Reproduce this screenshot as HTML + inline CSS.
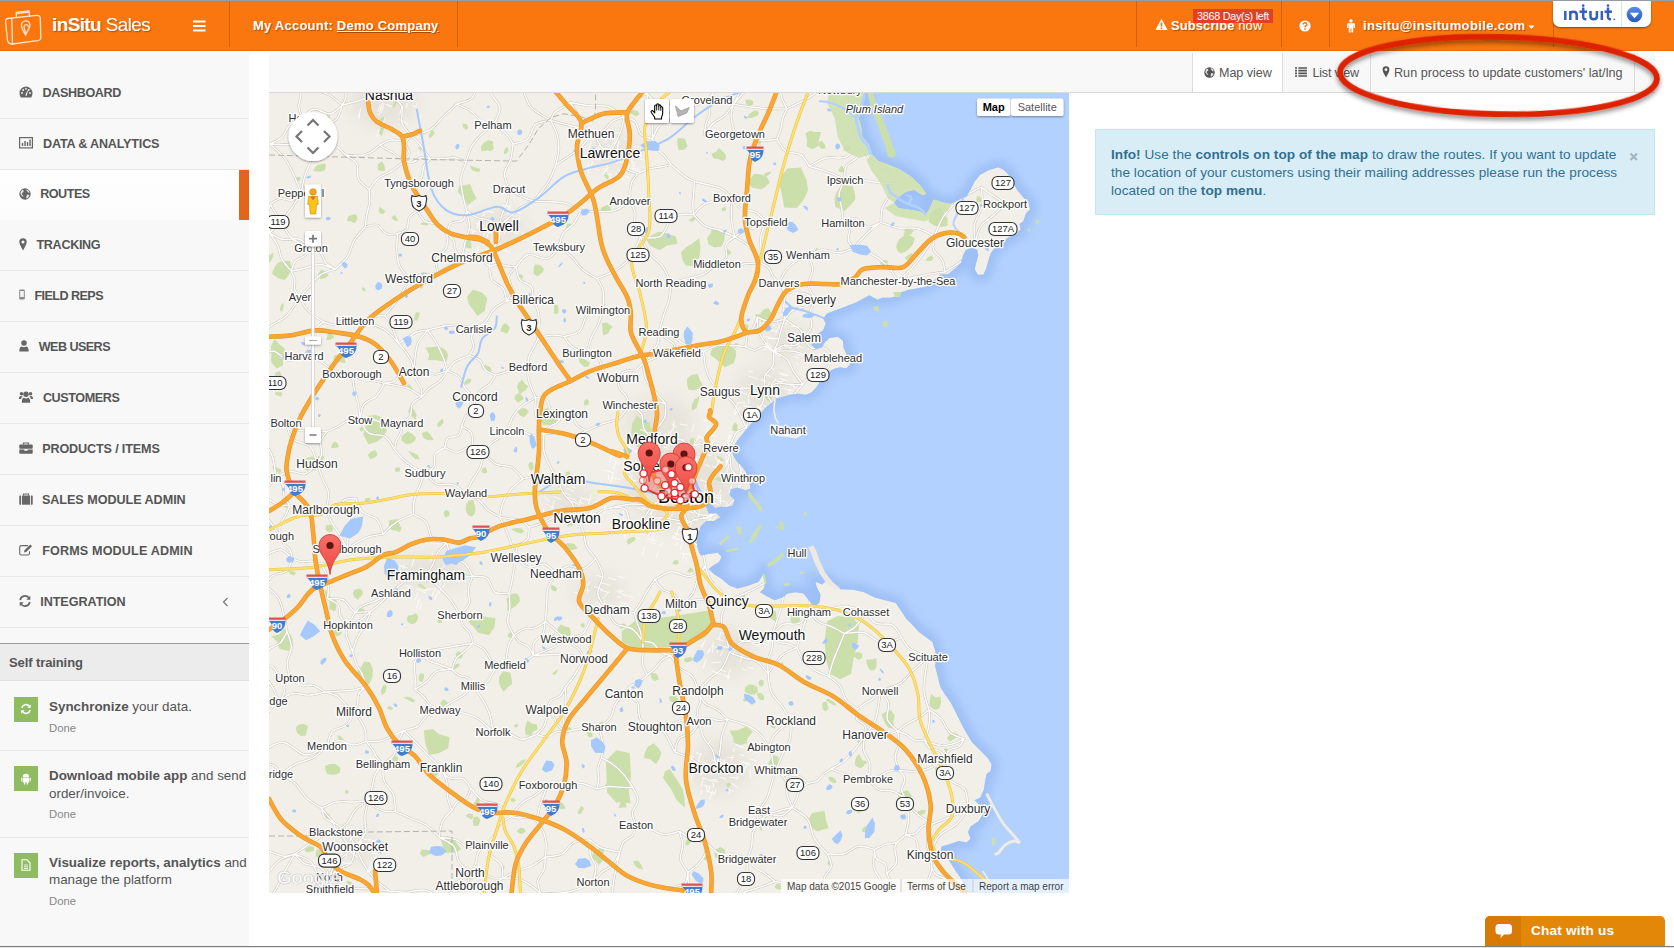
<!DOCTYPE html>
<html><head><meta charset="utf-8"><title>inSitu Sales</title>
<style>
*{box-sizing:border-box}
html,body{margin:0;padding:0}
body{width:1674px;height:948px;overflow:hidden;background:#fff;font-family:"Liberation Sans",sans-serif;color:#555;position:relative;font-size:13px}
.abs{position:absolute}
#topline{left:0;top:0;width:1674px;height:1px;background:#9a9da1}
#hdr{left:0;top:1px;width:1674px;height:50px;background:#f9770e;border-bottom:1px solid #f56a05}
#hdr .dv{position:absolute;top:0;width:1px;height:46px;background:#d4600a}
#hdr .t{position:absolute;color:#fff;font-weight:bold;font-size:13px;white-space:nowrap;text-shadow:1px 1px 1px rgba(0,0,0,.35)}
#side{left:0;top:53px;width:249px;height:893px;background:#f8f8f8}
.mi{position:absolute;left:0;width:249px;height:51px;border-bottom:1px solid #e7e7e7}
.mi span{position:absolute;top:17px;font-weight:bold;font-size:13.2px;color:#555;white-space:nowrap;letter-spacing:-.15px}
.mi svg{position:absolute}
.mi.act{background:linear-gradient(#fff,#fbfbfb);border-bottom-color:#fbfbfb}
.mi.act:after{content:"";position:absolute;right:0;top:0;width:10px;height:50px;background:#e5641c}
#st{left:0;top:643px;width:249px;height:38px;background:#ececec;border-top:1px solid #9b9b9b;border-bottom:1px solid #e0e0e0}
#st span{position:absolute;left:9px;top:11px;font-weight:bold;font-size:13px;color:#555;letter-spacing:-.1px}
.tr{position:absolute;left:0;width:249px;border-bottom:1px solid #e7e7e7}
.tr .ic{position:absolute;left:14px;width:24px;height:25px;background:#8fbc61}
.tr .tx{position:absolute;left:49px;font-size:13.4px;line-height:18px;color:#555;white-space:nowrap}
.tr .dn{position:absolute;left:49px;font-size:11.3px;color:#888}
#tb{left:269px;top:53px;width:1386px;height:40px;background:#f8f8f8;border-bottom:1px solid #d9d9d9;z-index:2}
#tb .b{position:absolute;top:0;height:39px;border-left:1px solid #dcdcdc;font-size:13px;color:#555;white-space:nowrap}
#tb .b span{position:absolute;top:12.6px}
#alert{left:1095px;top:129px;width:560px;height:86px;background:#d9edf7;border:1px solid #bce8f1;color:#31708f;font-size:13.6px;letter-spacing:.045px;line-height:18px}
#alert div{position:absolute;left:15px;top:16px;white-space:nowrap}
#chat{left:1485px;top:916px;width:180px;height:30px;background:#e38709;border-radius:5px 5px 0 0;overflow:hidden}
#chat i{position:absolute;left:0;top:0;width:36px;height:30px;background:#d87a06}
#chat span{position:absolute;left:46px;top:7px;color:#fff;font-weight:bold;font-size:13.6px;white-space:nowrap;letter-spacing:.2px}
#botline{left:0;top:946px;width:1674px;height:1px;background:#7d7d7d}
#botline2{left:0;top:947px;width:1674px;height:1px;background:#e8e8e8}
#intuit{left:1553px;top:1px;width:98px;height:26px;background:#fff;border-radius:0 0 7px 7px;box-shadow:0 1px 2px rgba(0,0,0,.45)}
#mapwrap{left:269px;top:92px;width:800px;height:801px;overflow:hidden}
#map text{font-family:"Liberation Sans",sans-serif}
</style></head><body>
<div id="topline" class="abs"></div>
<div id="hdr" class="abs">
<svg class="abs" style="left:3px;top:7px" width="42" height="38" viewBox="0 0 42 38"><g fill="none" stroke="#fde3cf" stroke-width="1.3" stroke-linejoin="round" stroke-linecap="round">
<path d="M4.500 10.500 L33.500 7.300 Q37 7 37.300 10.500 L37.800 29 Q37.900 32.200 34.700 32.700 L9.500 36 Q5.500 36.300 4.500 32.500 L2.600 14.500 Q2.300 11 4.500 10.500Z"/>
<path d="M8.800 10 L9.500 36"/><path d="M13.500 9.300 L13.200 4.300 L26 2.800 L26.500 8"/><path d="M13.500 5.500 L26.200 4.200"/>
<path d="M22.500 27 C20 22 18.200 20 18.400 17.300 A4.300 4.300 0 0 1 27 17 C27 20 24.500 22.500 22.500 27Z"/><path d="M22.700 27 C22 22 21 20.500 21 18.500 A2.200 2.200 0 0 1 25.300 18.300"/></g></svg>
<div class="t" style="left:52px;top:13px;font-size:19px;letter-spacing:-.62px;text-shadow:1px 1px 1px rgba(120,50,0,.55)">inSitu <span style="font-weight:normal">Sales</span></div>
<svg class="abs" style="left:193px;top:19px" width="13" height="12"><path d="M0 1.500h12.500M0 6h12.500M0 10.500h12.500" stroke="#fff" stroke-width="2.100"/></svg>
<div class="dv" style="left:229px"></div>
<div class="dv" style="left:457px"></div>
<div class="dv" style="left:1136px"></div>
<div class="dv" style="left:1281px"></div>
<div class="dv" style="left:1329px"></div>
<div class="dv" style="left:1553px"></div>
<div class="t" style="left:253px;top:16.5px;letter-spacing:0.225px">My Account: <span style="text-decoration:underline">Demo Company</span></div>
<svg class="abs" style="left:1155px;top:17px" width="13" height="13" viewBox="0 0 13 13"><path d="M6.500 .8 L12.600 12 H.4Z" fill="#fff"/><path d="M6.500 4.500v4M6.500 9.600v1.400" stroke="#f9770e" stroke-width="1.700"/></svg>
<div class="t" style="left:1171px;top:16.5px;letter-spacing:0.079px">Subscribe<span style="font-weight:normal"> now</span></div>
<div class="abs" style="left:1193px;top:8px;width:80px;height:14px;background:#e23c28;opacity:.96"></div>
<div class="abs" style="left:1197px;top:8.5px;font-size:10.8px;color:#fff;white-space:nowrap;letter-spacing:-0.264px">3868 Day(s) left</div>
<svg class="abs" style="left:1299px;top:19px" width="12" height="12" viewBox="0 0 12 12"><circle cx="6" cy="6" r="5.600" fill="#fff"/><path d="M4.200 4.600 Q4.200 2.800 6 2.800 Q7.800 2.800 7.800 4.400 Q7.800 5.500 6.600 6 Q6 6.300 6 7.200" fill="none" stroke="#f9770e" stroke-width="1.500"/><rect x="5.200" y="8.200" width="1.600" height="1.500" fill="#f9770e"/></svg>
<svg class="abs" style="left:1346px;top:18px" width="10" height="14" viewBox="0 0 10 14"><circle cx="5" cy="2" r="1.700" fill="#fff"/><path d="M2 4.300h6q1 0 1 1v3.700h-1.400v-2.800h-.4v7.300h-1.700v-4h-1v4h-1.700v-7.300h-.4v2.800h-1.400v-3.700q0-1 1-1z" fill="#fff"/></svg>
<div class="t" style="left:1363px;top:16.5px;letter-spacing:0.359px">insitu@insitumobile.com</div>
<svg class="abs" style="left:1528px;top:24px" width="8" height="5"><path d="M.5 .5h6l-3 3.500z" fill="#fff"/></svg>
</div>
<div id="side" class="abs">
<div class="mi" style="top:15.0px;height:51.0px"><svg class="abs" style="left:19px;top:18px" width="14" height="12" viewBox="0 0 14 12"><path d="M7 .5 A6.500 6.500 0 0 1 13.500 7 Q13.500 9.500 12.300 11.500 H1.700 Q.5 9.500 .5 7 A6.500 6.500 0 0 1 7 .5Z" fill="#666"/><g fill="#f8f8f8"><circle cx="3" cy="7" r=".9"/><circle cx="4.200" cy="4" r=".9"/><circle cx="7" cy="2.800" r=".9"/><circle cx="9.800" cy="4" r=".9"/><circle cx="11" cy="7" r=".9"/><path d="M6.300 9.500 L8.300 4.500 L8.900 4.800 L7.800 9.800Z"/></g></svg><span style="left:42.5px;top:17.9px;font-size:12.6px;letter-spacing:-0.373px">DASHBOARD</span></div>
<div class="mi" style="top:66.0px;height:51.0px"><svg class="abs" style="left:19px;top:18px" width="14" height="12" viewBox="0 0 14 12"><rect x=".6" y=".6" width="12.800" height="10.300" fill="none" stroke="#666" stroke-width="1.200"/><path d="M3.500 9v-3M6 9v-5M8.500 9v-4M11 9v-6.500" stroke="#666" stroke-width="1.400"/></svg><span style="left:43.0px;top:17.9px;font-size:12.6px;letter-spacing:-0.179px">DATA &amp; ANALYTICS</span></div>
<div class="mi act" style="top:117.0px;height:50.0px"><svg class="abs" style="left:19px;top:18px" width="12" height="12" viewBox="0 0 12 12"><circle cx="6" cy="6" r="5.700" fill="#666"/><path d="M3.500 1.500 Q5.500 2.500 4.500 4 Q2.500 4.500 3 6.500 Q4.500 7 4.500 9 Q3 8.500 1.500 6 Q1 3.500 3.500 1.500Z M7.500 1.200 Q10 2 10.800 4.500 Q9 5 8.500 3.500 Q7 3 7.500 1.200Z M8 6.500 Q10 6.500 10.500 7.500 Q9.500 10 7.500 10.500 Q7 8.500 8 6.500Z" fill="#f8f8f8" opacity=".85"/></svg><span style="left:40.2px;top:17.4px;font-size:12.6px;letter-spacing:-0.481px">ROUTES</span></div>
<div class="mi" style="top:167.0px;height:51.0px"><svg class="abs" style="left:19px;top:18px" width="8" height="13" viewBox="0 0 8 13"><path d="M4 .3 A3.700 3.700 0 0 1 7.700 4 Q7.700 6 4 12.500 Q.3 6 .3 4 A3.700 3.700 0 0 1 4 .3Z" fill="#666"/><circle cx="4" cy="4" r="1.500" fill="#f8f8f8"/></svg><span style="left:36.5px;top:17.9px;font-size:12.6px;letter-spacing:-0.334px">TRACKING</span></div>
<div class="mi" style="top:218.0px;height:51.0px"><svg class="abs" style="left:19px;top:18px" width="6" height="11" viewBox="0 0 6 11"><rect x=".2" y=".5" width="5.600" height="10" rx="1.200" fill="#8a8a8a"/><rect x="1.200" y="2" width="3.600" height="6" fill="#f4f4f4"/></svg><span style="left:34.4px;top:17.9px;font-size:12.6px;letter-spacing:-0.559px">FIELD REPS</span></div>
<div class="mi" style="top:269.0px;height:51.0px"><svg class="abs" style="left:19px;top:18px" width="10" height="12" viewBox="0 0 10 12"><circle cx="5" cy="3" r="2.800" fill="#666"/><path d="M.3 11.500 Q.3 6.500 3 6.500 Q5 8 7 6.500 Q9.700 6.500 9.700 11.500Z" fill="#666"/></svg><span style="left:38.8px;top:17.9px;font-size:12.6px;letter-spacing:-0.565px">WEB USERS</span></div>
<div class="mi" style="top:320.0px;height:51.0px"><svg class="abs" style="left:19px;top:18px" width="14" height="12" viewBox="0 0 14 12"><circle cx="7" cy="3.300" r="2.700" fill="#666"/><path d="M2.800 11.700 Q2.800 6.800 5 6.800 Q7 8 9 6.800 Q11.200 6.800 11.200 11.700Z" fill="#666"/><circle cx="2.500" cy="2.800" r="1.800" fill="#666"/><circle cx="11.500" cy="2.800" r="1.800" fill="#666"/><path d="M0 8 Q0 5 1.800 5 Q3 5.500 3.800 5.300 Q2.200 6.500 2.200 8Z M14 8 Q14 5 12.200 5 Q11 5.500 10.200 5.300 Q11.800 6.500 11.800 8Z" fill="#666"/></svg><span style="left:42.9px;top:17.9px;font-size:12.6px;letter-spacing:-0.406px">CUSTOMERS</span></div>
<div class="mi" style="top:371.0px;height:51.0px"><svg class="abs" style="left:19px;top:18px" width="14" height="12" viewBox="0 0 14 12"><path d="M4.500 2.500v-1.500h5v1.500" fill="none" stroke="#666" stroke-width="1.200"/><rect x=".3" y="2.500" width="13.400" height="4.300" rx=".8" fill="#666"/><path d="M.3 7.600h5v1.200h3.400v-1.200h5v3.300q0 .8-.8.800h-11.800q-.8 0-.8-.8z" fill="#666"/></svg><span style="left:42.2px;top:17.9px;font-size:12.6px;letter-spacing:-0.135px">PRODUCTS / ITEMS</span></div>
<div class="mi" style="top:422.0px;height:51.0px"><svg class="abs" style="left:19px;top:18px" width="14" height="12" viewBox="0 0 14 12"><path d="M4.500 2.500v-1.500h5v1.500" fill="none" stroke="#666" stroke-width="1.200"/><rect x="3" y="2.500" width="8" height="9.200" fill="#666"/><path d="M.3 3.300q0-.8.8-.8h1v9.200h-1q-.8 0-.8-.8z M13.700 3.300q0-.8-.8-.8h-1v9.200h1q.8 0 .8-.8z" fill="#666"/></svg><span style="left:41.9px;top:17.9px;font-size:12.6px;letter-spacing:-0.032px">SALES MODULE ADMIN</span></div>
<div class="mi" style="top:473.0px;height:51.0px"><svg class="abs" style="left:19px;top:18px" width="14" height="12" viewBox="0 0 14 12"><path d="M9 1.600h-6.500q-1.800 0-1.800 1.800v5.800q0 1.800 1.800 1.800h6.200q1.800 0 1.800-1.800v-2" fill="none" stroke="#666" stroke-width="1.100"/><path d="M5 8.500 L5.500 6.300 L11.300 .5 L13 2.200 L7.200 8Z" fill="#666"/></svg><span style="left:42.2px;top:17.9px;font-size:12.6px;letter-spacing:0.147px">FORMS MODULE ADMIN</span></div>
<div class="mi" style="top:524.0px;height:51.0px"><svg class="abs" style="left:19px;top:18px" width="12" height="12" viewBox="0 0 12 12"><path d="M1.200 5 A4.900 4.900 0 0 1 9.800 2.800 M10.800 7 A4.900 4.900 0 0 1 2.200 9.200" fill="none" stroke="#666" stroke-width="1.700"/><path d="M11.300 .8v4h-4z M.7 11.200v-4h4z" fill="#666"/></svg><span style="left:40.2px;top:17.9px;font-size:12.6px;letter-spacing:-0.039px">INTEGRATION</span></div>
<svg class="abs" style="left:222px;top:544px" width="7" height="10"><path d="M5.500 1 L1.500 5 L5.500 9" fill="none" stroke="#777" stroke-width="1.200"/></svg>
<div id="st" class="abs" style="top:590px"><span>Self training</span></div>
<div class="tr" style="top:628px;height:70px"><div class="ic" style="top:16px"><svg class="abs" style="left:6px;top:6px" width="12" height="12" viewBox="0 0 12 12"><path d="M1.800 5 A4.300 4.300 0 0 1 9.300 3.200 M10.200 7 A4.300 4.300 0 0 1 2.700 8.800" fill="none" stroke="#fff" stroke-width="1.500"/><path d="M10.800 1.200v3.500h-3.500z M1.200 10.800v-3.500h3.500z" fill="#fff"/></svg></div><div class="tx" style="top:16.5px"><b>Synchronize</b> your data.</div><div class="dn" style="top:40.8px">Done</div></div>
<div class="tr" style="top:698px;height:87px"><div class="ic" style="top:15px"><svg class="abs" style="left:7px;top:7px" width="10" height="12" viewBox="0 0 10 12"><path d="M1.800 4 A3.200 3.200 0 0 1 8.200 4Z M1.800 4.600h6.400v4.400q0 .6-.6.600h-5.200q-.6 0-.6-.6z M.2 4.800h1v3.500h-1z M8.800 4.800h1v3.500h-1z M3 9.500h1.200v2h-1.200z M5.800 9.500h1.200v2h-1.200z" fill="#fff"/></svg></div><div class="tx" style="top:15.7px"><b>Download mobile app</b> and send</div><div class="tx" style="top:33.6px">order/invoice.</div><div class="dn" style="top:57.2px">Done</div></div>
<div class="tr" style="top:785px;height:108px;border-bottom:0"><div class="ic" style="top:15px"><svg class="abs" style="left:7px;top:6px" width="10" height="12" viewBox="0 0 10 12"><path d="M1 .8h5l3 3v7.400h-8z" fill="none" stroke="#fff" stroke-width="1.100"/><path d="M3 6h4M3 7.800h4M3 9.500h4" stroke="#fff" stroke-width=".8"/></svg></div><div class="tx" style="top:15.8px"><b>Visualize reports, analytics</b> and</div><div class="tx" style="top:33.1px">manage the platform</div><div class="dn" style="top:57.4px">Done</div></div>
</div>
<div id="tb" class="abs">
<div class="b" style="left:922.5px;width:90.5px;background:#fff"><svg class="abs" style="left:11px;top:13.500px" width="11" height="11" viewBox="0 0 12 12"><circle cx="6" cy="6" r="5.700" fill="#555"/><path d="M3.500 1.500 Q5.500 2.500 4.500 4 Q2.500 4.500 3 6.500 Q4.500 7 4.500 9 Q3 8.500 1.500 6 Q1 3.500 3.500 1.500Z M7.500 1.200 Q10 2 10.800 4.500 Q9 5 8.500 3.500 Q7 3 7.500 1.200Z M8 6.500 Q10 6.500 10.500 7.500 Q9.500 10 7.500 10.500 Q7 8.500 8 6.500Z" fill="#fff" opacity=".85"/></svg><span style="left:26.500px;font-size:12.6px;letter-spacing:-0.063px">Map view</span></div>
<div class="b" style="left:1013.0px;width:87.5px"><svg class="abs" style="left:12px;top:14px" width="12" height="10"><path d="M0 1h2M3.300 1h8.700M0 3.700h2M3.300 3.700h8.700M0 6.400h2M3.300 6.400h8.700M0 9h2M3.300 9h8.700" stroke="#555" stroke-width="1.700"/></svg><span style="left:29.500px;font-size:12.6px;letter-spacing:-0.222px">List view</span></div>
<div class="b" style="left:1100.5px;width:264.0px"><svg class="abs" style="left:11px;top:13px" width="8" height="12" viewBox="0 0 8 13"><path d="M4 .3 A3.700 3.700 0 0 1 7.700 4 Q7.700 6 4 12.500 Q.3 6 .3 4 A3.700 3.700 0 0 1 4 .3Z" fill="#555"/><circle cx="4" cy="4" r="1.500" fill="#f7f7f7"/></svg><span style="left:23.500px;font-size:12.6px;letter-spacing:0.017px">Run process to update customers' lat/lng</span></div>
<div class="b" style="left:1364.5px;width:1px"></div>
</div>
<div id="mapwrap" class="abs">
<svg id="map" width="800" height="801" viewBox="0 0 800 801">
<defs><filter id="gl" x="-10%" y="-10%" width="120%" height="120%"><feGaussianBlur stdDeviation="5"/></filter><filter id="ub" x="-30%" y="-30%" width="160%" height="160%"><feGaussianBlur stdDeviation="9"/></filter><clipPath id="seaclip"><path d="M595.4 0.0 L594.8 5.3 L593.5 15.8 L589.6 26.4 L592.2 34.3 L593.5 44.8 L600.1 52.7 L602.7 62.0 L609.3 69.1 L615.9 71.2 L629.1 76.5 L642.3 84.4 L651.5 93.6 L657.3 101.5 L654.2 103.4 L644.9 98.1 L637.0 99.7 L629.1 105.5 L625.2 110.8 L629.1 116.0 L639.7 117.4 L650.2 119.2 L656.8 122.6 L660.8 116.0 L664.7 107.6 L673.9 110.2 L681.9 112.1 L689.8 108.1 L694.5 105.5 L697.7 104.2 L701.6 97.6 L705.6 89.7 L710.9 83.1 L718.8 78.6 L729.3 75.2 L734.6 77.8 L738.6 81.8 L743.8 89.7 L747.8 97.6 L754.4 105.5 L759.7 110.8 L761.0 117.4 L757.0 121.3 L754.4 129.2 L750.4 131.9 L751.7 137.1 L746.5 142.4 L739.9 145.0 L734.6 149.0 L727.2 154.3 L721.9 160.9 L719.3 168.8 L717.2 176.7 L714.3 182.8 L709.0 182.8 L705.6 177.2 L707.4 170.1 L709.3 163.5 L708.2 157.7 L702.4 155.6 L696.6 158.2 L694.0 163.5 L691.9 170.9 L685.8 176.7 L679.2 182.0 L671.3 182.5 L666.0 187.2 L660.8 192.5 L655.5 195.1 L647.6 196.5 L639.7 197.8 L631.8 200.4 L626.5 204.4 L621.2 205.7 L613.3 205.7 L608.5 207.8 L600.3 203.2 L587.1 210.5 L576.6 214.5 L566.0 218.5 L558.1 221.6 L554.2 226.4 L556.8 231.6 L554.2 238.2 L548.9 241.7 L544.4 247.5 L542.3 252.7 L547.0 257.0 L552.8 255.4 L556.0 250.1 L560.8 246.1 L568.7 244.8 L573.9 248.8 L574.5 255.4 L579.2 265.9 L581.1 272.5 L577.1 276.5 L571.3 275.2 L566.0 276.5 L560.8 279.1 L555.0 284.4 L550.7 289.7 L547.6 294.9 L542.8 300.2 L537.0 302.8 L529.1 301.8 L521.2 302.8 L515.9 304.2 L510.7 305.5 L506.7 306.8 L502.7 310.8 L496.1 316.0 L489.6 323.9 L481.6 331.9 L476.4 338.4 L469.8 346.4 L464.5 354.3 L463.2 360.9 L467.1 368.8 L472.4 374.1 L476.4 379.3 L480.3 389.9 L481.6 396.5 L476.4 398.3 L468.5 395.7 L461.9 397.0 L460.5 403.1 L465.8 408.3 L463.2 414.1 L455.3 415.2 L450.0 414.1 L452.7 414.6 L446.1 415.9 L442.2 412.0 L436.9 406.7 L430.3 396.1 L426.4 385.6 L424.3 384.3 L426.4 394.8 L433.0 406.7 L438.2 417.2 L439.6 421.2 L447.5 421.2 L451.4 425.2 L444.8 429.1 L436.9 429.1 L431.6 434.4 L429.0 442.3 L427.7 450.2 L429.0 458.1 L431.6 463.4 L439.6 462.1 L448.8 460.8 L452.7 464.7 L450.1 470.0 L443.5 473.9 L439.6 477.1 L444.8 481.9 L452.7 487.1 L460.7 493.7 L468.6 496.4 L479.1 493.7 L489.7 489.8 L493.6 483.2 L496.3 489.8 L494.9 496.4 L491.0 500.3 L500.2 505.6 L505.5 508.2 L513.4 505.6 L518.7 501.6 L526.6 500.3 L534.5 501.6 L539.8 508.2 L545.0 514.8 L550.3 510.9 L551.6 503.0 L547.7 495.0 L546.4 489.8 L553.0 492.4 L558.2 487.7 L563.5 492.4 L571.4 497.2 L584.6 497.7 L595.1 500.3 L605.7 505.6 L616.2 508.2 L626.8 510.9 L632.1 518.8 L637.3 526.7 L642.6 532.0 L650.0 539.9 L663.4 550.0 L666.0 557.9 L667.4 565.8 L666.0 573.7 L668.7 584.3 L671.3 594.8 L675.3 601.4 L681.9 610.7 L688.4 623.8 L695.0 637.0 L703.0 650.2 L710.9 658.1 L718.8 666.0 L722.7 672.6 L721.4 679.2 L717.5 681.9 L716.1 689.8 L714.8 697.7 L711.4 705.6 L705.6 708.2 L710.9 713.5 L716.1 718.8 L709.5 729.3 L701.6 734.6 L699.0 739.9 L701.6 746.5 L697.7 750.4 L689.8 749.1 L681.9 751.7 L672.6 754.4 L671.3 759.7 L676.6 763.6 L681.9 771.5 L687.1 779.4 L692.4 787.3 L696.4 800.0 L697.2 802.1 L800.0 801.0 L800.0 0.0Z"/></clipPath><linearGradient id="pin" x1="0" y1="0" x2="0" y2="1"><stop offset="0" stop-color="#f8706a"/><stop offset="1" stop-color="#ee4840"/></linearGradient></defs>
<rect width="800" height="801" fill="#f2efe9"/>
<g fill="#e6e2d9" filter="url(#ub)" opacity=".9">
<ellipse cx="415" cy="395" rx="60" ry="45"/>
<ellipse cx="230" cy="135" rx="28" ry="18"/>
<ellipse cx="345" cy="60" rx="26" ry="18"/>
<ellipse cx="115" cy="10" rx="35" ry="25"/>
<ellipse cx="450" cy="675" rx="30" ry="28"/>
<ellipse cx="160" cy="480" rx="40" ry="18"/>
<ellipse cx="300" cy="410" rx="25" ry="20"/>
<ellipse cx="495" cy="300" rx="30" ry="25"/>
<ellipse cx="520" cy="250" rx="25" ry="18"/>
<ellipse cx="90" cy="755" rx="22" ry="16"/>
<ellipse cx="330" cy="500" rx="25" ry="18"/>
<ellipse cx="460" cy="560" rx="25" ry="25"/>
<ellipse cx="390" cy="330" rx="35" ry="25"/>
</g>
<g fill="#cbdfab"><path d="M203.3 109.4 L198.8 113.5 L194.2 105.6 L188.5 99.7 L190.4 93.5 L195.7 93.2 L201.2 92.0 L203.9 99.6 L207.6 106.4Z"/><path d="M216.9 212.8 L215.7 219.1 L208.5 224.0 L203.2 216.6 L199.6 211.9 L198.1 204.5 L204.0 197.6 L213.3 200.7 L218.3 206.6Z"/><path d="M160.2 262.2 L156.2 255.7 L166.4 254.7 L173.1 255.8 L177.3 258.8 L179.2 263.3 L177.1 269.9 L167.6 268.2 L159.0 268.1Z"/><path d="M8.6 185.9 L2.8 181.8 L5.6 175.3 L8.5 171.2 L13.4 168.9 L21.1 168.8 L22.6 176.3 L20.2 182.5 L15.6 188.0Z"/><path d="M107.3 350.1 L99.4 352.2 L94.2 342.2 L97.2 332.7 L99.6 323.7 L107.0 323.0 L115.5 326.6 L117.8 338.7 L112.6 346.2Z"/><path d="M2.3 262.0 L1.9 254.3 L5.8 247.0 L11.1 253.1 L16.0 256.8 L14.0 264.2 L13.9 273.5 L7.6 276.5 L2.2 270.6Z"/><path d="M271.7 327.7 L269.3 322.0 L273.7 317.3 L279.7 316.1 L284.5 319.4 L288.9 324.5 L287.2 331.6 L280.3 333.0 L274.1 333.2Z"/><path d="M383.1 339.8 L378.2 348.8 L370.3 355.9 L362.2 350.6 L362.3 339.9 L363.2 331.6 L368.0 323.4 L374.2 329.0 L380.7 330.6Z"/><path d="M257.2 297.7 L254.6 299.5 L250.6 302.4 L249.1 297.7 L248.0 294.4 L249.4 290.9 L253.2 287.4 L256.1 291.9 L259.2 294.3Z"/><path d="M390.7 158.3 L381.3 154.0 L376.7 147.1 L383.8 142.7 L389.5 139.7 L397.4 141.2 L407.0 144.5 L408.4 152.1 L397.7 153.5Z"/><path d="M145.1 349.6 L142.0 351.6 L137.2 352.0 L132.4 348.6 L132.7 344.1 L135.6 342.1 L138.6 339.5 L143.4 341.9 L147.2 345.9Z"/><path d="M32.7 372.7 L35.1 368.2 L39.6 364.9 L46.0 364.5 L47.4 369.0 L52.6 372.6 L48.1 377.1 L41.5 379.4 L35.2 377.3Z"/><path d="M238.2 241.8 L235.1 240.4 L231.3 239.3 L232.6 235.3 L233.7 232.8 L236.1 231.3 L238.8 232.9 L241.0 235.7 L239.6 238.7Z"/><path d="M88.4 126.6 L87.3 129.0 L85.2 131.3 L82.6 129.6 L78.1 128.9 L79.0 124.6 L82.4 123.1 L85.1 122.3 L88.0 123.6Z"/><path d="M272.0 181.5 L268.7 184.5 L264.3 181.5 L264.7 176.2 L266.0 172.6 L269.5 172.8 L272.1 173.8 L274.7 176.2 L274.3 179.7Z"/><path d="M333.4 238.8 L333.6 236.0 L332.8 231.2 L337.9 230.6 L340.7 232.8 L343.8 234.7 L340.9 237.8 L339.3 241.4 L334.3 243.5Z"/><path d="M44.1 78.9 L46.0 75.6 L48.2 72.9 L51.7 72.4 L56.4 71.4 L56.8 74.8 L55.9 78.3 L51.3 79.7 L48.0 79.6Z"/><path d="M212.4 59.6 L212.0 54.7 L214.8 50.4 L219.5 48.1 L224.0 49.2 L224.2 53.4 L224.6 56.9 L221.2 59.3 L218.0 58.6Z"/><path d="M539.0 98.1 L535.2 106.9 L527.8 116.1 L515.2 115.4 L512.8 101.4 L509.2 87.9 L518.4 76.6 L531.9 75.5 L537.6 88.2Z"/><path d="M496.0 95.1 L491.9 97.3 L487.4 96.5 L482.1 93.9 L480.5 87.1 L485.4 81.7 L492.1 82.5 L497.8 84.7 L500.9 90.7Z"/><path d="M455.5 148.0 L452.6 154.5 L445.5 155.6 L439.4 152.5 L438.1 146.3 L441.1 141.8 L443.8 135.8 L449.6 138.8 L455.7 141.3Z"/><path d="M565.5 106.5 L567.7 100.0 L573.1 92.2 L583.6 94.3 L586.1 101.9 L586.2 107.4 L582.6 111.9 L575.6 119.0 L566.2 114.7Z"/><path d="M430.4 164.9 L424.0 173.9 L416.4 173.5 L413.4 167.5 L411.8 160.7 L417.2 154.9 L421.8 152.6 L430.2 146.3 L431.5 155.4Z"/><path d="M455.8 275.3 L448.6 268.6 L441.1 262.6 L444.1 254.0 L454.2 253.4 L461.2 253.7 L466.7 257.9 L467.0 263.9 L464.8 270.9Z"/><path d="M501.1 228.0 L497.3 228.3 L492.2 230.2 L491.5 224.9 L491.6 220.9 L494.4 217.5 L499.4 215.9 L502.0 220.3 L505.2 224.6Z"/><path d="M543.4 57.2 L537.9 54.6 L537.9 47.6 L536.5 41.3 L541.3 38.7 L545.4 40.0 L552.3 40.1 L549.9 47.9 L548.7 54.4Z"/><path d="M419.6 297.8 L418.0 292.4 L418.0 286.8 L422.4 282.9 L428.9 281.7 L430.6 288.1 L434.0 292.7 L429.7 296.5 L425.2 298.3Z"/><path d="M628.3 158.9 L627.1 154.2 L629.8 147.8 L636.8 142.1 L642.1 144.1 L645.9 146.6 L643.9 152.6 L639.0 157.9 L632.4 161.4Z"/><path d="M671.3 135.1 L665.7 133.7 L659.6 130.1 L661.1 123.1 L664.9 117.2 L672.2 115.8 L675.5 122.2 L678.8 126.8 L678.3 133.9Z"/><path d="M408.5 52.9 L408.1 49.7 L408.9 45.9 L412.8 46.2 L416.1 46.7 L417.0 50.0 L418.7 54.3 L415.1 57.8 L409.7 58.2Z"/><path d="M457.1 66.7 L453.6 69.1 L449.5 67.1 L444.4 66.5 L442.5 61.7 L447.1 59.8 L449.8 56.0 L453.8 59.5 L456.5 62.6Z"/><path d="M86.6 581.8 L91.9 575.4 L95.3 569.6 L101.0 570.2 L104.0 577.4 L103.4 584.6 L101.0 590.9 L95.8 595.9 L92.9 587.0Z"/><path d="M209.3 540.8 L204.8 535.2 L199.9 530.5 L200.2 523.1 L208.4 520.2 L215.1 524.5 L226.6 526.3 L225.4 535.5 L219.8 543.2Z"/><path d="M243.0 592.2 L239.2 594.8 L234.7 599.8 L231.0 594.5 L230.0 590.0 L230.1 584.9 L234.2 579.2 L241.3 580.8 L242.8 587.3Z"/><path d="M179.2 656.3 L169.8 661.2 L160.4 662.8 L157.0 653.9 L155.9 647.9 L154.8 638.5 L163.9 637.0 L169.9 641.9 L180.7 645.2Z"/><path d="M10.6 557.0 L8.5 549.9 L2.2 544.0 L10.2 542.4 L14.7 536.8 L21.1 542.1 L23.7 547.6 L24.0 553.5 L19.4 558.9Z"/><path d="M91.7 504.8 L88.8 507.7 L85.4 505.3 L84.1 502.2 L84.4 499.0 L87.0 497.2 L90.2 496.5 L93.3 498.4 L94.0 502.0Z"/><path d="M342.4 702.8 L335.7 694.1 L340.1 687.2 L345.4 682.0 L353.3 687.2 L360.6 692.1 L359.9 699.5 L361.6 711.2 L350.6 710.4Z"/><path d="M390.8 666.3 L387.0 672.2 L381.5 667.2 L374.7 666.1 L376.2 659.6 L379.0 654.8 L384.7 651.2 L389.4 656.0 L392.4 660.7Z"/><path d="M238.4 519.1 L238.5 512.5 L237.3 506.9 L242.2 502.2 L247.6 501.2 L250.5 504.7 L250.9 509.3 L247.7 512.9 L244.6 515.4Z"/><path d="M391.8 546.2 L385.0 550.4 L379.4 551.5 L374.7 549.0 L366.8 545.1 L368.6 536.3 L376.2 532.2 L383.2 535.2 L387.4 539.5Z"/><path d="M186.4 761.0 L181.1 760.8 L175.9 760.4 L174.5 755.3 L172.0 748.4 L178.1 743.7 L184.8 746.4 L187.6 751.3 L192.3 756.9Z"/><path d="M130.9 440.0 L126.8 438.7 L122.6 438.1 L119.8 433.4 L120.3 428.4 L124.5 427.6 L128.7 427.2 L130.5 432.3 L132.4 436.3Z"/><path d="M70.8 680.7 L66.7 682.4 L63.1 682.7 L58.5 682.0 L56.6 678.4 L55.9 673.9 L60.7 671.9 L67.0 671.9 L71.4 676.1Z"/><path d="M256.6 642.5 L255.9 637.4 L256.7 633.6 L258.5 628.4 L263.1 631.8 L267.9 632.5 L268.5 637.4 L264.4 639.5 L261.8 644.1Z"/><path d="M288.9 541.5 L288.5 536.7 L291.6 532.5 L296.2 534.6 L300.3 535.2 L301.7 539.3 L301.3 544.3 L296.6 546.8 L291.4 545.9Z"/><path d="M31.6 644.1 L27.9 640.4 L26.6 635.6 L30.1 632.6 L33.4 632.1 L36.5 632.4 L39.3 634.8 L37.9 638.2 L37.0 643.4Z"/><path d="M142.4 532.2 L139.0 530.2 L137.5 526.5 L139.5 523.2 L142.9 523.2 L146.7 521.1 L149.3 524.5 L148.4 528.4 L146.1 531.3Z"/><path d="M326.3 768.0 L321.3 767.2 L324.0 761.5 L327.2 758.4 L330.7 756.2 L335.7 756.0 L334.5 762.0 L334.7 767.9 L329.7 773.0Z"/><path d="M202.7 424.6 L199.3 423.3 L196.7 418.6 L197.0 412.0 L200.4 408.3 L204.3 408.1 L205.7 413.8 L206.5 417.9 L205.4 422.2Z"/><path d="M403.8 548.4 L400.4 543.9 L407.5 536.7 L412.5 532.0 L419.0 529.2 L425.8 530.3 L424.4 538.9 L417.4 547.8 L409.3 549.4Z"/><path d="M471.3 652.9 L464.8 650.7 L464.1 645.4 L460.4 638.7 L469.2 638.3 L477.1 634.4 L483.9 639.8 L478.5 646.1 L478.0 651.3Z"/><path d="M540.3 735.1 L540.3 725.8 L543.2 721.0 L547.9 719.9 L555.5 718.7 L557.0 728.6 L559.8 736.5 L553.9 737.6 L548.7 739.6Z"/><path d="M614.8 628.5 L612.6 622.2 L617.1 619.7 L622.0 618.1 L625.6 623.6 L624.5 629.5 L624.8 636.5 L619.6 636.1 L616.7 631.9Z"/><path d="M672.1 611.0 L670.4 616.3 L666.7 618.1 L663.4 616.4 L660.5 613.5 L660.7 608.4 L662.0 601.9 L666.6 605.6 L671.6 604.7Z"/><path d="M402.3 697.6 L394.0 686.1 L396.0 679.3 L400.8 677.0 L408.4 688.6 L413.6 697.3 L415.4 705.8 L415.9 715.7 L407.4 707.9Z"/><path d="M605.1 578.4 L601.2 578.1 L599.0 575.5 L598.0 572.6 L597.0 567.5 L602.1 567.6 L607.3 566.2 L607.6 571.6 L607.3 575.2Z"/><path d="M482.1 602.4 L479.1 601.9 L475.4 599.3 L476.6 594.8 L480.3 592.2 L484.4 593.0 L488.3 595.1 L489.0 599.7 L485.6 602.6Z"/><path d="M502.7 673.4 L498.9 671.9 L500.9 667.7 L503.7 663.7 L508.1 663.7 L509.9 667.1 L509.3 670.4 L509.8 675.4 L505.1 674.4Z"/><path d="M636.7 708.5 L633.1 707.6 L629.1 705.5 L628.7 700.9 L634.1 699.8 L638.2 698.1 L640.8 701.1 L642.8 704.2 L640.4 707.2Z"/><path d="M530.8 529.0 L528.6 530.9 L524.5 533.1 L521.6 528.9 L521.7 525.4 L521.1 520.7 L526.0 519.1 L530.0 522.8 L531.0 526.2Z"/><path d="M454.3 765.4 L452.1 768.3 L448.7 767.0 L446.0 765.1 L445.5 761.5 L446.8 757.5 L451.3 754.9 L455.9 757.6 L456.5 762.3Z"/><path d="M591.6 676.2 L588.1 675.1 L585.7 672.2 L586.2 668.8 L587.1 665.6 L590.1 661.8 L592.5 666.9 L595.2 669.7 L594.9 674.1Z"/><path d="M352.7 539.6 L365.9 529.0 L387.0 526.4 L405.5 523.7 L423.9 521.1 L439.8 518.5 L443.7 531.6 L437.1 544.8 L421.3 552.7 L400.2 555.4 L379.1 556.7 L363.3 555.4 L352.7 550.1Z"/><path d="M558.2 529.3 L568.8 524.1 L584.6 525.4 L589.9 534.6 L588.6 550.4 L584.6 566.2 L582.0 582.1 L571.4 587.3 L560.9 582.1 L556.9 566.2 L555.6 547.8Z"/><path d="M336.9 668.8 L347.5 658.2 L360.7 660.9 L362.0 684.6 L358.0 705.7 L347.5 711.0 L338.2 700.4Z"/><path d="M357.6 449.8 L358.8 447.0 L363.3 445.0 L367.1 445.5 L365.6 448.8 L359.5 452.7Z"/><path d="M403.0 471.6 L404.8 468.9 L406.3 468.0 L409.2 468.4 L409.5 472.1 L406.2 472.8Z"/><path d="M503.5 635.8 L501.8 634.9 L501.7 632.1 L504.7 631.4 L506.9 633.6 L506.2 636.8Z"/><path d="M75.0 650.2 L73.1 649.7 L69.7 646.9 L68.4 643.6 L71.4 643.9 L75.8 648.7Z"/><path d="M123.6 16.7 L123.8 13.3 L125.7 9.3 L127.2 9.5 L128.8 10.4 L126.2 14.1Z"/><path d="M149.9 194.1 L150.8 191.7 L152.5 191.7 L153.8 193.1 L154.0 195.9 L151.7 196.7Z"/><path d="M355.1 674.9 L353.5 677.5 L349.2 676.1 L348.7 672.6 L351.6 671.2 L355.7 671.7Z"/><path d="M403.2 530.1 L401.7 532.0 L397.0 532.6 L395.3 529.8 L397.3 527.2 L401.9 528.0Z"/><path d="M254.2 185.5 L252.5 186.8 L249.6 183.7 L250.2 181.9 L252.1 182.4 L254.4 183.7Z"/><path d="M-2.5 172.6 L-2.6 168.8 L-0.2 163.3 L4.7 160.8 L3.4 166.8 L0.8 170.2Z"/><path d="M60.9 508.1 L58.0 507.4 L56.1 502.5 L55.1 497.6 L58.9 499.5 L61.5 505.0Z"/><path d="M76.7 271.3 L70.2 269.9 L64.1 267.0 L65.7 263.1 L69.3 262.6 L75.1 265.2Z"/><path d="M96.4 199.8 L94.0 199.0 L93.0 197.0 L93.2 195.6 L94.8 195.4 L96.5 197.2Z"/><path d="M634.4 142.7 L635.2 140.3 L639.0 140.0 L643.8 141.1 L639.5 143.6 L636.4 143.9Z"/><path d="M154.9 586.0 L153.5 589.7 L150.2 589.0 L149.5 584.9 L151.5 581.1 L155.0 581.9Z"/><path d="M94.3 338.5 L91.9 339.7 L90.2 336.3 L92.3 335.0 L94.3 334.0 L95.4 336.8Z"/><path d="M244.3 710.2 L242.2 709.6 L241.7 707.6 L242.4 705.7 L244.7 705.9 L247.0 708.5Z"/><path d="M84.0 793.0 L80.7 793.3 L78.4 792.6 L76.8 790.0 L79.5 788.4 L82.3 790.2Z"/><path d="M239.4 59.1 L237.7 61.4 L234.9 62.2 L235.3 58.4 L236.4 56.1 L239.2 55.3Z"/><path d="M197.8 481.4 L196.4 484.3 L191.9 483.8 L192.1 480.8 L193.4 479.4 L195.8 479.5Z"/><path d="M457.5 693.8 L457.5 691.7 L460.9 690.6 L462.0 692.6 L461.1 694.3 L458.4 695.9Z"/><path d="M198.0 155.9 L194.4 153.2 L197.4 148.6 L201.2 147.8 L202.3 151.2 L202.7 156.5Z"/><path d="M150.9 761.8 L152.4 757.4 L158.6 757.9 L161.8 758.9 L160.8 762.1 L154.4 764.9Z"/><path d="M335.2 83.4 L335.9 80.2 L337.7 79.4 L339.3 82.8 L339.3 87.9 L336.8 86.0Z"/><path d="M187.7 565.8 L186.6 561.3 L189.9 559.1 L193.5 561.7 L193.6 565.3 L191.3 566.8Z"/><path d="M478.6 237.9 L475.7 236.5 L474.5 234.8 L475.8 231.7 L479.0 232.7 L479.4 234.7Z"/><path d="M59.7 183.2 L56.6 185.9 L51.4 187.2 L49.2 182.1 L52.4 177.5 L57.1 180.1Z"/><path d="M495.4 225.3 L493.9 226.7 L487.4 225.3 L485.8 222.6 L489.5 222.2 L494.6 223.3Z"/><path d="M11.6 219.6 L10.8 216.9 L12.5 212.3 L14.9 211.1 L14.7 214.4 L14.0 218.4Z"/><path d="M143.9 298.9 L141.1 297.6 L137.8 294.0 L138.9 292.3 L140.9 292.8 L143.1 295.7Z"/><path d="M297.1 716.6 L291.3 717.2 L286.1 713.8 L284.5 710.0 L287.7 707.0 L294.0 711.6Z"/><path d="M114.2 29.8 L110.4 31.9 L107.8 30.9 L111.2 27.1 L113.9 24.7 L116.3 25.5Z"/><path d="M558.3 771.6 L559.3 768.9 L560.4 767.6 L562.1 769.5 L562.5 771.8 L561.5 774.5Z"/><path d="M384.6 588.9 L382.0 585.0 L381.5 581.0 L386.6 581.2 L389.2 583.9 L389.8 587.7Z"/><path d="M56.6 437.5 L56.7 433.5 L62.4 432.5 L64.3 436.2 L63.1 439.7 L58.8 439.8Z"/><path d="M593.3 565.6 L589.7 567.9 L584.7 564.4 L586.3 560.4 L589.6 560.1 L593.5 561.8Z"/><path d="M279.1 552.0 L277.5 548.7 L280.4 544.7 L285.4 541.8 L286.3 547.4 L282.4 551.0Z"/><path d="M338.8 634.1 L335.7 636.1 L329.6 634.3 L330.0 631.2 L332.3 629.8 L338.0 630.4Z"/><path d="M501.0 309.5 L498.2 308.4 L495.3 303.9 L498.9 302.1 L502.2 302.7 L503.0 307.1Z"/><path d="M66.3 519.6 L60.5 517.2 L60.3 509.6 L62.9 506.8 L67.3 506.7 L67.4 513.2Z"/><path d="M355.6 670.8 L353.5 673.8 L350.8 674.7 L350.2 670.7 L350.9 666.4 L353.6 667.6Z"/><path d="M26.1 482.3 L24.8 483.8 L20.8 481.7 L19.0 478.3 L23.2 479.2 L26.8 480.3Z"/><path d="M492.9 739.3 L491.2 737.8 L490.1 735.6 L490.3 733.4 L492.4 733.7 L492.9 737.0Z"/><path d="M240.9 546.1 L238.5 544.6 L239.5 541.4 L240.8 540.5 L243.1 540.5 L243.3 544.4Z"/><path d="M353.7 715.6 L349.6 715.9 L350.7 712.0 L353.3 708.8 L356.8 711.3 L357.5 715.4Z"/><path d="M164.9 348.1 L159.3 348.3 L154.9 346.4 L152.5 341.2 L157.9 338.9 L162.0 343.3Z"/><path d="M468.3 254.7 L465.8 256.1 L464.1 254.3 L465.1 252.0 L467.0 250.9 L469.6 251.8Z"/><path d="M666.6 680.0 L665.8 676.1 L671.2 673.7 L672.8 677.9 L674.3 682.5 L668.8 682.0Z"/><path d="M220.1 139.3 L218.6 136.7 L220.3 133.2 L222.6 131.7 L224.1 133.9 L222.7 137.7Z"/><path d="M169.1 335.2 L168.0 332.0 L170.6 329.1 L173.8 326.6 L174.7 330.3 L172.1 333.8Z"/><path d="M246.5 676.6 L248.4 671.6 L252.8 668.3 L256.9 667.0 L255.1 671.1 L251.8 674.1Z"/><path d="M60.6 29.1 L59.0 28.2 L57.7 22.6 L58.9 21.5 L60.6 21.6 L61.1 26.9Z"/><path d="M245.5 635.1 L245.3 632.9 L246.9 632.0 L248.6 631.7 L249.0 633.5 L247.9 635.8Z"/><path d="M370.6 22.8 L366.4 23.9 L359.8 20.4 L357.3 16.8 L362.5 17.6 L368.6 19.0Z"/><path d="M112.9 44.1 L109.5 40.9 L110.9 35.8 L112.5 31.6 L115.9 34.2 L114.3 39.1Z"/><path d="M507.0 530.1 L502.4 527.1 L497.8 523.0 L501.9 519.9 L506.6 518.7 L507.3 524.6Z"/><path d="M547.6 165.0 L546.2 161.0 L546.2 157.8 L547.6 155.3 L549.1 157.7 L548.7 160.8Z"/><path d="M11.8 379.8 L10.3 381.7 L5.0 377.8 L2.8 374.0 L7.7 375.6 L12.5 377.7Z"/><path d="M222.8 278.5 L219.5 280.3 L214.9 278.0 L211.6 274.2 L216.4 273.1 L221.4 274.9Z"/><path d="M489.2 605.9 L487.4 601.5 L492.2 600.8 L494.8 603.7 L495.2 608.0 L491.1 608.1Z"/><path d="M98.8 363.0 L101.7 359.6 L106.7 358.3 L108.5 362.7 L105.8 365.5 L101.2 367.3Z"/><path d="M308.8 456.2 L303.4 458.1 L297.6 458.3 L293.3 453.8 L298.8 451.0 L305.3 451.8Z"/><path d="M522.8 166.5 L520.2 166.5 L518.0 163.7 L517.9 159.1 L522.4 160.1 L525.4 164.2Z"/><path d="M511.3 574.8 L511.3 571.8 L513.5 569.7 L515.0 573.5 L514.8 575.9 L513.1 577.6Z"/><path d="M432.4 633.6 L429.9 635.8 L426.5 635.7 L426.1 631.4 L429.2 629.6 L432.7 629.4Z"/><path d="M66.5 355.9 L62.0 356.1 L63.5 351.2 L66.0 349.5 L68.3 351.0 L70.1 354.9Z"/><path d="M383.6 25.4 L387.0 22.5 L391.6 20.7 L393.1 21.4 L393.5 23.0 L387.8 25.3Z"/><path d="M641.7 141.8 L637.8 141.3 L634.8 138.3 L638.0 134.6 L641.6 135.9 L644.9 138.4Z"/><path d="M116.8 119.6 L114.0 122.1 L110.4 121.2 L109.6 118.6 L110.3 114.7 L114.0 117.2Z"/><path d="M176.4 425.7 L174.7 422.1 L174.9 419.7 L177.7 417.8 L180.6 420.2 L180.3 423.7Z"/><path d="M245.8 307.3 L245.6 303.8 L249.7 301.1 L252.4 302.9 L255.2 306.8 L248.9 310.7Z"/><path d="M164.2 683.6 L161.4 681.7 L166.5 675.7 L170.5 675.8 L171.4 679.6 L166.7 684.6Z"/><path d="M460.7 162.7 L458.4 163.5 L456.3 161.1 L455.5 158.3 L458.4 156.7 L462.3 160.2Z"/><path d="M477.6 25.7 L480.9 21.5 L485.8 18.2 L489.5 19.4 L489.2 23.2 L482.6 26.1Z"/><path d="M323.9 644.6 L319.9 645.5 L317.8 640.9 L316.5 636.5 L320.7 638.8 L323.2 640.8Z"/><path d="M556.7 56.3 L552.8 57.1 L548.9 53.0 L550.0 50.1 L552.8 48.5 L555.6 52.5Z"/><path d="M217.9 380.9 L214.6 381.5 L212.4 379.6 L213.2 376.5 L216.4 374.9 L217.9 377.7Z"/><path d="M648.4 722.8 L648.9 719.3 L653.3 717.7 L656.9 718.1 L655.6 721.4 L651.9 722.9Z"/><path d="M158.5 498.5 L154.1 496.4 L148.6 493.5 L149.7 491.6 L152.3 492.3 L155.5 494.7Z"/><path d="M150.9 182.8 L153.2 180.7 L156.5 180.2 L158.4 181.1 L158.7 183.6 L153.1 184.7Z"/><path d="M282.6 498.2 L282.1 495.3 L282.3 492.7 L285.6 494.0 L288.4 496.9 L286.6 499.4Z"/><path d="M96.3 409.1 L95.5 406.8 L99.4 405.4 L102.2 407.0 L99.7 409.2 L97.6 410.1Z"/><path d="M426.5 350.2 L425.5 353.1 L421.1 351.4 L420.4 348.0 L423.1 345.8 L427.1 347.7Z"/><path d="M424.7 129.3 L422.5 129.8 L419.6 128.6 L422.1 126.0 L424.7 125.2 L426.5 127.1Z"/><path d="M597.5 648.7 L595.0 650.3 L588.9 650.7 L587.2 648.1 L590.1 646.4 L597.0 645.8Z"/><path d="M251.9 742.0 L247.7 739.8 L249.6 737.3 L252.0 735.4 L255.7 736.8 L256.7 740.1Z"/><path d="M711.7 110.3 L707.9 110.1 L707.3 107.2 L708.2 103.6 L711.5 105.2 L714.5 107.0Z"/><path d="M210.6 79.4 L208.5 80.3 L203.1 78.3 L200.8 73.6 L206.8 75.5 L211.3 77.0Z"/><path d="M322.3 550.7 L320.9 549.0 L320.4 547.2 L322.2 546.3 L324.5 546.8 L323.7 549.0Z"/><path d="M540.7 730.0 L543.3 728.3 L549.2 726.6 L552.2 728.0 L548.3 729.8 L542.7 731.5Z"/><path d="M409.6 607.8 L406.0 610.6 L401.1 609.5 L400.0 605.3 L403.4 603.4 L407.2 604.3Z"/><path d="M152.3 59.5 L150.6 57.5 L148.9 55.5 L150.7 55.0 L151.9 55.2 L152.6 57.0Z"/><path d="M452.3 118.1 L453.3 116.1 L456.0 114.4 L457.1 116.6 L456.8 118.5 L454.2 119.5Z"/><path d="M666.9 797.4 L668.5 793.4 L673.2 789.4 L676.0 788.5 L674.6 791.5 L670.7 796.4Z"/><path d="M47.2 765.4 L46.7 761.3 L47.8 758.0 L52.0 756.9 L53.7 761.0 L50.9 763.6Z"/><path d="M262.1 379.2 L259.8 375.5 L259.5 372.2 L261.0 370.0 L264.0 370.7 L264.8 375.9Z"/><path d="M484.0 12.3 L481.3 14.0 L477.4 12.2 L476.1 8.1 L480.3 7.5 L484.1 9.0Z"/><path d="M151.1 367.3 L146.1 367.2 L142.6 363.5 L139.0 359.1 L144.4 360.8 L148.2 362.7Z"/><path d="M150.8 132.3 L153.5 130.6 L158.1 130.7 L159.4 131.9 L158.6 133.4 L154.7 133.1Z"/><path d="M567.2 691.2 L564.1 690.7 L560.7 689.0 L559.0 685.0 L563.2 684.7 L567.1 688.2Z"/><path d="M204.5 733.8 L203.7 729.8 L204.5 724.9 L208.6 724.5 L211.5 727.7 L209.2 734.1Z"/><path d="M557.1 619.4 L553.8 617.6 L553.1 611.8 L554.9 609.7 L557.8 610.1 L559.6 616.6Z"/><path d="M575.0 59.1 L574.3 55.5 L577.8 52.9 L581.1 53.9 L581.0 57.2 L578.4 59.0Z"/><path d="M7.2 287.6 L5.1 285.5 L6.4 280.4 L10.7 279.3 L12.5 283.3 L9.9 287.2Z"/><path d="M186.8 760.4 L184.0 759.0 L183.2 754.0 L184.3 750.2 L187.7 751.8 L187.7 757.2Z"/><path d="M422.8 318.7 L422.7 313.0 L425.4 307.5 L430.6 303.7 L429.1 310.7 L427.6 316.1Z"/><path d="M567.9 613.2 L563.9 613.1 L557.5 609.0 L557.2 607.3 L558.7 606.5 L564.6 609.8Z"/><path d="M490.3 593.5 L489.2 590.8 L491.3 587.6 L494.3 588.5 L494.9 591.3 L493.4 594.7Z"/><path d="M43.7 159.0 L40.8 158.5 L37.4 156.5 L38.3 154.8 L39.7 153.1 L42.5 156.3Z"/><path d="M204.3 725.2 L202.3 727.2 L199.1 725.8 L196.6 723.8 L199.1 721.7 L203.8 722.0Z"/><path d="M478.8 609.0 L475.8 609.5 L473.5 608.2 L476.7 604.7 L480.9 604.7 L481.0 606.9Z"/><path d="M125.9 378.9 L125.9 376.4 L127.7 375.4 L130.7 375.4 L131.2 379.0 L128.4 380.6Z"/><path d="M489.6 53.4 L487.3 49.4 L485.3 42.9 L488.4 41.3 L491.2 43.1 L492.3 50.5Z"/><path d="M418.4 480.2 L419.2 477.7 L421.8 475.5 L423.5 476.9 L424.8 479.2 L421.0 480.7Z"/><path d="M224.4 574.5 L224.9 572.9 L227.5 571.7 L229.6 571.9 L228.4 573.6 L226.3 574.5Z"/><path d="M194.6 35.9 L193.3 33.4 L194.6 31.6 L197.7 32.2 L199.2 35.2 L197.8 37.7Z"/><path d="M309.7 722.2 L308.6 720.3 L312.0 714.1 L313.6 715.0 L315.2 715.9 L311.9 722.1Z"/><path d="M56.6 726.2 L54.9 723.5 L58.7 720.9 L60.7 722.9 L60.7 724.9 L58.9 728.8Z"/><path d="M416.7 753.5 L416.3 750.6 L418.0 747.3 L420.6 746.2 L422.9 748.4 L419.6 752.9Z"/><path d="M488.5 95.0 L484.1 96.2 L480.5 92.9 L477.3 89.2 L481.8 88.5 L486.9 90.7Z"/><path d="M160.0 46.6 L159.8 43.0 L162.6 38.2 L164.6 38.8 L165.8 40.4 L163.2 44.4Z"/><path d="M351.6 537.1 L350.6 534.4 L354.2 531.4 L356.6 531.9 L356.5 534.2 L354.3 536.3Z"/><path d="M465.9 339.2 L463.2 338.4 L463.8 333.7 L465.7 330.2 L468.4 332.8 L468.6 338.4Z"/><path d="M586.0 191.4 L584.1 187.2 L587.1 187.0 L589.8 189.6 L590.4 193.9 L587.9 195.6Z"/><path d="M289.2 221.6 L285.2 221.9 L285.0 216.4 L285.2 212.0 L289.1 213.4 L289.5 218.0Z"/><path d="M471.3 512.3 L469.8 509.1 L472.7 503.8 L475.9 499.5 L476.0 504.5 L474.1 509.6Z"/><path d="M195.5 785.0 L194.4 780.9 L201.1 779.0 L204.2 782.1 L204.4 786.9 L197.6 787.7Z"/><path d="M31.9 51.9 L28.8 50.8 L29.7 47.5 L31.4 45.6 L33.7 46.9 L34.2 50.1Z"/><path d="M495.5 83.9 L495.3 81.8 L499.7 79.7 L502.5 79.7 L500.9 82.1 L497.5 84.4Z"/><path d="M64.1 541.4 L66.1 537.6 L70.9 538.3 L73.0 540.7 L71.2 543.3 L67.0 544.3Z"/><path d="M297.1 386.1 L296.9 383.1 L296.9 380.2 L300.1 379.3 L301.2 382.4 L299.4 384.3Z"/><path d="M596.7 672.0 L595.4 672.3 L593.2 670.8 L594.4 668.8 L596.6 668.7 L598.3 670.8Z"/><path d="M610.9 171.7 L612.3 169.1 L616.5 167.8 L619.3 169.3 L617.6 172.0 L613.5 173.3Z"/><path d="M526.0 793.8 L522.6 794.4 L519.2 792.6 L521.1 789.9 L523.2 789.0 L524.8 790.7Z"/><path d="M592.9 740.1 L593.6 736.2 L596.9 734.0 L600.6 733.4 L600.5 737.2 L596.9 739.8Z"/><path d="M79.0 701.6 L77.3 701.9 L76.0 700.3 L76.1 698.5 L77.9 698.0 L80.2 699.9Z"/><path d="M456.7 388.8 L452.7 389.5 L449.4 389.0 L445.1 386.8 L449.1 385.3 L455.2 385.7Z"/><path d="M170.9 531.1 L168.9 531.1 L168.2 528.8 L170.1 526.5 L173.2 527.6 L172.8 530.5Z"/><path d="M580.6 557.3 L578.7 557.4 L578.4 554.3 L579.4 552.9 L580.7 553.9 L581.2 555.9Z"/><path d="M284.9 582.9 L283.0 581.7 L286.0 579.2 L288.8 576.8 L287.9 580.3 L286.5 582.3Z"/><path d="M251.0 323.5 L248.4 319.8 L253.5 316.1 L256.6 316.6 L259.9 319.6 L255.1 325.2Z"/><path d="M194.8 291.2 L196.9 288.5 L199.4 286.3 L202.5 287.5 L201.2 290.5 L197.8 293.1Z"/><path d="M319.2 312.9 L315.3 313.5 L314.7 310.6 L315.3 308.8 L317.6 306.7 L320.2 308.9Z"/><path d="M146.2 608.4 L144.1 610.4 L138.8 608.1 L133.8 605.3 L138.9 604.5 L143.5 606.4Z"/><path d="M19.7 416.8 L16.2 415.5 L13.9 411.5 L16.5 409.6 L19.8 408.6 L20.8 413.3Z"/><path d="M436.3 632.8 L435.7 630.8 L436.7 628.9 L438.7 627.8 L440.0 629.9 L438.5 632.6Z"/><path d="M589.2 721.2 L587.6 719.6 L586.0 716.8 L590.2 716.5 L593.6 718.6 L591.9 720.8Z"/><path d="M112.9 603.1 L111.8 598.8 L114.0 593.4 L116.5 592.7 L117.6 595.0 L116.4 600.5Z"/><path d="M178.2 616.9 L174.0 615.8 L171.3 611.3 L174.3 607.3 L178.2 609.6 L178.7 612.7Z"/><path d="M319.5 274.6 L315.4 275.0 L310.0 269.9 L309.9 264.1 L315.6 267.5 L321.1 270.6Z"/><path d="M389.3 433.7 L390.8 428.7 L395.3 426.5 L400.5 426.1 L399.8 431.3 L394.4 434.5Z"/><path d="M677.9 646.1 L680.3 642.9 L684.7 640.3 L689.7 642.8 L685.6 646.8 L680.6 649.8Z"/><path d="M414.8 569.0 L415.6 566.2 L421.6 564.7 L424.4 566.9 L421.6 569.4 L417.3 570.4Z"/><path d="M331.7 121.6 L331.9 116.1 L335.8 113.8 L341.1 112.3 L342.0 118.0 L337.0 120.6Z"/><path d="M299.5 137.9 L296.9 135.2 L298.4 132.1 L301.1 131.3 L303.3 133.2 L301.9 135.6Z"/><path d="M235.0 776.8 L233.3 778.6 L231.7 776.8 L231.7 774.5 L233.9 773.6 L235.8 774.7Z"/><path d="M95.0 520.0 L94.2 522.3 L88.9 518.7 L88.5 516.7 L90.0 515.3 L95.8 518.0Z"/><path d="M54.3 369.4 L50.2 370.8 L46.1 369.2 L47.4 365.7 L49.7 364.3 L55.1 364.0Z"/><path d="M26.5 88.1 L26.9 85.8 L29.5 85.1 L32.3 85.5 L31.0 88.0 L28.4 90.0Z"/><path d="M184.0 577.7 L184.2 574.0 L188.7 571.4 L190.5 571.8 L190.6 573.7 L188.0 576.0Z"/><path d="M149.7 225.3 L148.5 228.5 L145.2 228.5 L145.4 224.2 L147.3 220.1 L150.9 221.1Z"/><path d="M255.4 439.8 L251.5 441.4 L247.1 439.9 L241.8 437.0 L247.6 436.1 L252.8 436.6Z"/><path d="M204.8 717.5 L204.6 712.0 L207.8 706.6 L210.9 704.6 L210.8 708.6 L209.3 715.0Z"/><path d="M434.6 765.7 L436.5 764.5 L439.5 764.1 L441.6 765.5 L440.7 768.0 L435.2 768.2Z"/><path d="M36.6 759.8 L35.4 757.2 L41.3 754.1 L45.2 755.0 L44.7 758.9 L38.9 760.2Z"/><path d="M425.6 414.4 L421.7 418.3 L418.5 415.8 L419.6 411.5 L422.3 408.2 L425.9 409.3Z"/><path d="M527.7 190.7 L526.2 192.3 L524.8 191.5 L524.1 189.4 L525.9 188.1 L527.5 188.5Z"/><path d="M302.6 640.0 L297.9 639.7 L293.0 639.1 L293.7 635.7 L296.6 635.1 L302.1 635.5Z"/><path d="M129.4 128.5 L125.9 128.9 L122.4 126.1 L123.9 124.0 L125.8 123.0 L127.6 125.2Z"/><path d="M505.6 795.4 L507.2 792.0 L510.5 791.6 L512.3 793.9 L512.3 797.3 L508.6 797.4Z"/><path d="M120.0 617.6 L117.8 616.0 L118.7 614.8 L121.4 614.1 L124.2 616.7 L122.5 617.9Z"/><path d="M675.2 658.4 L675.2 656.4 L677.2 656.0 L678.7 656.9 L679.3 659.4 L676.7 659.7Z"/><path d="M576.8 79.8 L573.7 80.5 L569.2 79.2 L570.7 76.3 L572.5 73.3 L575.2 77.0Z"/><path d="M656.3 168.4 L658.8 165.3 L662.3 163.5 L664.5 165.5 L663.5 168.2 L660.1 169.2Z"/><path d="M128.0 669.9 L124.3 669.0 L122.5 664.7 L125.1 663.5 L127.1 663.6 L129.5 666.5Z"/><path d="M65.6 245.4 L62.0 247.5 L57.2 248.3 L58.3 244.1 L59.0 240.2 L63.1 242.2Z"/><path d="M289.1 550.3 L287.9 553.0 L285.6 551.3 L286.1 548.9 L287.6 547.2 L290.6 547.6Z"/><path d="M374.1 777.4 L369.6 776.5 L366.3 773.9 L364.0 769.1 L369.0 768.7 L372.5 773.1Z"/><path d="M13.3 302.6 L12.1 304.4 L6.9 302.9 L5.8 300.7 L8.3 299.8 L13.1 300.4Z"/><path d="M449.7 368.5 L447.3 364.8 L449.4 364.1 L452.1 365.4 L455.7 368.3 L453.6 369.4Z"/><path d="M637.6 167.7 L635.7 166.0 L639.5 162.7 L643.5 160.7 L643.6 164.7 L639.6 168.5Z"/><path d="M305.2 432.0 L302.3 434.0 L298.5 434.5 L298.1 431.7 L299.6 430.1 L303.0 429.2Z"/><path d="M314.7 535.5 L312.8 535.3 L311.3 532.6 L313.0 531.6 L314.8 531.1 L316.0 534.0Z"/><path d="M112.5 79.0 L108.8 78.3 L108.9 72.2 L113.0 69.0 L115.5 73.5 L116.2 78.6Z"/><path d="M146.4 328.3 L142.9 324.2 L139.1 319.7 L141.0 314.5 L145.5 318.1 L147.6 323.5Z"/></g>
<defs><path id="mr" d="M120.0 3.0 C122.1 4.8 130.3 9.0 132.5 13.6 C134.7 18.3 131.3 25.9 133.0 30.9 C134.6 35.9 140.8 41.6 142.4 43.7 M120.0 3.0 C117.5 2.3 109.4 1.2 104.7 -1.0 C100.0 -3.3 96.5 -7.8 91.8 -10.4 C87.2 -12.9 79.3 -15.3 76.9 -16.3 M120.0 3.0 C117.3 3.1 109.2 2.9 104.1 3.8 C98.9 4.8 94.2 7.4 89.0 9.0 C83.9 10.5 75.9 12.3 73.3 13.0 M224.0 33.0 C225.4 33.8 229.7 35.9 232.2 37.7 C234.7 39.5 236.9 41.4 238.9 43.8 C240.9 46.2 243.2 50.6 244.1 52.0 M224.0 33.0 C222.0 34.7 215.6 39.3 212.0 42.9 C208.4 46.5 204.9 50.1 202.4 54.6 C199.9 59.1 198.0 67.4 197.1 70.0 M224.0 33.0 C221.9 32.1 215.0 30.2 211.1 27.7 C207.2 25.2 204.6 20.7 200.7 18.2 C196.8 15.6 189.8 13.2 187.7 12.2 M224.0 33.0 C225.2 30.2 231.5 22.0 231.0 16.3 C230.5 10.6 221.8 4.6 221.0 -1.2 C220.3 -7.0 225.6 -15.6 226.5 -18.4 M322.0 42.0 C323.0 43.0 326.4 46.0 328.2 48.3 C330.1 50.6 331.0 53.8 333.1 56.0 C335.3 58.1 339.7 60.2 341.0 61.0 M322.0 42.0 C319.9 41.0 313.6 37.5 309.2 35.9 C304.8 34.3 300.2 33.5 295.6 32.2 C291.0 31.0 283.9 29.0 281.6 28.3 M322.0 42.0 C324.0 41.5 330.7 40.9 334.3 38.8 C337.8 36.8 339.9 31.9 343.4 29.5 C346.9 27.2 353.3 25.6 355.2 24.8 M322.0 42.0 C320.4 44.1 316.2 51.0 312.6 54.7 C309.0 58.3 304.6 61.0 300.3 64.0 C296.0 67.0 289.1 71.3 286.9 72.7 M322.0 42.0 C320.6 40.4 316.0 36.0 313.7 32.6 C311.3 29.1 309.9 25.2 307.9 21.5 C305.8 17.8 302.4 12.3 301.3 10.4 M341.0 61.0 C342.9 61.7 349.4 62.4 352.2 65.1 C354.9 67.7 354.7 74.3 357.4 77.0 C360.2 79.8 366.8 80.8 368.7 81.6 M341.0 61.0 C342.0 59.1 345.2 53.4 347.1 49.6 C349.0 45.7 350.9 42.0 352.3 37.8 C353.7 33.7 354.7 27.0 355.2 24.8 M466.0 42.0 C468.3 42.6 475.1 44.4 479.7 45.4 C484.2 46.5 488.7 48.1 493.4 48.3 C498.1 48.6 505.6 47.3 508.1 47.1 M466.0 42.0 C464.3 42.1 459.2 42.3 455.8 42.7 C452.4 43.1 449.1 44.4 445.7 44.5 C442.2 44.5 436.9 43.1 435.1 42.8 M466.0 42.0 C465.6 40.4 464.0 35.5 463.3 32.3 C462.7 29.1 461.8 25.9 462.0 22.5 C462.2 19.2 464.0 14.0 464.5 12.3 M576.0 88.0 C575.0 90.3 570.7 97.2 570.1 101.9 C569.6 106.7 572.0 111.4 572.7 116.3 C573.3 121.1 573.8 128.5 574.0 131.0 M576.0 88.0 C574.1 87.0 568.6 83.9 564.7 82.3 C560.8 80.6 556.9 79.4 552.8 78.0 C548.8 76.7 542.4 75.0 540.3 74.4 M576.0 88.0 C578.9 88.0 587.6 87.8 593.4 88.3 C599.2 88.7 604.8 90.1 610.7 90.7 C616.5 91.3 625.6 91.5 628.5 91.7 M576.0 88.0 C576.2 85.7 574.9 78.2 576.9 74.5 C578.9 70.7 585.5 69.1 588.0 65.4 C590.4 61.8 590.9 54.8 591.5 52.7 M150.0 91.0 C150.6 89.6 152.5 85.7 153.3 82.8 C154.1 80.0 153.6 76.5 154.9 73.9 C156.3 71.2 160.3 68.1 161.4 66.9 M150.0 91.0 C149.4 92.5 146.5 97.0 146.3 100.1 C146.1 103.2 148.5 106.3 148.9 109.5 C149.3 112.6 148.6 117.4 148.5 119.0 M150.0 91.0 C148.7 90.1 144.3 88.0 142.4 85.8 C140.5 83.6 139.9 80.6 138.7 77.9 C137.5 75.2 135.6 71.0 135.0 69.6 M240.0 97.0 C239.7 99.1 239.5 105.6 238.4 109.7 C237.3 113.7 234.8 117.4 233.4 121.4 C232.0 125.5 230.6 131.9 230.0 134.0 M240.0 97.0 C239.3 94.4 235.2 86.6 235.5 81.6 C235.8 76.7 240.2 72.1 241.6 67.2 C243.0 62.3 243.7 54.6 244.1 52.0 M240.0 97.0 C241.3 97.8 245.0 100.5 247.7 102.0 C250.3 103.5 253.0 104.9 255.8 106.0 C258.7 107.2 263.3 108.6 264.8 109.1 M361.0 109.0 C361.8 110.9 365.1 116.4 365.9 120.5 C366.7 124.6 364.9 129.4 365.8 133.5 C366.7 137.6 370.5 143.2 371.4 145.2 M361.0 109.0 C361.0 107.4 360.7 102.4 361.0 99.2 C361.3 96.1 361.5 92.9 362.8 90.0 C364.1 87.0 367.7 83.0 368.7 81.6 M361.0 109.0 C358.5 110.6 351.3 116.6 346.0 118.4 C340.7 120.2 335.1 119.7 329.4 119.8 C323.7 119.9 314.7 119.2 311.8 119.0 M463.0 106.0 C464.5 107.8 468.3 114.4 472.2 116.8 C476.1 119.1 482.5 118.0 486.6 120.2 C490.7 122.4 495.3 128.4 497.0 130.0 M463.0 106.0 C461.2 104.4 456.3 98.7 452.3 96.6 C448.3 94.4 443.6 94.0 439.1 92.8 C434.6 91.6 427.6 90.0 425.3 89.5 M463.0 106.0 C460.7 106.4 453.5 107.4 448.9 108.4 C444.4 109.5 439.6 109.8 435.5 112.2 C431.4 114.5 426.2 120.8 424.3 122.5 M463.0 106.0 C462.9 108.2 462.4 114.6 462.4 118.9 C462.4 123.3 462.5 127.5 463.1 131.8 C463.7 136.1 465.4 142.7 465.9 144.9 M497.0 130.0 C496.2 132.2 492.9 138.7 492.1 143.2 C491.2 147.6 492.0 152.3 492.0 156.9 C492.1 161.6 492.1 168.7 492.1 171.1 M497.0 130.0 C495.3 130.9 490.5 134.1 487.0 135.5 C483.5 136.9 479.3 136.8 475.7 138.4 C472.2 139.9 467.5 143.8 465.9 144.9 M574.0 131.0 C575.1 132.2 579.4 135.2 580.3 138.1 C581.2 140.9 578.6 145.3 579.3 148.3 C580.1 151.3 584.0 154.7 584.9 156.0 M574.0 131.0 C576.1 130.2 582.2 125.8 586.4 126.5 C590.6 127.1 594.8 134.3 599.0 134.9 C603.3 135.6 609.7 131.1 611.8 130.3 M736.0 112.0 C734.1 113.9 728.4 119.8 724.3 123.5 C720.3 127.2 714.8 129.7 711.7 134.3 C708.7 138.9 707.0 148.2 706.0 151.0 M736.0 112.0 C739.9 112.0 751.7 113.2 759.3 112.0 C767.0 110.9 774.2 106.5 781.9 105.2 C789.7 104.0 801.9 104.6 805.9 104.4 M736.0 112.0 C734.7 111.1 730.8 108.2 728.2 106.4 C725.6 104.6 722.8 103.0 720.2 101.1 C717.5 99.2 713.7 96.0 712.4 95.0 M706.0 151.0 C703.6 151.3 696.2 154.4 691.9 153.1 C687.5 151.8 684.2 144.5 679.7 143.0 C675.3 141.6 667.7 144.1 665.3 144.3 M706.0 151.0 C704.8 153.0 701.5 159.6 698.6 163.1 C695.6 166.7 692.1 169.5 688.3 172.3 C684.5 175.1 678.0 178.7 676.0 179.9 M706.0 151.0 C705.9 147.9 704.4 138.3 705.6 132.2 C706.8 126.1 711.9 120.6 713.0 114.4 C714.1 108.1 712.5 98.2 712.4 95.0 M230.0 134.0 C231.8 132.5 237.3 128.0 240.9 125.0 C244.5 121.9 247.7 118.5 251.7 115.8 C255.7 113.2 262.6 110.2 264.8 109.1 M230.0 134.0 C228.3 133.0 223.3 129.6 219.7 128.2 C216.0 126.8 211.6 127.0 207.9 125.4 C204.2 123.9 199.3 119.8 197.6 118.7 M230.0 134.0 C230.0 136.4 231.8 143.8 230.2 148.1 C228.7 152.5 222.3 155.6 220.6 160.0 C219.0 164.4 220.6 172.1 220.6 174.5 M290.0 155.0 C292.2 156.7 299.0 161.2 302.9 165.0 C306.9 168.7 309.4 174.1 313.6 177.7 C317.8 181.3 325.7 185.1 328.1 186.6 M290.0 155.0 C288.0 156.9 283.4 165.4 278.3 166.6 C273.2 167.9 264.6 161.2 259.4 162.5 C254.2 163.8 249.3 172.4 247.3 174.4 M290.0 155.0 C290.7 152.7 291.7 145.2 294.2 141.3 C296.7 137.4 301.9 135.3 304.8 131.5 C307.8 127.8 310.6 121.1 311.8 119.0 M448.0 172.0 C445.7 173.7 439.3 179.7 434.4 182.2 C429.5 184.6 423.9 185.2 418.5 186.6 C413.1 188.1 404.8 190.3 402.0 191.0 M448.0 172.0 C450.4 172.5 457.8 175.0 462.6 174.9 C467.5 174.8 472.2 172.2 477.1 171.6 C482.1 171.0 489.6 171.2 492.1 171.1 M448.0 172.0 C449.5 170.9 455.8 168.6 457.3 165.3 C458.8 162.0 455.6 155.7 457.1 152.3 C458.5 148.9 464.4 146.1 465.9 144.9 M539.0 163.0 C537.0 164.1 530.4 166.8 526.7 169.4 C523.0 172.0 519.7 174.8 516.9 178.4 C514.1 182.0 511.1 188.9 510.0 191.0 M539.0 163.0 C539.8 165.4 543.6 172.4 543.7 177.5 C543.8 182.6 538.8 188.5 539.4 193.6 C539.9 198.7 545.7 205.6 547.0 208.0 M539.0 163.0 C541.5 162.2 548.6 158.4 553.7 158.0 C558.9 157.6 564.5 161.2 569.7 160.8 C574.9 160.5 582.4 156.8 584.9 156.0 M193.0 166.0 C191.8 167.0 188.4 170.4 185.8 172.1 C183.1 173.8 179.9 174.4 177.1 175.9 C174.3 177.5 170.4 180.4 169.1 181.3 M193.0 166.0 C193.5 163.4 194.9 155.7 196.1 150.5 C197.3 145.4 200.1 140.5 200.4 135.2 C200.6 129.9 198.1 121.4 197.6 118.7 M193.0 166.0 C194.6 166.3 199.3 167.1 202.5 167.5 C205.7 168.0 209.1 167.4 212.1 168.6 C215.1 169.8 219.2 173.5 220.6 174.5 M193.0 166.0 C191.9 164.8 188.0 161.6 186.6 158.8 C185.2 155.9 186.0 151.8 184.5 148.9 C183.0 146.0 178.9 142.7 177.8 141.5 M402.0 191.0 C401.7 193.8 401.3 202.3 400.1 207.7 C398.9 213.1 396.3 218.1 394.7 223.5 C393.0 228.9 390.8 237.2 390.0 240.0 M402.0 191.0 C400.6 188.3 397.3 179.6 393.7 174.7 C390.2 169.7 384.4 166.4 380.7 161.5 C377.0 156.6 373.0 147.9 371.4 145.2 M510.0 191.0 C511.8 192.5 516.4 198.6 520.5 200.3 C524.7 202.0 530.4 200.0 534.8 201.3 C539.3 202.6 545.0 206.9 547.0 208.0 M510.0 191.0 C509.0 189.9 505.7 187.0 504.0 184.5 C502.4 182.0 502.1 178.4 500.1 176.1 C498.2 173.9 493.5 171.9 492.1 171.1 M510.0 191.0 C511.0 192.9 515.2 198.3 516.0 202.2 C516.8 206.2 514.8 210.5 514.8 214.6 C514.7 218.7 515.4 225.0 515.6 227.0 M629.0 189.0 C631.3 186.8 638.7 180.5 643.0 175.9 C647.3 171.2 651.1 166.3 654.8 161.0 C658.6 155.8 663.6 147.1 665.3 144.3 M629.0 189.0 C631.6 188.4 639.2 186.4 644.4 185.3 C649.5 184.2 654.6 183.2 659.9 182.3 C665.1 181.4 673.3 180.3 676.0 179.9 M629.0 189.0 C627.2 186.4 622.2 177.8 618.0 173.4 C613.7 169.0 608.8 165.5 603.3 162.6 C597.8 159.7 588.0 157.1 584.9 156.0 M140.0 187.0 C141.5 186.4 146.1 184.0 149.2 183.3 C152.4 182.6 155.8 183.1 159.1 182.8 C162.4 182.4 167.4 181.5 169.1 181.3 M140.0 187.0 C138.4 184.8 132.5 178.3 130.4 173.5 C128.4 168.7 128.1 163.6 127.8 158.3 C127.5 153.0 128.4 144.4 128.5 141.7 M140.0 187.0 C138.9 189.2 135.9 195.8 133.5 200.0 C131.0 204.1 128.2 208.0 125.3 211.9 C122.4 215.8 117.4 221.5 115.8 223.4 M547.0 208.0 C546.0 210.0 541.8 215.5 541.0 219.9 C540.3 224.3 543.6 229.9 542.6 234.2 C541.6 238.6 536.3 244.0 535.0 246.0 M547.0 208.0 C545.3 209.1 540.6 213.0 536.9 214.7 C533.1 216.3 528.1 215.7 524.6 217.8 C521.0 219.8 517.1 225.5 515.6 227.0 M264.0 208.0 C264.9 210.1 268.5 216.4 269.5 220.8 C270.5 225.1 270.1 229.5 270.0 234.1 C269.9 238.6 268.8 245.7 268.6 248.0 M264.0 208.0 C262.5 208.2 258.2 209.3 255.3 209.3 C252.4 209.4 249.4 208.2 246.5 208.1 C243.5 208.1 239.0 208.9 237.5 209.0 M264.0 208.0 C263.7 205.8 264.6 198.5 262.3 195.0 C260.1 191.5 252.9 190.6 250.4 187.1 C247.9 183.7 247.8 176.5 247.3 174.4 M334.0 218.0 C333.2 220.4 331.2 227.7 329.2 232.4 C327.3 237.0 324.2 241.2 322.3 246.0 C320.4 250.7 318.7 258.5 318.0 261.0 M334.0 218.0 C334.1 216.2 334.8 210.7 334.7 207.1 C334.6 203.6 334.6 200.0 333.5 196.6 C332.4 193.2 329.0 188.3 328.1 186.6 M334.0 218.0 C331.4 218.8 322.3 219.2 318.4 222.7 C314.5 226.2 314.6 235.2 310.7 238.9 C306.8 242.5 297.8 243.6 295.2 244.5 M390.0 240.0 C391.1 241.0 394.5 244.2 396.8 246.2 C399.2 248.1 402.5 249.3 404.4 251.7 C406.2 254.2 407.4 259.5 408.0 261.0 M390.0 240.0 C389.8 242.0 390.2 248.8 388.6 252.3 C387.0 255.8 382.8 258.0 380.4 261.2 C378.0 264.4 375.2 269.7 374.1 271.4 M390.0 240.0 C392.5 240.9 400.2 243.3 405.0 245.7 C409.8 248.0 413.9 251.8 418.8 254.1 C423.8 256.4 431.9 258.5 434.6 259.4 M535.0 246.0 C536.2 247.7 538.7 254.2 542.3 255.9 C545.8 257.7 552.5 254.6 556.1 256.3 C559.8 258.0 562.7 264.4 564.0 266.0 M535.0 246.0 C534.3 244.6 532.9 239.6 530.9 237.4 C528.9 235.1 525.8 234.2 523.2 232.4 C520.7 230.7 516.8 227.9 515.6 227.0 M535.0 246.0 C533.5 247.2 529.7 252.1 526.2 253.3 C522.8 254.5 517.9 252.3 514.3 253.3 C510.7 254.3 506.2 258.3 504.6 259.3 M86.0 229.0 C88.8 229.5 97.5 230.5 102.7 232.2 C108.0 233.8 113.0 235.8 117.5 239.1 C122.1 242.3 127.9 249.6 130.0 251.7 M86.0 229.0 C84.2 228.8 79.0 227.4 75.5 227.9 C72.0 228.5 68.6 232.2 65.1 232.5 C61.5 232.8 56.0 230.2 54.2 229.8 M86.0 229.0 C87.7 228.9 92.8 229.1 96.1 228.4 C99.3 227.7 102.3 225.6 105.6 224.7 C108.9 223.9 114.1 223.6 115.8 223.4 M205.0 237.0 C207.0 235.7 213.6 232.5 216.9 229.2 C220.3 225.8 221.7 220.3 225.1 217.0 C228.5 213.6 235.4 210.3 237.5 209.0 M205.0 237.0 C204.6 238.4 202.7 242.6 202.6 245.6 C202.6 248.6 205.0 252.0 204.6 255.0 C204.2 258.0 200.9 262.1 200.2 263.5 M205.0 237.0 C202.4 236.3 194.7 233.5 189.6 233.0 C184.5 232.5 179.5 233.3 174.4 234.2 C169.2 235.0 161.3 237.4 158.7 238.1 M564.0 266.0 C560.7 266.0 550.6 267.0 544.2 265.9 C537.7 264.8 531.6 260.4 525.0 259.3 C518.4 258.2 508.0 259.3 504.6 259.3 M564.0 266.0 C562.8 268.0 560.3 275.1 556.8 277.8 C553.4 280.6 547.1 279.9 543.3 282.3 C539.4 284.7 535.5 290.6 533.9 292.2 M318.0 261.0 C320.0 262.0 327.0 263.8 329.9 267.1 C332.8 270.5 332.3 278.1 335.5 281.2 C338.6 284.4 346.7 285.2 349.0 286.0 M318.0 261.0 C316.5 260.5 311.7 259.2 308.8 257.8 C306.0 256.5 303.2 255.1 300.9 252.9 C298.6 250.7 296.1 245.9 295.2 244.5 M408.0 261.0 C406.0 261.0 399.6 260.1 395.8 261.0 C392.0 261.9 388.8 264.5 385.2 266.3 C381.5 268.0 376.0 270.6 374.1 271.4 M408.0 261.0 C409.5 261.0 413.9 261.9 416.8 261.3 C419.7 260.6 422.4 257.4 425.4 257.1 C428.3 256.8 433.0 259.0 434.6 259.4 M35.0 264.0 C37.7 264.9 46.0 266.7 51.1 269.2 C56.2 271.7 60.3 276.6 65.6 278.8 C70.9 280.9 80.1 281.5 83.0 282.0 M35.0 264.0 C32.4 264.8 24.7 269.3 19.7 268.5 C14.7 267.8 10.0 260.4 4.9 259.3 C-0.2 258.3 -8.2 261.8 -10.8 262.2 M35.0 264.0 C36.2 262.2 40.6 257.2 42.1 253.2 C43.7 249.1 42.3 243.4 44.3 239.5 C46.3 235.6 52.5 231.4 54.2 229.8 M83.0 282.0 C83.4 284.5 84.3 292.2 85.4 297.2 C86.4 302.3 88.3 307.1 89.3 312.2 C90.2 317.3 90.7 325.4 91.0 328.0 M83.0 282.0 C84.7 282.9 89.4 286.4 93.0 287.6 C96.5 288.7 100.5 288.0 104.2 288.6 C107.9 289.3 113.5 290.8 115.4 291.2 M145.0 280.0 C144.6 278.2 143.8 272.6 142.5 269.3 C141.2 266.1 139.1 263.2 137.0 260.3 C134.9 257.3 131.1 253.1 130.0 251.7 M145.0 280.0 C145.4 281.4 146.4 285.6 147.5 288.3 C148.7 290.9 151.2 293.2 152.0 296.0 C152.9 298.8 152.5 303.6 152.7 305.1 M145.0 280.0 C143.1 280.0 137.0 278.5 133.8 279.9 C130.6 281.4 129.1 286.9 126.0 288.8 C122.9 290.7 117.1 290.8 115.4 291.2 M145.0 280.0 C146.8 280.1 152.4 280.4 156.1 280.7 C159.8 281.1 163.4 282.4 167.2 282.1 C170.9 281.8 176.5 279.3 178.4 278.8 M145.0 280.0 C145.2 277.5 145.4 269.9 146.1 265.0 C146.8 260.2 147.0 255.2 149.1 250.7 C151.2 246.2 157.1 240.2 158.7 238.1 M259.0 275.0 C259.0 276.8 258.7 282.2 259.2 285.7 C259.8 289.1 261.0 292.3 262.2 295.6 C263.5 298.9 265.9 303.9 266.7 305.5 M259.0 275.0 C259.1 273.4 259.0 268.3 259.8 265.3 C260.6 262.2 262.5 259.6 264.0 256.7 C265.4 253.8 267.8 249.5 268.6 248.0 M259.0 275.0 C257.2 275.3 251.6 275.9 248.0 276.7 C244.4 277.5 241.0 278.8 237.4 279.8 C233.8 280.9 228.3 282.6 226.5 283.2 M349.0 286.0 C349.2 287.7 349.2 293.0 350.5 296.0 C351.8 299.0 355.3 300.9 357.1 303.8 C358.8 306.6 360.3 311.5 361.0 313.0 M349.0 286.0 C350.2 284.9 353.2 280.5 356.1 279.2 C359.1 277.8 363.6 279.4 366.6 278.1 C369.6 276.8 372.9 272.5 374.1 271.4 M451.0 300.0 C453.5 299.7 460.9 299.0 465.8 298.3 C470.7 297.7 475.5 296.0 480.6 296.0 C485.6 295.9 493.4 297.7 496.0 298.0 M451.0 300.0 C453.0 301.6 459.8 305.7 463.0 309.4 C466.3 313.1 468.3 317.6 470.7 322.0 C473.1 326.4 476.2 333.6 477.3 335.9 M451.0 300.0 C449.4 298.0 444.0 292.4 441.6 288.2 C439.2 284.0 437.7 279.5 436.5 274.7 C435.3 269.9 434.9 261.9 434.6 259.4 M496.0 298.0 C497.2 300.2 500.2 307.3 503.4 311.3 C506.6 315.3 512.6 317.6 515.2 322.1 C517.8 326.5 518.4 335.3 519.0 338.0 M496.0 298.0 C495.5 300.3 495.4 308.1 493.0 312.1 C490.6 316.1 484.3 318.1 481.7 322.1 C479.1 326.1 478.0 333.6 477.3 335.9 M496.0 298.0 C495.9 295.8 494.2 288.7 495.6 284.5 C497.0 280.4 502.7 277.2 504.2 273.0 C505.7 268.8 504.5 261.6 504.6 259.3 M496.0 298.0 C498.0 296.9 503.7 292.3 507.8 291.4 C511.9 290.4 516.4 292.2 520.7 292.3 C525.1 292.4 531.7 292.3 533.9 292.2 M206.0 305.0 C205.7 306.8 205.8 312.7 204.2 315.9 C202.7 319.1 198.8 321.1 196.8 324.2 C194.9 327.2 193.3 332.6 192.6 334.3 M206.0 305.0 C207.1 303.8 210.2 299.9 212.7 297.7 C215.2 295.5 218.6 294.3 220.9 291.9 C223.2 289.5 225.6 284.6 226.5 283.2 M206.0 305.0 C204.4 303.6 199.1 300.1 196.5 296.8 C193.8 293.5 193.2 288.2 190.2 285.2 C187.2 282.1 180.4 279.8 178.4 278.8 M361.0 313.0 C362.9 314.4 369.9 317.9 372.2 321.7 C374.4 325.5 372.9 331.8 374.7 336.0 C376.5 340.2 381.6 345.2 383.0 347.0 M361.0 313.0 C359.1 315.2 354.2 323.3 349.6 326.5 C345.0 329.6 338.7 329.8 333.4 331.8 C328.0 333.8 320.1 337.6 317.5 338.7 M361.0 313.0 C363.0 313.5 369.0 316.9 372.9 316.3 C376.8 315.7 380.4 310.4 384.4 309.6 C388.3 308.8 394.5 311.2 396.6 311.6 M293.0 322.0 C291.2 321.6 285.0 321.9 282.4 319.6 C279.9 317.2 280.3 310.2 277.7 307.8 C275.1 305.5 268.5 305.9 266.7 305.5 M293.0 322.0 C294.7 322.4 300.6 322.5 303.2 324.4 C305.8 326.4 306.3 331.3 308.7 333.7 C311.1 336.1 316.0 337.9 317.5 338.7 M293.0 322.0 C292.3 323.4 290.9 328.1 288.8 330.2 C286.7 332.4 282.8 332.7 280.5 334.7 C278.1 336.6 275.8 340.7 274.9 342.0 M17.0 331.0 C18.1 333.7 19.7 343.1 23.8 347.1 C27.9 351.1 37.5 350.9 41.5 355.0 C45.5 359.1 46.9 369.2 48.0 372.0 M17.0 331.0 C19.1 332.2 25.1 337.0 29.5 338.3 C33.9 339.5 38.8 338.3 43.4 338.5 C48.1 338.7 55.3 339.4 57.7 339.5 M17.0 331.0 C14.9 331.1 8.3 332.0 4.3 331.4 C0.2 330.8 -3.5 329.3 -7.3 327.6 C-11.1 326.0 -16.8 322.5 -18.7 321.5 M91.0 328.0 C93.3 328.0 100.4 326.9 104.9 327.8 C109.5 328.6 113.8 332.6 118.5 333.1 C123.2 333.6 130.6 331.3 133.0 331.0 M91.0 328.0 C92.4 330.2 95.4 338.2 99.6 341.0 C103.8 343.8 111.8 341.9 116.2 344.6 C120.5 347.3 123.9 355.3 125.5 357.4 M91.0 328.0 C89.0 328.1 82.6 327.5 78.9 328.6 C75.2 329.7 72.2 332.8 68.7 334.6 C65.1 336.4 59.5 338.7 57.7 339.5 M91.0 328.0 C91.6 325.5 91.9 316.9 94.6 312.9 C97.3 308.9 104.0 307.6 107.4 304.0 C110.9 300.3 114.1 293.4 115.4 291.2 M133.0 331.0 C132.8 332.5 132.9 337.3 132.0 340.2 C131.1 343.0 128.6 345.4 127.5 348.3 C126.5 351.2 125.8 355.9 125.5 357.4 M133.0 331.0 C134.4 329.8 139.6 327.0 141.3 323.9 C143.1 320.7 141.5 315.1 143.4 312.0 C145.3 308.8 151.1 306.2 152.7 305.1 M238.0 339.0 C239.0 336.6 241.3 329.0 243.8 324.8 C246.3 320.6 249.3 316.8 253.1 313.6 C256.9 310.4 264.4 306.9 266.7 305.5 M238.0 339.0 C236.7 340.1 233.0 343.8 230.3 345.9 C227.5 348.0 224.1 349.4 221.6 351.8 C219.1 354.3 216.2 359.1 215.2 360.6 M238.0 339.0 C240.1 338.8 246.3 337.1 250.3 337.8 C254.4 338.5 258.1 342.4 262.2 343.1 C266.2 343.8 272.7 342.1 274.9 342.0 M519.0 338.0 C516.7 337.2 510.0 333.5 505.4 333.3 C500.8 333.1 496.2 336.4 491.5 336.8 C486.8 337.2 479.7 336.1 477.3 335.9 M519.0 338.0 C519.0 335.2 518.4 326.7 519.1 321.3 C519.8 316.0 520.6 310.8 523.0 305.9 C525.5 301.1 532.1 294.5 533.9 292.2 M383.0 347.0 C383.7 348.4 386.9 352.5 387.1 355.5 C387.2 358.5 383.9 362.0 383.9 365.1 C383.9 368.2 386.5 372.5 387.0 374.0 M383.0 347.0 C385.0 347.9 390.6 352.5 395.0 352.5 C399.3 352.5 404.7 346.6 409.1 346.9 C413.5 347.2 419.1 353.1 421.1 354.3 M383.0 347.0 C384.0 345.1 386.6 339.4 388.7 335.8 C390.9 332.1 394.5 329.1 395.8 325.1 C397.1 321.0 396.4 313.8 396.6 311.6 M452.0 356.0 C453.5 357.5 459.0 361.0 460.8 364.7 C462.7 368.5 460.7 374.9 462.9 378.4 C465.1 382.0 472.2 384.7 474.0 386.0 M452.0 356.0 C453.6 355.2 459.3 353.8 461.8 351.3 C464.3 348.7 464.5 343.3 467.1 340.7 C469.7 338.2 475.6 336.7 477.3 335.9 M452.0 356.0 C450.3 356.3 445.0 358.6 441.7 357.9 C438.3 357.3 435.2 352.7 431.8 352.1 C428.4 351.5 422.9 353.9 421.1 354.3 M48.0 372.0 C48.9 374.4 51.5 381.8 53.5 386.7 C55.4 391.6 59.0 396.0 59.5 401.3 C60.1 406.5 57.4 415.2 57.0 418.0 M48.0 372.0 C46.0 373.6 40.8 380.6 36.2 381.8 C31.6 383.0 25.2 378.6 20.3 379.3 C15.4 380.0 9.2 384.9 7.0 386.0 M48.0 372.0 C48.8 370.3 52.1 365.4 52.7 361.7 C53.3 358.0 50.8 353.5 51.6 349.8 C52.5 346.1 56.7 341.2 57.7 339.5 M156.0 381.0 C157.9 382.8 162.8 390.0 167.4 391.9 C172.0 393.9 178.9 391.1 183.8 392.6 C188.8 394.1 194.8 399.6 197.0 401.0 M156.0 381.0 C154.1 380.0 148.0 377.5 144.4 375.2 C140.8 373.0 137.4 370.5 134.3 367.5 C131.1 364.5 126.9 359.1 125.5 357.4 M156.0 381.0 C155.1 383.2 152.2 389.8 150.5 394.2 C148.7 398.6 146.4 402.8 145.4 407.5 C144.3 412.2 144.4 419.9 144.2 422.4 M156.0 381.0 C157.5 379.9 163.2 377.6 164.9 374.4 C166.6 371.3 164.4 365.2 166.2 362.0 C168.0 358.9 174.2 356.7 175.8 355.6 M289.0 387.0 C289.8 389.3 291.5 396.4 293.9 400.5 C296.3 404.7 301.0 407.6 303.3 411.9 C305.7 416.1 307.2 423.6 308.0 426.0 M289.0 387.0 C287.1 387.6 281.2 391.0 277.4 390.7 C273.5 390.4 269.7 386.1 265.8 385.4 C261.9 384.7 255.8 386.5 253.8 386.7 M289.0 387.0 C287.6 384.7 282.8 378.0 280.5 373.3 C278.1 368.6 275.8 364.0 274.8 358.8 C273.9 353.6 274.9 344.8 274.9 342.0 M387.0 374.0 C386.9 376.0 384.5 382.7 386.3 386.1 C388.0 389.5 395.7 391.1 397.5 394.6 C399.3 398.0 397.2 404.9 397.1 407.0 M387.0 374.0 C388.9 372.9 394.5 369.7 398.2 367.4 C401.8 365.0 405.1 362.2 409.0 360.0 C412.8 357.8 419.1 355.2 421.1 354.3 M474.0 386.0 C473.5 383.2 469.4 374.6 470.9 369.2 C472.3 363.8 481.4 358.9 482.5 353.4 C483.6 347.8 478.2 338.9 477.3 335.9 M474.0 386.0 C473.2 388.5 471.4 396.5 469.1 400.9 C466.8 405.4 463.9 409.3 460.2 412.8 C456.5 416.3 449.2 420.4 446.9 421.9 M197.0 401.0 C199.0 402.1 205.6 404.6 209.2 407.4 C212.8 410.2 215.0 414.7 218.6 417.7 C222.2 420.6 228.6 423.8 230.6 425.1 M197.0 401.0 C198.1 398.8 201.3 392.2 203.6 387.9 C206.0 383.7 209.3 379.9 211.2 375.3 C213.1 370.7 214.5 363.0 215.2 360.6 M57.0 418.0 C58.0 420.2 60.8 427.0 63.2 431.3 C65.5 435.5 68.7 439.3 71.2 443.6 C73.7 447.9 76.9 454.8 78.0 457.0 M57.0 418.0 C58.9 418.0 65.2 419.8 68.4 418.1 C71.5 416.4 72.7 409.5 75.8 407.6 C79.0 405.7 85.3 407.0 87.2 406.9 M57.0 418.0 C55.0 417.8 49.0 417.0 45.0 416.8 C41.0 416.6 37.0 417.2 32.9 416.6 C28.9 416.1 22.9 414.0 20.8 413.4 M308.0 426.0 C310.3 426.2 317.7 428.3 321.8 427.0 C326.0 425.8 328.9 420.7 332.9 418.6 C336.9 416.6 343.6 415.5 345.7 414.9 M308.0 426.0 C309.0 428.2 312.6 434.7 314.2 439.4 C315.8 444.1 315.3 449.6 317.4 454.1 C319.5 458.7 325.2 464.5 326.8 466.5 M308.0 426.0 C305.2 425.5 296.4 422.3 291.0 423.0 C285.7 423.7 281.2 428.0 276.0 430.0 C270.9 432.1 262.8 434.4 260.2 435.3 M372.0 432.0 C374.5 431.0 382.2 426.8 387.3 426.0 C392.4 425.2 397.5 426.3 402.7 427.1 C408.0 427.9 416.1 430.2 418.7 430.9 M372.0 432.0 C373.0 430.2 375.6 424.6 377.9 421.3 C380.1 418.1 382.4 414.9 385.6 412.5 C388.8 410.1 395.2 407.9 397.1 407.0 M372.0 432.0 C370.2 431.6 363.8 431.9 361.3 429.5 C358.7 427.1 359.3 420.1 356.7 417.6 C354.1 415.2 347.6 415.4 345.7 414.9 M78.0 457.0 C78.3 454.2 78.3 445.7 79.9 440.2 C81.4 434.8 86.1 430.1 87.3 424.5 C88.5 419.0 87.2 409.8 87.2 406.9 M78.0 457.0 C79.8 455.8 85.2 452.0 89.0 449.9 C92.7 447.8 96.5 445.8 100.6 444.5 C104.8 443.2 111.8 442.6 114.0 442.2 M78.0 457.0 C76.3 457.3 70.2 456.5 67.6 458.7 C65.0 460.8 65.1 467.4 62.5 469.6 C59.9 471.8 53.8 471.5 52.1 471.9 M247.0 466.0 C248.9 467.5 254.0 474.1 258.7 475.1 C263.4 476.1 270.5 470.8 275.2 472.0 C280.0 473.1 285.0 480.3 287.0 482.0 M247.0 466.0 C246.6 468.0 245.6 473.8 244.9 477.7 C244.2 481.6 243.7 485.5 242.9 489.4 C242.1 493.4 240.5 499.4 240.0 501.3 M247.0 466.0 C246.2 463.7 243.9 456.8 242.3 452.2 C240.7 447.6 239.3 443.0 237.3 438.5 C235.4 434.0 231.7 427.3 230.6 425.1 M247.0 466.0 C247.2 464.1 246.4 457.7 248.4 454.6 C250.3 451.4 256.7 450.2 258.6 447.0 C260.6 443.8 259.9 437.2 260.2 435.3 M528.0 461.0 C524.8 464.5 515.8 476.2 508.6 482.2 C501.4 488.3 493.3 492.7 484.9 497.1 C476.4 501.6 462.5 507.0 458.0 509.0 M528.0 461.0 C529.8 464.0 536.8 472.7 538.8 479.1 C540.9 485.4 540.0 492.3 540.2 499.1 C540.4 505.9 540.0 516.5 540.0 520.0 M528.0 461.0 C526.3 465.4 520.6 478.5 517.9 487.5 C515.3 496.6 514.6 506.0 512.1 515.3 C509.6 524.5 504.5 538.4 503.0 543.0 M157.0 483.0 C154.7 483.3 147.4 483.3 143.3 484.8 C139.2 486.3 136.0 489.3 132.4 492.0 C128.8 494.7 123.7 499.5 122.0 501.0 M157.0 483.0 C159.1 485.0 165.7 490.8 169.7 494.9 C173.8 499.0 177.9 503.0 181.4 507.7 C185.0 512.4 189.4 520.5 191.0 523.0 M157.0 483.0 C158.1 481.2 161.8 476.2 163.8 472.5 C165.7 468.8 166.4 464.3 168.6 460.8 C170.9 457.2 176.0 452.7 177.5 451.1 M157.0 483.0 C159.6 482.8 167.3 481.2 172.4 481.7 C177.5 482.1 182.5 485.2 187.7 485.6 C192.9 486.0 201.0 484.4 203.6 484.1 M287.0 482.0 C289.0 480.7 294.3 475.0 299.0 474.0 C303.7 473.1 310.4 477.7 315.1 476.4 C319.7 475.1 324.8 468.2 326.8 466.5 M287.0 482.0 C285.6 484.4 280.2 491.5 278.7 496.6 C277.2 501.8 278.2 507.4 277.8 512.9 C277.4 518.4 276.5 526.8 276.2 529.6 M122.0 501.0 C119.3 502.4 111.4 506.5 106.0 509.1 C100.6 511.7 94.0 512.6 89.5 516.6 C85.0 520.6 80.7 530.3 79.0 533.0 M122.0 501.0 C120.9 502.0 117.7 505.0 115.6 507.0 C113.5 509.0 111.6 511.2 109.4 513.2 C107.2 515.2 103.5 517.9 102.3 518.8 M458.0 509.0 C455.5 508.9 447.8 508.4 442.7 508.2 C437.6 508.0 432.5 507.0 427.4 507.7 C422.3 508.3 414.6 511.3 412.0 512.0 M458.0 509.0 C456.7 507.1 453.1 501.4 450.3 497.8 C447.5 494.2 443.5 491.4 441.2 487.5 C438.9 483.5 437.2 476.2 436.4 474.0 M458.0 509.0 C457.0 511.9 452.4 520.6 452.2 526.3 C452.0 532.0 455.4 537.4 456.8 543.1 C458.1 548.8 459.9 557.5 460.5 560.4 M338.0 518.0 C335.5 519.3 327.1 521.8 323.1 525.7 C319.1 529.6 318.4 538.0 314.1 541.5 C309.7 545.1 299.8 546.1 297.0 547.0 M338.0 518.0 C339.5 518.0 344.0 517.8 347.0 518.3 C350.0 518.7 352.8 520.2 355.8 520.6 C358.8 521.1 363.6 520.7 365.1 520.7 M338.0 518.0 C339.5 520.3 342.5 528.6 346.7 531.8 C350.9 534.9 358.6 534.0 363.1 536.9 C367.6 539.8 371.9 547.3 373.7 549.3 M338.0 518.0 C336.5 515.4 329.5 508.0 328.8 502.2 C328.0 496.4 333.9 489.3 333.6 483.4 C333.2 477.4 327.9 469.3 326.8 466.5 M412.0 512.0 C413.9 510.3 420.8 505.9 423.6 501.7 C426.4 497.6 426.4 491.8 428.6 487.2 C430.7 482.6 435.1 476.2 436.4 474.0 M412.0 512.0 C410.8 510.4 407.8 505.0 404.7 502.6 C401.6 500.1 396.8 499.7 393.6 497.2 C390.5 494.7 387.1 489.4 385.8 487.8 M540.0 520.0 C543.1 519.5 552.5 518.2 558.8 517.3 C565.1 516.4 571.3 513.9 577.6 514.3 C584.0 514.8 593.8 519.1 597.0 520.0 M540.0 520.0 C538.4 521.9 534.5 529.3 530.2 531.4 C525.8 533.5 518.4 530.4 513.8 532.4 C509.3 534.3 504.8 541.2 503.0 543.0 M540.0 520.0 C541.7 521.7 546.1 527.5 549.9 530.0 C553.7 532.5 558.7 532.9 563.0 534.8 C567.2 536.8 573.3 540.4 575.4 541.5 M540.0 520.0 C539.3 521.9 536.9 527.7 535.5 531.7 C534.2 535.6 533.1 539.5 531.8 543.6 C530.5 547.6 528.4 553.7 527.8 555.8 M597.0 520.0 C598.6 521.9 602.4 529.1 606.8 531.2 C611.1 533.4 619.0 530.7 623.3 533.1 C627.6 535.5 631.1 543.5 632.6 545.6 M597.0 520.0 C596.1 521.4 593.5 526.0 591.5 528.7 C589.4 531.4 587.4 534.0 584.7 536.1 C582.0 538.3 576.9 540.6 575.4 541.5 M191.0 523.0 C192.5 521.1 198.7 516.0 200.0 511.8 C201.4 507.5 198.7 501.9 199.3 497.3 C199.9 492.7 202.9 486.3 203.6 484.1 M191.0 523.0 C191.5 524.7 192.1 530.0 193.7 533.0 C195.4 536.0 199.2 537.9 200.9 541.0 C202.6 544.0 203.4 549.5 203.9 551.2 M79.0 533.0 C80.5 532.5 85.1 531.5 87.8 530.2 C90.6 528.9 93.0 527.2 95.4 525.3 C97.8 523.4 101.1 519.9 102.3 518.8 M79.0 533.0 C77.8 531.6 73.3 528.2 71.6 524.9 C69.9 521.5 71.2 516.0 69.0 513.0 C66.9 510.0 60.4 507.7 58.7 506.7 M79.0 533.0 C78.7 534.5 76.9 539.3 77.1 542.3 C77.3 545.3 79.1 547.9 80.2 550.8 C81.2 553.6 82.9 558.0 83.5 559.4 M503.0 543.0 C500.8 544.3 494.7 549.4 489.7 550.5 C484.7 551.6 477.8 547.9 472.9 549.6 C468.1 551.2 462.6 558.6 460.5 560.4 M503.0 543.0 C504.1 544.2 506.9 548.7 509.6 550.2 C512.3 551.7 516.1 550.9 519.1 551.9 C522.2 552.8 526.3 555.1 527.8 555.8 M503.0 543.0 C503.0 545.2 503.8 551.7 503.1 555.9 C502.5 560.2 499.8 564.1 499.1 568.5 C498.5 572.8 499.1 579.5 499.1 581.8 M297.0 547.0 C298.1 548.0 301.6 550.8 303.9 552.7 C306.2 554.6 309.0 556.0 310.9 558.4 C312.7 560.8 314.3 565.6 315.0 567.0 M297.0 547.0 C295.3 548.2 290.6 552.1 287.1 554.1 C283.6 556.1 279.7 557.3 276.0 558.9 C272.2 560.4 266.3 562.7 264.4 563.5 M297.0 547.0 C295.8 546.1 292.3 543.3 290.1 541.4 C287.8 539.4 285.8 537.3 283.5 535.3 C281.2 533.4 277.5 530.6 276.2 529.6 M151.0 561.0 C150.0 562.9 146.1 568.5 145.3 572.4 C144.5 576.4 146.1 580.7 146.2 584.8 C146.3 589.0 145.9 595.3 145.9 597.4 M151.0 561.0 C153.9 560.3 162.5 558.2 168.3 557.1 C174.1 556.0 179.9 555.3 185.8 554.3 C191.8 553.3 200.9 551.7 203.9 551.2 M151.0 561.0 C152.6 562.3 156.9 566.9 160.3 568.9 C163.8 570.9 167.8 571.5 171.6 573.0 C175.4 574.4 181.2 576.7 183.1 577.4 M315.0 567.0 C314.1 568.6 311.3 573.6 309.4 576.8 C307.4 580.0 305.6 583.3 303.4 586.4 C301.2 589.5 297.3 593.9 296.1 595.4 M315.0 567.0 C312.3 566.3 304.1 563.4 298.5 562.7 C293.0 561.9 287.4 562.5 281.7 562.7 C276.0 562.8 267.3 563.3 264.4 563.5 M659.0 565.0 C656.6 567.2 649.3 573.7 644.5 578.1 C639.8 582.6 636.0 588.4 630.4 591.9 C624.9 595.3 614.2 597.8 611.0 599.0 M659.0 565.0 C657.3 564.3 651.9 562.5 648.6 560.9 C645.3 559.3 641.9 558.0 639.2 555.4 C636.6 552.9 633.7 547.3 632.6 545.6 M659.0 565.0 C658.6 567.9 657.0 576.6 656.3 582.4 C655.7 588.3 654.4 594.0 655.0 599.9 C655.6 605.7 659.1 614.7 660.0 617.7 M236.0 573.0 C234.2 574.1 228.1 576.4 225.1 579.3 C222.0 582.3 221.0 588.3 217.4 590.8 C213.9 593.2 206.2 593.5 204.0 594.0 M236.0 573.0 C236.3 571.3 237.2 566.3 237.8 562.9 C238.4 559.5 238.5 556.1 239.7 552.9 C240.9 549.6 244.0 545.0 244.8 543.4 M236.0 573.0 C233.9 572.4 226.5 571.7 223.1 569.2 C219.7 566.6 218.6 560.7 215.4 557.7 C212.2 554.7 205.8 552.3 203.9 551.2 M236.0 573.0 C237.7 572.9 243.0 573.1 246.2 572.5 C249.5 571.8 252.5 570.7 255.6 569.2 C258.6 567.7 262.9 564.4 264.4 563.5 M21.0 586.0 C20.1 587.1 16.4 590.0 15.3 592.7 C14.3 595.3 15.9 599.2 14.9 601.9 C13.9 604.6 10.4 607.8 9.5 609.0 M21.0 586.0 C22.8 587.1 27.7 591.5 31.7 592.8 C35.6 594.0 40.8 592.2 44.8 593.5 C48.8 594.7 54.1 599.0 55.9 600.1 M21.0 586.0 C20.5 583.5 18.0 575.9 18.2 570.8 C18.4 565.7 22.4 560.4 22.3 555.2 C22.3 550.0 18.8 542.2 18.1 539.6 M21.0 586.0 C19.3 585.8 13.6 586.2 10.9 584.5 C8.2 582.9 7.3 578.1 4.8 576.0 C2.2 573.9 -2.7 572.7 -4.2 572.0 M204.0 594.0 C202.4 595.6 197.8 600.8 194.2 603.5 C190.6 606.2 186.3 607.7 182.4 610.1 C178.5 612.5 172.9 616.7 171.0 618.0 M204.0 594.0 C205.6 596.3 211.0 603.0 213.8 607.8 C216.6 612.6 219.1 617.4 220.8 622.8 C222.5 628.2 223.5 637.1 224.0 640.0 M204.0 594.0 C203.2 592.7 201.4 587.8 199.1 586.0 C196.8 584.2 192.7 584.7 190.0 583.3 C187.4 581.8 184.2 578.4 183.1 577.4 M429.0 599.0 C429.4 600.6 431.7 605.5 431.6 608.8 C431.5 612.1 428.8 615.5 428.5 618.8 C428.2 622.2 429.8 627.3 430.0 629.0 M429.0 599.0 C430.2 601.1 432.7 608.2 436.0 611.3 C439.2 614.4 444.8 615.0 448.6 617.7 C452.4 620.4 457.0 625.8 458.6 627.4 M429.0 599.0 C430.9 597.0 436.2 590.8 440.2 587.0 C444.2 583.2 449.6 580.6 453.0 576.2 C456.4 571.7 459.3 563.0 460.5 560.4 M429.0 599.0 C428.1 596.6 426.6 588.5 423.5 584.6 C420.5 580.7 414.3 579.4 410.7 575.9 C407.0 572.4 403.2 565.7 401.7 563.6 M355.0 602.0 C353.5 603.7 348.4 608.5 346.2 612.5 C343.9 616.5 344.2 622.3 341.5 626.0 C338.8 629.8 331.9 633.5 330.0 635.0 M355.0 602.0 C357.2 603.4 365.4 605.9 368.2 610.1 C370.9 614.4 368.5 623.4 371.5 627.5 C374.5 631.7 383.6 633.8 386.0 635.0 M355.0 602.0 C356.1 600.7 358.8 596.2 361.4 594.2 C364.0 592.1 367.7 591.6 370.5 589.7 C373.3 587.9 376.9 584.2 378.2 583.0 M611.0 599.0 C610.7 601.6 610.2 609.5 609.3 614.6 C608.4 619.7 607.8 624.8 605.6 629.6 C603.4 634.3 597.6 640.8 596.0 643.0 M611.0 599.0 C609.9 600.2 607.0 604.3 604.6 606.3 C602.2 608.4 599.1 609.5 596.4 611.3 C593.6 613.1 589.6 616.0 588.3 617.0 M611.0 599.0 C612.4 601.0 618.3 606.3 619.5 611.1 C620.7 615.8 616.8 622.7 618.3 627.4 C619.8 632.1 627.0 637.2 628.7 639.1 M85.0 620.0 C83.8 622.1 81.5 629.4 77.9 632.7 C74.3 635.9 66.9 636.0 63.5 639.5 C60.2 643.1 58.9 651.6 58.0 654.0 M85.0 620.0 C83.5 618.7 79.1 614.9 76.2 612.3 C73.4 609.6 71.3 605.9 67.9 603.8 C64.5 601.8 57.9 600.8 55.9 600.1 M85.0 620.0 C85.6 618.6 87.9 614.6 88.7 611.6 C89.5 608.5 88.3 604.7 89.7 601.9 C91.1 599.1 95.7 596.0 96.9 594.8 M85.0 620.0 C86.1 621.4 89.8 625.6 91.6 628.6 C93.5 631.6 95.3 634.6 96.2 638.0 C97.1 641.5 96.9 647.5 97.1 649.4 M171.0 618.0 C174.3 618.4 184.4 618.7 190.6 620.1 C196.9 621.5 203.0 623.0 208.5 626.4 C214.1 629.7 221.4 637.7 224.0 640.0 M171.0 618.0 C169.4 617.1 164.1 615.1 161.3 612.9 C158.6 610.6 156.9 607.0 154.4 604.4 C151.8 601.9 147.3 598.5 145.9 597.4 M171.0 618.0 C168.9 618.9 161.9 620.5 158.2 623.2 C154.5 625.9 152.6 631.9 148.7 634.4 C144.9 636.9 137.1 637.8 134.8 638.5 M278.0 618.0 C279.1 619.1 282.9 622.2 284.7 624.8 C286.6 627.4 287.1 631.1 289.1 633.6 C291.1 636.1 295.5 638.9 296.8 639.9 M278.0 618.0 C278.6 616.4 279.5 611.0 281.7 608.7 C283.8 606.4 288.7 606.3 291.1 604.0 C293.5 601.8 295.3 596.9 296.1 595.4 M278.0 618.0 C277.9 619.5 277.9 624.3 277.3 627.2 C276.7 630.1 275.9 633.0 274.3 635.5 C272.8 638.1 268.8 641.4 267.7 642.6 M430.0 629.0 C427.5 628.8 419.9 627.2 415.1 627.8 C410.2 628.4 405.7 631.4 400.9 632.6 C396.1 633.7 388.5 634.6 386.0 635.0 M430.0 629.0 C430.7 631.7 432.1 639.9 434.4 645.0 C436.7 650.0 441.7 653.9 443.8 659.1 C445.9 664.3 446.5 673.2 447.0 676.0 M430.0 629.0 C431.6 628.5 436.1 626.0 439.3 625.9 C442.5 625.8 445.7 628.2 448.9 628.4 C452.1 628.7 457.0 627.6 458.6 627.4 M430.0 629.0 C428.9 630.9 426.9 637.6 423.6 640.5 C420.2 643.4 413.0 643.1 410.1 646.4 C407.1 649.7 406.5 657.8 405.8 660.0 M522.0 629.0 C520.5 630.1 515.6 633.4 512.7 635.9 C509.9 638.4 506.9 640.7 504.8 643.9 C502.7 647.1 500.8 653.1 500.0 655.0 M522.0 629.0 C521.9 631.9 522.5 641.0 521.1 646.4 C519.8 651.9 516.1 656.6 513.7 661.8 C511.4 667.1 508.1 675.3 507.0 678.0 M522.0 629.0 C520.5 626.5 516.3 619.0 513.0 614.1 C509.7 609.3 504.5 605.5 502.2 600.1 C499.9 594.7 499.6 584.8 499.1 581.8 M330.0 635.0 C328.2 635.3 322.7 636.4 319.1 636.8 C315.4 637.2 311.7 636.8 308.0 637.3 C304.3 637.9 298.7 639.5 296.8 639.9 M330.0 635.0 C330.4 636.7 331.7 641.7 332.4 645.1 C333.1 648.4 334.2 651.7 334.2 655.2 C334.2 658.6 332.7 664.1 332.4 665.9 M386.0 635.0 C387.6 636.0 393.1 638.3 395.6 640.8 C398.1 643.4 399.1 646.9 400.8 650.1 C402.5 653.3 404.9 658.4 405.8 660.0 M224.0 640.0 C226.4 640.1 233.7 639.5 238.4 640.7 C243.2 641.9 247.7 647.0 252.5 647.3 C257.4 647.6 265.2 643.4 267.7 642.6 M596.0 643.0 C595.8 645.4 593.7 652.9 594.5 657.7 C595.4 662.5 600.1 667.0 600.8 671.8 C601.6 676.7 599.3 684.5 599.0 687.0 M596.0 643.0 C594.5 645.2 590.2 652.1 586.9 656.3 C583.6 660.5 580.4 664.6 576.3 668.1 C572.2 671.5 564.5 675.6 562.1 677.0 M596.0 643.0 C596.0 641.4 597.4 636.4 596.0 633.7 C594.6 631.0 588.9 629.6 587.6 626.8 C586.3 624.0 588.2 618.6 588.3 617.0 M596.0 643.0 C597.9 643.4 603.6 645.3 607.2 645.2 C610.9 645.2 614.3 643.8 617.9 642.8 C621.4 641.7 626.9 639.7 628.7 639.1 M58.0 654.0 C55.7 655.9 49.4 662.7 44.3 665.7 C39.2 668.6 32.6 669.1 27.2 671.8 C21.8 674.5 14.5 680.3 12.0 682.0 M58.0 654.0 C60.1 653.1 66.1 648.7 70.4 648.5 C74.8 648.4 79.6 652.9 84.0 653.0 C88.5 653.1 94.9 650.0 97.1 649.4 M58.0 654.0 C54.5 655.5 44.3 663.6 36.9 663.0 C29.4 662.4 21.0 650.7 13.5 650.3 C6.0 649.9 -4.5 658.9 -8.1 660.6 M500.0 655.0 C500.5 656.2 502.2 659.9 502.8 662.4 C503.5 665.0 503.1 667.8 503.8 670.4 C504.5 673.0 506.5 676.7 507.0 678.0 M500.0 655.0 C498.3 652.6 493.8 644.6 489.7 640.9 C485.6 637.1 480.7 634.7 475.6 632.5 C470.4 630.2 461.4 628.2 458.6 627.4 M114.0 672.0 C112.7 673.8 107.9 678.9 106.0 682.8 C104.2 686.8 104.2 691.4 103.1 695.7 C102.0 700.0 99.8 706.5 99.2 708.6 M114.0 672.0 C112.9 670.8 109.5 667.6 107.7 665.1 C105.8 662.6 104.8 659.5 103.0 656.9 C101.2 654.3 98.1 650.6 97.1 649.4 M114.0 672.0 C114.2 674.7 113.2 683.3 114.9 688.4 C116.7 693.5 122.5 697.5 124.4 702.6 C126.3 707.7 126.0 716.5 126.3 719.3 M114.0 672.0 C115.8 670.6 122.2 666.9 124.7 663.3 C127.2 659.8 127.1 654.7 128.7 650.5 C130.4 646.4 133.8 640.5 134.8 638.5 M172.0 676.0 C173.3 677.6 176.0 684.1 179.6 685.9 C183.1 687.6 189.7 684.8 193.4 686.4 C197.1 688.1 200.3 694.3 201.7 695.9 M172.0 676.0 C169.9 673.9 163.8 667.8 159.7 663.7 C155.6 659.5 151.7 655.4 147.6 651.2 C143.4 647.0 136.9 640.6 134.8 638.5 M172.0 676.0 C173.0 678.3 176.7 684.8 177.8 689.5 C178.9 694.3 177.6 699.5 178.4 704.4 C179.2 709.2 182.0 716.3 182.7 718.7 M447.0 676.0 C447.6 673.3 449.8 665.4 450.8 660.0 C451.8 654.5 451.6 648.9 452.9 643.5 C454.2 638.1 457.7 630.1 458.6 627.4 M447.0 676.0 C444.6 675.5 436.9 675.1 432.4 673.3 C427.9 671.5 424.3 667.5 419.9 665.3 C415.4 663.1 408.1 660.9 405.8 660.0 M507.0 678.0 C506.3 680.3 504.0 687.1 502.5 691.7 C501.1 696.3 500.5 701.1 498.4 705.5 C496.3 709.9 491.4 715.9 490.0 718.0 M507.0 678.0 C508.6 679.7 514.9 684.4 516.7 688.5 C518.6 692.6 517.1 698.0 518.1 702.5 C519.2 707.0 522.4 713.3 523.2 715.5 M507.0 678.0 C508.6 679.0 513.1 682.9 516.8 683.9 C520.5 684.9 525.6 682.6 529.2 683.9 C532.8 685.1 537.1 690.2 538.7 691.5 M676.0 667.0 C676.4 670.1 675.1 680.7 678.4 685.9 C681.7 691.0 692.5 692.6 695.9 697.8 C699.3 703.0 698.5 713.8 699.0 717.0 M676.0 667.0 C673.7 668.4 666.8 673.2 662.0 675.4 C657.2 677.5 652.3 679.2 647.0 679.7 C641.7 680.1 633.0 678.3 630.2 678.1 M676.0 667.0 C675.1 665.7 673.3 661.0 670.8 659.2 C668.2 657.4 663.5 658.1 661.0 656.3 C658.4 654.5 656.4 649.7 655.5 648.3 M676.0 667.0 C676.7 665.5 677.8 660.3 680.0 658.2 C682.3 656.2 687.1 656.6 689.6 654.7 C692.2 652.9 694.2 648.3 695.2 647.0 M599.0 687.0 C596.9 686.9 590.3 687.1 586.2 686.2 C582.0 685.3 578.3 683.4 574.3 681.8 C570.3 680.3 564.2 677.8 562.1 677.0 M599.0 687.0 C600.7 686.6 606.1 685.9 609.4 684.6 C612.8 683.4 615.6 680.5 619.1 679.4 C622.5 678.3 628.3 678.3 630.2 678.1 M599.0 687.0 C600.7 688.7 605.2 695.3 609.4 697.4 C613.6 699.4 619.7 697.8 624.3 699.4 C628.8 701.0 634.6 705.7 636.6 707.0 M279.0 693.0 C278.2 694.9 275.6 700.7 274.1 704.7 C272.6 708.6 271.2 712.5 270.1 716.7 C269.1 720.8 268.3 727.4 267.9 729.6 M279.0 693.0 C276.9 694.7 270.8 699.9 266.4 703.0 C262.0 706.1 256.6 707.9 252.5 711.5 C248.4 715.1 243.7 722.4 241.9 724.6 M279.0 693.0 C281.7 692.8 289.9 692.0 295.4 691.7 C300.8 691.4 306.3 690.5 311.7 691.3 C317.2 692.2 325.3 695.9 328.1 696.9 M699.0 717.0 C697.0 719.6 691.9 728.1 687.0 732.6 C682.2 737.1 674.3 739.0 670.0 744.1 C665.6 749.1 662.5 759.8 661.0 763.0 M699.0 717.0 C697.1 717.9 691.3 720.5 687.4 722.2 C683.5 723.8 679.7 725.5 675.7 727.1 C671.7 728.7 665.6 731.1 663.6 732.0 M490.0 718.0 C489.7 718.6 488.7 720.6 488.4 721.9 C488.1 723.2 488.2 724.5 488.3 725.8 C488.4 727.2 488.9 729.3 489.0 730.0 M490.0 718.0 C491.9 718.5 497.6 721.0 501.3 721.0 C504.9 721.1 508.4 719.1 512.1 718.2 C515.7 717.2 521.3 715.9 523.2 715.5 M489.0 730.0 C488.1 732.0 484.7 737.6 483.7 741.7 C482.6 745.8 483.5 750.4 482.6 754.7 C481.6 758.9 478.8 764.9 478.0 767.0 M489.0 730.0 C490.7 728.8 495.3 723.9 499.3 722.8 C503.3 721.8 508.9 724.8 512.9 723.6 C516.9 722.4 521.5 716.8 523.2 715.5 M367.0 733.0 C369.3 733.6 376.4 735.3 381.1 736.9 C385.7 738.5 390.0 742.1 394.9 742.6 C399.8 743.0 407.9 739.9 410.4 739.4 M367.0 733.0 C366.4 731.0 363.1 725.0 363.4 720.8 C363.7 716.7 368.9 712.1 369.0 707.9 C369.1 703.7 364.7 697.6 363.8 695.5 M367.0 733.0 C366.5 734.7 365.8 740.4 363.7 743.2 C361.6 746.0 356.7 747.1 354.5 749.9 C352.4 752.8 351.4 758.5 350.7 760.2 M67.0 740.0 C68.1 740.8 71.7 742.7 73.6 744.6 C75.5 746.6 76.3 749.8 78.4 751.6 C80.5 753.3 84.9 754.4 86.2 755.0 M67.0 740.0 C68.9 738.4 75.3 734.3 78.5 730.6 C81.8 726.8 83.1 721.2 86.6 717.6 C90.0 713.9 97.1 710.1 99.2 708.6 M67.0 740.0 C66.5 738.5 66.0 733.5 64.1 731.1 C62.2 728.6 57.5 728.0 55.6 725.6 C53.7 723.1 53.1 717.9 52.6 716.4 M67.0 740.0 C64.5 740.8 56.7 742.6 52.0 744.8 C47.4 747.0 43.4 750.2 39.0 753.1 C34.6 756.0 28.0 760.5 25.7 762.0 M86.2 755.0 C84.5 756.4 79.1 760.3 75.8 763.1 C72.6 765.9 69.0 768.5 66.4 772.0 C63.9 775.6 61.5 782.4 60.5 784.5 M86.2 755.0 C85.5 757.7 85.2 766.9 81.8 771.1 C78.3 775.2 69.0 775.7 65.5 779.9 C62.1 784.2 61.8 793.7 61.0 796.5 M86.2 755.0 C87.6 757.8 91.4 766.5 94.6 771.8 C97.8 777.1 101.1 782.2 105.4 786.7 C109.7 791.3 118.0 797.0 120.5 799.0 M86.2 755.0 C87.8 752.7 94.5 746.3 96.1 741.3 C97.7 736.2 95.4 730.1 95.9 724.7 C96.4 719.2 98.6 711.3 99.2 708.6 M86.2 755.0 C84.8 752.5 81.6 744.0 77.9 739.8 C74.2 735.6 68.2 733.5 63.9 729.6 C59.7 725.7 54.5 718.6 52.6 716.4 M218.0 753.0 C216.5 754.2 211.0 757.2 209.2 760.3 C207.3 763.4 208.2 768.0 206.8 771.5 C205.4 774.9 202.0 779.4 201.0 781.0 M218.0 753.0 C218.8 754.8 220.5 760.8 222.9 764.1 C225.4 767.4 230.8 769.2 232.6 772.9 C234.4 776.6 233.6 783.9 233.8 786.2 M218.0 753.0 C219.2 751.3 223.1 746.6 225.2 743.1 C227.4 739.6 228.2 735.0 231.0 731.9 C233.8 728.9 240.1 725.9 241.9 724.6 M218.0 753.0 C215.2 753.6 206.5 757.5 201.3 756.6 C196.1 755.7 191.8 749.6 186.6 747.7 C181.4 745.8 173.1 745.8 170.3 745.4 M661.0 763.0 C660.6 761.2 658.6 755.9 658.4 752.5 C658.1 749.0 658.6 745.7 659.5 742.2 C660.3 738.8 662.9 733.7 663.6 732.0 M661.0 763.0 C661.8 766.1 661.9 777.2 666.0 781.8 C670.0 786.4 680.8 786.1 685.3 790.6 C689.7 795.0 691.5 805.4 692.7 808.3 M661.0 763.0 C661.3 765.3 663.3 772.3 662.9 776.9 C662.5 781.6 659.0 786.2 658.7 790.9 C658.4 795.6 660.9 802.8 661.3 805.2 M661.0 763.0 C659.3 762.4 652.9 761.9 650.5 759.3 C648.1 756.7 649.1 750.2 646.8 747.5 C644.4 744.7 638.3 743.7 636.6 743.0 M478.0 767.0 C475.8 766.2 469.4 763.2 464.8 762.2 C460.1 761.3 454.5 763.1 450.0 761.4 C445.6 759.6 440.2 753.3 438.2 751.7 M478.0 767.0 C477.9 769.9 478.8 778.9 477.3 784.2 C475.9 789.4 471.8 793.7 469.1 798.6 C466.4 803.5 462.5 811.2 461.2 813.7 M478.0 767.0 C479.4 768.4 483.2 773.1 486.3 775.6 C489.4 778.1 493.1 779.6 496.4 781.9 C499.7 784.3 504.5 788.2 506.1 789.5 M60.5 784.5 C60.6 785.2 61.0 787.1 61.3 788.4 C61.5 789.7 62.2 791.0 62.2 792.4 C62.1 793.7 61.2 795.8 61.0 796.5 M60.5 784.5 C58.8 782.9 54.4 777.2 50.3 775.1 C46.3 773.0 40.2 774.1 36.1 771.9 C32.0 769.7 27.5 763.7 25.7 762.0 M61.0 796.5 C64.3 796.5 74.1 796.5 80.7 796.6 C87.2 796.7 93.7 796.5 100.3 796.9 C107.0 797.3 117.1 798.7 120.5 799.0 M61.0 796.5 C59.2 794.5 53.2 788.9 50.0 784.5 C46.8 780.0 45.7 773.4 41.7 769.7 C37.6 766.0 28.4 763.3 25.7 762.0 M201.0 781.0 C200.8 781.7 200.1 783.7 199.9 785.1 C199.6 786.5 199.3 787.8 199.4 789.2 C199.5 790.6 200.3 792.8 200.5 793.5 M201.0 781.0 C202.9 781.0 208.6 780.0 212.1 780.8 C215.7 781.5 218.9 784.7 222.5 785.6 C226.1 786.5 231.9 786.1 233.8 786.2 M201.0 781.0 C199.3 782.2 194.0 785.6 190.7 788.1 C187.3 790.6 183.9 792.8 181.0 795.9 C178.1 798.9 174.5 804.6 173.2 806.4 M201.0 781.0 C199.2 779.2 192.8 774.4 190.1 769.9 C187.4 765.4 188.0 758.2 184.7 754.1 C181.4 750.0 172.7 746.8 170.3 745.4 M200.5 793.5 C202.3 793.1 207.7 791.2 211.5 790.9 C215.2 790.7 219.5 792.7 223.2 791.9 C226.9 791.1 232.1 787.1 233.8 786.2 M200.5 793.5 C199.0 794.2 194.7 796.8 191.6 797.9 C188.5 799.1 184.8 799.0 181.8 800.4 C178.7 801.9 174.6 805.4 173.2 806.4 M324.0 790.0 C321.3 791.3 313.2 795.7 307.6 797.6 C301.9 799.5 296.2 800.6 290.3 801.3 C284.3 801.9 274.7 801.4 271.6 801.5 M324.0 790.0 C325.0 791.7 328.2 796.6 330.2 799.9 C332.2 803.3 333.7 806.8 336.0 810.1 C338.2 813.3 342.3 817.9 343.6 819.4 M324.0 790.0 C325.5 788.4 329.5 783.1 332.9 780.2 C336.3 777.3 341.3 776.1 344.3 772.7 C347.3 769.4 349.7 762.3 350.7 760.2 M324.0 790.0 C324.5 787.6 327.4 780.4 327.0 775.8 C326.5 771.2 322.2 766.9 321.3 762.2 C320.3 757.6 321.0 750.2 321.0 747.8 M438.0 8.0 C438.5 10.0 441.0 16.0 440.9 19.8 C440.8 23.7 438.2 27.3 437.3 31.1 C436.3 34.9 435.5 40.9 435.1 42.8 M438.0 8.0 C436.0 8.9 430.4 13.1 426.2 13.2 C422.1 13.4 417.2 8.6 412.9 8.8 C408.7 8.9 402.8 13.1 400.8 13.9 M438.0 8.0 C439.9 6.1 445.0 -0.8 449.6 -3.5 C454.3 -6.2 461.1 -5.7 465.8 -8.3 C470.6 -11.0 476.2 -17.6 478.3 -19.5 M438.0 8.0 C439.4 8.5 443.6 10.5 446.5 11.0 C449.4 11.4 452.5 10.3 455.5 10.6 C458.5 10.8 463.0 12.0 464.5 12.3 M42.0 156.0 C40.0 154.5 34.4 148.4 29.8 147.0 C25.2 145.6 19.0 148.5 14.1 147.5 C9.3 146.6 2.8 142.2 0.6 141.1 M42.0 156.0 C41.0 157.3 38.3 161.7 35.7 163.8 C33.1 166.0 28.6 166.5 26.3 169.0 C24.1 171.6 23.0 177.5 22.3 179.2 M42.0 156.0 C43.6 156.8 49.2 158.5 51.7 161.0 C54.2 163.6 54.6 168.5 57.0 171.2 C59.5 173.8 64.8 176.1 66.4 177.1 M42.0 156.0 C38.9 154.4 28.2 150.9 23.2 146.6 C18.3 142.2 15.8 135.7 12.2 130.0 C8.5 124.3 3.0 115.4 1.2 112.4 M31.0 205.0 C28.7 208.2 23.0 218.5 17.4 224.0 C11.7 229.5 1.7 231.8 -3.0 238.1 C-7.7 244.5 -9.5 258.2 -10.8 262.2 M31.0 205.0 C31.9 206.7 34.0 212.4 36.3 215.4 C38.5 218.4 41.5 220.7 44.4 223.1 C47.4 225.5 52.5 228.7 54.2 229.8 M31.0 205.0 C30.1 203.7 26.6 200.2 25.7 197.3 C24.8 194.4 26.4 190.8 25.8 187.8 C25.2 184.8 22.9 180.6 22.3 179.2 M31.0 205.0 C32.7 203.1 37.7 197.5 41.1 193.8 C44.5 190.1 47.2 185.7 51.4 182.9 C55.6 180.1 63.9 178.1 66.4 177.1 M32.0 101.0 C30.8 98.0 27.5 88.7 24.7 82.9 C22.0 77.1 19.5 71.3 15.5 66.1 C11.5 61.0 3.2 54.4 0.8 52.1 M32.0 101.0 C32.7 98.1 34.2 89.1 36.0 83.4 C37.8 77.6 41.0 72.4 42.8 66.5 C44.6 60.7 46.0 51.3 46.6 48.3 M32.0 101.0 C30.5 103.4 26.4 110.9 23.2 115.5 C20.0 120.1 16.7 124.5 12.9 128.8 C9.1 133.0 2.6 139.0 0.6 141.1 M32.0 101.0 C30.5 102.2 26.6 107.2 23.1 108.1 C19.6 109.1 14.6 105.9 11.0 106.6 C7.3 107.3 2.8 111.5 1.2 112.4 M33.0 26.0 C31.0 27.1 24.2 29.6 20.9 32.7 C17.6 35.9 16.5 41.7 13.2 44.9 C9.8 48.1 2.9 50.9 0.8 52.1 M33.0 26.0 C33.9 27.1 37.7 29.9 38.7 32.6 C39.7 35.4 37.8 39.8 39.2 42.4 C40.5 45.1 45.4 47.3 46.6 48.3 M33.0 26.0 C32.5 24.1 30.0 18.5 29.8 14.7 C29.6 10.9 31.6 7.1 31.8 3.2 C32.0 -0.7 31.1 -6.6 31.0 -8.6 M33.0 26.0 C35.0 24.5 40.2 17.9 44.8 17.2 C49.5 16.5 56.3 22.6 61.0 21.8 C65.8 21.1 71.2 14.4 73.3 13.0 M7.0 386.0 C6.3 382.2 5.6 370.1 2.8 363.0 C0.1 355.9 -5.8 350.1 -9.4 343.2 C-13.0 336.3 -17.1 325.1 -18.7 321.5 M7.0 386.0 C5.9 387.1 2.7 390.5 0.7 392.9 C-1.4 395.3 -2.8 398.3 -5.2 400.3 C-7.7 402.3 -12.6 404.0 -14.1 404.8 M7.0 386.0 C8.2 387.3 12.6 390.7 14.0 393.8 C15.3 397.0 13.9 401.4 15.1 404.7 C16.2 407.9 19.9 412.0 20.8 413.4 M11.0 444.0 C9.6 441.9 5.3 435.5 2.3 431.3 C-0.7 427.1 -4.3 423.5 -7.0 419.0 C-9.7 414.6 -12.9 407.2 -14.1 404.8 M11.0 444.0 C11.7 445.3 13.3 449.4 14.9 451.8 C16.6 454.2 19.6 455.8 21.1 458.3 C22.5 460.9 23.2 465.7 23.6 467.1 M11.0 444.0 C9.3 444.1 4.0 443.7 0.9 444.5 C-2.3 445.4 -5.0 447.6 -8.0 449.0 C-11.1 450.4 -15.8 452.3 -17.4 452.9 M11.0 444.0 C11.1 442.2 10.4 436.4 11.3 433.0 C12.2 429.5 14.8 426.7 16.4 423.5 C18.0 420.2 20.1 415.1 20.8 413.4 M9.5 609.0 C11.9 607.7 18.8 602.4 23.9 601.5 C29.0 600.5 34.8 603.3 40.1 603.1 C45.5 602.9 53.3 600.6 55.9 600.1 M9.5 609.0 C8.7 607.0 6.5 600.9 4.5 597.0 C2.5 593.1 -0.9 589.8 -2.4 585.6 C-3.8 581.5 -3.9 574.3 -4.2 572.0 M9.5 609.0 C7.4 611.5 -0.4 618.3 -2.8 623.8 C-5.2 629.3 -4.0 636.0 -4.9 642.1 C-5.8 648.2 -7.6 657.5 -8.1 660.6 M12.0 682.0 C14.4 683.7 22.2 688.0 26.5 692.0 C30.8 696.0 33.4 701.9 37.7 705.9 C42.1 710.0 50.1 714.6 52.6 716.4 M12.0 682.0 C11.0 680.7 8.7 676.2 6.1 674.2 C3.5 672.2 -1.2 672.3 -3.6 670.0 C-6.0 667.8 -7.4 662.2 -8.1 660.6 M425.3 89.5 C425.2 91.3 425.1 96.7 424.8 100.4 C424.6 104.0 423.9 107.6 423.8 111.3 C423.8 115.0 424.3 120.7 424.3 122.5 M425.3 89.5 C423.9 88.7 419.4 86.9 416.7 85.1 C414.1 83.4 411.9 81.2 409.4 79.1 C407.0 77.1 403.3 73.8 402.1 72.7 M0.8 52.1 C3.3 52.1 11.0 52.7 16.1 52.6 C21.1 52.5 26.1 52.0 31.2 51.3 C36.3 50.6 44.1 48.8 46.6 48.3 M281.6 28.3 C279.1 29.0 270.6 29.2 266.7 32.3 C262.9 35.4 262.5 43.6 258.7 46.9 C254.9 50.2 246.5 51.2 244.1 52.0 M281.6 28.3 C278.3 26.1 267.0 20.9 261.7 14.9 C256.4 8.8 255.7 -2.3 249.8 -7.9 C243.9 -13.4 230.4 -16.7 226.5 -18.4 M281.6 28.3 C282.6 30.7 286.7 37.6 288.1 42.4 C289.5 47.2 290.1 52.0 289.9 57.0 C289.7 62.1 287.4 70.1 286.9 72.7 M281.6 28.3 C282.3 27.0 284.0 22.4 286.0 20.2 C288.0 18.0 291.0 17.0 293.5 15.4 C296.1 13.7 300.0 11.2 301.3 10.4 M378.2 583.0 C377.5 581.3 374.4 576.0 373.7 572.3 C373.0 568.6 374.1 564.8 374.1 560.9 C374.1 557.1 373.7 551.3 373.7 549.3 M378.2 583.0 C379.5 582.0 383.5 579.0 385.9 576.6 C388.3 574.2 389.8 570.8 392.4 568.7 C395.1 566.5 400.2 564.5 401.7 563.6 M130.0 251.7 C129.3 250.1 127.2 245.3 125.9 242.0 C124.6 238.8 123.8 235.4 122.1 232.3 C120.4 229.2 116.9 224.9 115.8 223.4 M130.0 251.7 C131.4 250.7 135.9 247.8 138.8 245.8 C141.8 243.9 144.4 241.3 147.7 240.0 C151.0 238.7 156.9 238.4 158.7 238.1 M665.3 144.3 C665.2 146.5 663.1 153.5 664.4 157.4 C665.6 161.3 671.1 163.9 673.0 167.6 C674.9 171.4 675.5 177.9 676.0 179.9 M665.3 144.3 C667.0 140.7 671.1 129.1 675.5 122.9 C679.8 116.7 685.2 111.7 691.4 107.0 C697.5 102.4 708.9 97.0 712.4 95.0 M665.3 144.3 C662.5 143.0 654.4 137.9 648.5 136.5 C642.6 135.2 635.9 137.0 629.8 136.0 C623.7 134.9 614.8 131.2 611.8 130.3 M76.0 62.8 C74.7 61.5 71.0 56.6 68.0 54.7 C64.9 52.8 61.1 52.4 57.6 51.3 C54.0 50.3 48.5 48.8 46.6 48.3 M76.0 62.8 C78.0 64.3 85.5 67.6 87.7 71.6 C90.0 75.7 87.5 83.0 89.6 87.3 C91.6 91.6 98.3 95.8 100.1 97.5 M76.0 62.8 C78.1 63.0 84.6 64.2 88.6 63.9 C92.6 63.6 96.5 62.8 100.2 61.1 C103.8 59.3 109.0 54.6 110.7 53.3 M197.1 70.0 C195.2 69.3 189.5 66.3 185.6 65.7 C181.7 65.2 177.7 66.6 173.6 66.8 C169.6 67.0 163.4 66.9 161.4 66.9 M197.1 70.0 C196.2 72.7 192.5 80.7 191.9 86.1 C191.4 91.5 192.7 96.7 193.7 102.1 C194.6 107.6 197.0 115.9 197.6 118.7 M438.2 751.7 C436.6 751.2 431.9 749.4 428.8 748.3 C425.6 747.1 422.3 746.6 419.2 745.1 C416.1 743.6 411.9 740.3 410.4 739.4 M438.2 751.7 C437.8 753.7 437.1 760.1 435.5 763.6 C433.9 767.1 431.4 769.9 428.6 772.7 C425.9 775.5 420.6 779.1 419.0 780.4 M120.5 799.0 C123.4 799.2 132.2 800.2 138.1 800.1 C144.0 799.9 150.2 797.1 156.1 798.2 C161.9 799.2 170.4 805.0 173.2 806.4 M557.3 797.9 C554.3 798.3 545.2 800.9 539.6 800.0 C533.9 799.2 528.9 794.7 523.4 793.0 C517.8 791.2 509.0 790.1 506.1 789.5 M557.3 797.9 C556.9 795.9 554.5 789.9 555.3 785.9 C556.2 782.0 561.8 778.2 562.3 774.2 C562.9 770.2 559.0 763.8 558.3 761.8 M557.3 797.9 C560.8 797.8 571.7 795.5 578.4 797.0 C585.1 798.5 590.7 804.8 597.4 807.0 C604.0 809.2 614.8 809.7 618.3 810.3 M432.4 810.1 C434.0 810.3 438.7 811.2 441.9 811.4 C445.1 811.7 448.3 811.4 451.5 811.8 C454.7 812.1 459.6 813.3 461.2 813.7 M432.4 810.1 C430.7 809.5 425.7 807.5 422.2 806.4 C418.8 805.4 415.5 803.8 411.9 803.8 C408.3 803.8 402.5 805.8 400.7 806.2 M432.4 810.1 C432.1 808.3 432.6 802.1 430.6 799.1 C428.6 796.1 422.2 795.1 420.2 792.0 C418.3 788.9 419.2 782.3 419.0 780.4 M142.4 43.7 C143.6 44.9 147.4 48.2 149.5 50.7 C151.7 53.2 153.5 55.9 155.4 58.6 C157.4 61.4 160.4 65.6 161.4 66.9 M142.4 43.7 C145.4 42.8 155.5 41.3 160.7 38.2 C166.0 35.1 169.3 29.5 173.8 25.2 C178.3 20.8 185.4 14.4 187.7 12.2 M142.4 43.7 C140.7 44.4 135.8 47.2 132.3 48.0 C128.7 48.7 124.5 47.4 120.9 48.3 C117.4 49.2 112.4 52.5 110.7 53.3 M142.4 43.7 C141.4 45.0 137.1 48.4 136.8 51.4 C136.4 54.3 140.6 58.6 140.3 61.6 C140.0 64.6 135.9 68.3 135.0 69.6 M371.4 145.2 C374.8 145.0 386.2 147.6 391.7 144.2 C397.1 140.8 398.5 128.4 404.0 124.7 C409.4 121.1 420.9 122.9 424.3 122.5 M371.4 145.2 C369.9 148.4 366.3 159.0 362.4 164.4 C358.4 169.8 353.4 173.9 347.7 177.6 C341.9 181.3 331.3 185.1 328.1 186.6 M161.4 66.9 C159.9 66.7 155.3 64.8 152.4 65.3 C149.6 65.9 147.0 69.3 144.1 70.0 C141.2 70.7 136.5 69.7 135.0 69.6 M424.3 122.5 C426.3 124.4 431.4 131.2 435.9 133.9 C440.3 136.6 446.1 136.7 451.1 138.5 C456.1 140.4 463.4 143.8 465.9 144.9 M192.6 334.3 C192.1 335.8 191.8 341.3 189.5 343.3 C187.2 345.3 181.2 344.2 178.9 346.3 C176.6 348.3 176.3 354.0 175.8 355.6 M192.6 334.3 C194.2 335.4 200.4 337.6 202.3 341.0 C204.3 344.3 202.3 351.0 204.4 354.2 C206.6 357.5 213.4 359.5 215.2 360.6 M267.9 729.6 C266.6 728.8 262.7 725.9 259.9 725.3 C257.0 724.7 253.8 726.1 250.8 726.0 C247.8 725.9 243.4 724.9 241.9 724.6 M267.9 729.6 C269.0 731.4 273.0 736.6 274.6 740.3 C276.1 744.1 277.0 748.0 277.3 752.1 C277.6 756.2 276.4 762.9 276.3 765.0 M663.6 732.0 C661.8 730.9 656.2 728.0 652.9 725.6 C649.7 723.2 646.6 720.7 643.8 717.6 C641.1 714.5 637.8 708.8 636.6 707.0 M663.6 732.0 C662.0 732.3 656.8 732.3 653.9 733.8 C651.1 735.4 649.5 739.7 646.6 741.3 C643.7 742.8 638.2 742.7 636.6 743.0 M562.1 677.0 C560.9 677.9 557.0 680.2 554.6 682.2 C552.3 684.2 550.8 687.5 548.2 689.1 C545.5 690.6 540.3 691.1 538.7 691.5 M177.5 451.1 C178.4 453.3 180.0 460.9 183.1 464.3 C186.3 467.8 192.7 468.5 196.1 471.8 C199.5 475.1 202.4 482.1 203.6 484.1 M177.5 451.1 C175.0 450.2 166.3 449.2 162.9 445.7 C159.6 442.3 160.4 434.1 157.2 430.2 C154.1 426.3 146.4 423.7 144.2 422.4 M583.4 -16.7 C579.6 -15.4 567.4 -12.5 560.2 -8.8 C553.0 -5.2 547.3 1.2 540.3 5.4 C533.2 9.7 521.7 14.9 518.0 16.8 M583.4 -16.7 C585.4 -15.7 591.0 -11.6 595.3 -10.8 C599.6 -9.9 604.6 -12.4 609.0 -11.6 C613.4 -10.9 619.4 -7.3 621.5 -6.5 M583.4 -16.7 C583.0 -12.8 580.6 -0.9 580.6 6.9 C580.5 14.6 581.4 22.1 583.2 29.7 C585.1 37.4 590.2 48.9 591.5 52.7 M583.4 -16.7 C587.9 -16.4 601.2 -16.5 609.9 -14.8 C618.6 -13.1 626.8 -7.3 635.8 -6.4 C644.7 -5.5 658.9 -8.8 663.5 -9.3 M296.8 639.9 C296.4 637.5 294.2 630.2 294.2 625.3 C294.2 620.4 296.6 615.5 296.9 610.5 C297.2 605.6 296.2 598.0 296.1 595.4 M296.8 639.9 C295.2 639.9 290.3 639.0 287.1 639.9 C284.0 640.7 281.2 644.6 277.9 645.0 C274.7 645.5 269.4 643.0 267.7 642.6 M99.2 708.6 C96.6 708.8 88.8 709.7 83.6 710.0 C78.4 710.2 73.0 708.9 67.8 710.0 C62.6 711.0 55.1 715.3 52.6 716.4 M99.2 708.6 C100.4 709.8 104.0 713.8 106.8 715.5 C109.6 717.3 112.5 718.5 115.7 719.2 C119.0 719.8 124.6 719.2 126.3 719.3 M446.9 421.9 C445.4 422.5 441.0 424.7 437.8 425.5 C434.7 426.4 431.3 426.3 428.1 427.2 C424.9 428.0 420.3 430.3 418.7 430.9 M446.9 421.9 C443.9 422.0 434.1 424.8 428.9 422.2 C423.8 419.5 421.2 408.4 415.9 405.8 C410.6 403.3 400.2 406.8 397.1 407.0 M632.6 545.6 C629.4 546.5 619.5 551.8 613.3 551.0 C607.0 550.2 601.3 542.4 595.0 540.8 C588.7 539.2 578.7 541.4 575.4 541.5 M488.3 225.0 C487.7 226.6 486.5 231.8 484.8 234.9 C483.2 238.0 479.6 240.3 478.3 243.6 C477.0 246.9 477.0 252.7 476.8 254.6 M488.3 225.0 C489.7 225.6 494.1 228.0 497.0 228.7 C500.0 229.4 503.0 229.7 506.1 229.4 C509.1 229.1 514.0 227.4 515.6 227.0 M488.3 225.0 C488.5 227.2 488.2 234.2 489.4 238.3 C490.6 242.4 492.8 245.9 495.4 249.4 C497.9 252.9 503.0 257.7 504.6 259.3 M233.8 786.2 C236.2 786.2 243.8 785.4 248.2 786.5 C252.6 787.5 256.4 789.9 260.3 792.4 C264.3 794.9 269.8 800.0 271.6 801.5 M233.8 786.2 C236.1 785.0 242.9 781.0 247.7 779.0 C252.6 777.0 258.0 776.4 262.8 774.0 C267.5 771.7 274.0 766.5 276.3 765.0 M266.7 305.5 C266.6 307.7 265.6 314.2 266.0 318.3 C266.4 322.4 267.6 326.3 269.0 330.3 C270.5 334.2 273.9 340.0 274.9 342.0 M332.4 665.9 C331.9 667.5 329.4 672.4 329.0 675.8 C328.5 679.2 329.9 682.8 329.8 686.4 C329.6 689.9 328.3 695.1 328.1 696.9 M332.4 665.9 C334.5 667.1 341.3 670.3 345.1 673.2 C348.9 676.1 352.2 679.4 355.3 683.2 C358.4 686.9 362.4 693.5 363.8 695.5 M201.7 695.9 C203.6 697.9 208.4 705.2 213.1 708.0 C217.7 710.9 224.8 710.2 229.6 713.0 C234.4 715.8 239.9 722.7 241.9 724.6 M201.7 695.9 C201.0 697.5 200.2 703.2 197.9 705.5 C195.7 707.9 190.7 707.9 188.1 710.1 C185.6 712.3 183.6 717.3 182.7 718.7 M402.1 72.7 C400.2 73.1 394.6 74.2 390.9 75.0 C387.1 75.7 383.3 75.9 379.6 77.0 C375.9 78.1 370.5 80.8 368.7 81.6 M402.1 72.7 C401.0 71.3 398.1 67.0 395.8 64.4 C393.4 61.7 390.1 59.9 388.1 57.0 C386.0 54.1 384.3 48.7 383.5 47.0 M805.4 512.7 C804.0 516.8 796.9 529.3 797.1 537.5 C797.4 545.7 805.2 553.4 807.0 561.7 C808.8 569.9 807.8 582.7 808.0 586.9 M55.9 600.1 C58.2 600.0 65.0 599.4 69.5 599.1 C74.1 598.8 78.6 599.0 83.2 598.3 C87.7 597.6 94.6 595.4 96.9 594.8 M-4.0 493.2 C-1.8 495.3 6.1 500.9 9.2 505.7 C12.3 510.5 13.0 516.3 14.5 522.0 C16.0 527.6 17.5 536.7 18.1 539.6 M-4.0 493.2 C-2.6 491.6 0.5 485.8 4.1 483.5 C7.6 481.2 14.0 481.9 17.3 479.2 C20.6 476.5 22.6 469.2 23.6 467.1 M-4.0 493.2 C-5.5 491.3 -12.5 486.2 -13.2 481.5 C-13.9 476.8 -7.4 469.8 -8.2 465.1 C-8.9 460.3 -15.9 454.9 -17.4 452.9 M96.9 594.8 C96.3 592.8 95.0 586.6 93.4 582.8 C91.8 578.9 89.0 575.6 87.3 571.7 C85.7 567.8 84.1 561.5 83.5 559.4 M476.8 254.6 C474.4 254.4 467.3 253.7 462.5 253.5 C457.8 253.4 453.1 252.6 448.4 253.6 C443.8 254.6 436.9 258.4 434.6 259.4 M476.8 254.6 C478.2 255.2 482.4 258.2 485.6 258.2 C488.8 258.1 492.6 254.0 495.7 254.2 C498.9 254.4 503.1 258.5 504.6 259.3 M605.6 757.4 C603.0 756.9 594.8 753.6 589.6 754.4 C584.4 755.1 579.8 760.8 574.6 762.0 C569.4 763.2 561.1 761.8 558.3 761.8 M605.6 757.4 C605.6 760.5 603.7 770.2 605.1 776.0 C606.5 781.8 611.9 786.6 614.1 792.3 C616.3 798.0 617.6 807.3 618.3 810.3 M605.6 757.4 C605.9 758.9 605.6 764.1 607.4 766.5 C609.1 768.9 614.6 769.5 616.3 772.0 C618.1 774.5 617.5 780.0 617.7 781.6 M605.6 757.4 C607.3 756.6 612.2 753.8 615.8 752.6 C619.5 751.5 623.8 752.1 627.3 750.5 C630.8 748.9 635.0 744.2 636.6 743.0 M804.4 805.2 C803.0 806.0 799.3 809.2 796.2 809.9 C793.2 810.7 789.2 809.0 786.2 809.9 C783.1 810.9 779.5 814.8 778.1 815.8 M630.2 678.1 C629.5 675.9 626.2 669.6 626.1 665.3 C626.0 661.1 629.3 656.7 629.8 652.3 C630.2 648.0 628.9 641.3 628.7 639.1 M630.2 678.1 C631.1 679.5 635.5 683.6 635.9 686.8 C636.3 690.1 632.5 694.2 632.6 697.6 C632.7 700.9 636.0 705.4 636.6 707.0 M588.3 617.0 C586.4 615.5 579.8 611.7 576.9 607.9 C574.0 604.1 573.9 598.0 571.0 594.1 C568.1 590.2 561.6 586.0 559.7 584.4 M244.8 543.4 C243.8 541.2 239.4 534.7 238.7 530.1 C238.1 525.4 240.6 520.5 240.9 515.7 C241.1 511.0 240.2 503.7 240.0 501.3 M244.8 543.4 C245.9 544.6 248.5 548.4 251.0 550.3 C253.4 552.3 257.3 552.7 259.5 554.9 C261.8 557.1 263.6 562.0 264.4 563.5 M244.8 543.4 C246.4 542.4 250.9 538.5 254.5 537.2 C258.0 536.0 262.6 537.1 266.2 535.8 C269.9 534.5 274.6 530.6 276.2 529.6 M575.4 541.5 C574.4 543.8 571.5 550.8 569.6 555.4 C567.7 560.1 565.7 564.6 564.0 569.4 C562.4 574.3 560.4 581.9 559.7 584.4 M102.3 518.8 C99.6 519.0 91.1 521.8 86.5 520.0 C81.8 518.2 79.0 510.2 74.3 508.0 C69.7 505.8 61.3 506.9 58.7 506.7 M102.3 518.8 C101.3 521.1 98.5 527.9 96.3 532.3 C94.0 536.7 90.8 540.6 88.7 545.1 C86.5 549.6 84.3 557.1 83.5 559.4 M240.0 501.3 C237.7 501.1 229.6 502.7 225.9 500.1 C222.2 497.6 221.5 488.8 217.8 486.1 C214.1 483.4 206.0 484.5 203.6 484.1 M271.6 801.5 C271.2 799.4 268.3 792.9 268.8 788.9 C269.4 784.9 273.8 781.4 275.0 777.5 C276.2 773.5 276.1 767.1 276.3 765.0 M788.8 -1.3 C784.6 -1.3 772.2 -1.5 763.9 -1.3 C755.6 -1.1 747.3 0.7 739.0 -0.1 C730.6 -1.0 718.0 -5.3 713.8 -6.3 M788.8 -1.3 C787.2 -1.3 782.3 -0.4 779.4 -0.9 C776.4 -1.4 773.8 -3.0 770.9 -4.2 C768.1 -5.5 763.9 -7.7 762.4 -8.4 M540.3 74.4 C538.9 72.5 535.8 65.3 531.9 62.8 C527.9 60.3 520.6 61.8 516.6 59.2 C512.7 56.6 509.5 49.2 508.1 47.1 M540.3 74.4 C543.1 73.0 550.7 67.6 556.7 66.0 C562.7 64.5 570.5 67.4 576.3 65.2 C582.1 63.0 589.0 54.8 591.5 52.7 M46.6 48.3 C47.8 46.1 50.1 38.7 53.5 35.2 C57.0 31.7 64.1 31.1 67.4 27.4 C70.7 23.7 72.3 15.4 73.3 13.0 M461.2 813.7 C463.3 811.6 468.8 804.2 473.6 801.2 C478.4 798.2 484.3 797.7 489.7 795.7 C495.2 793.8 503.4 790.5 506.1 789.5 M523.2 715.5 C523.9 714.1 526.3 710.0 527.5 707.0 C528.8 704.1 528.8 700.4 530.7 697.8 C532.5 695.3 537.3 692.5 538.7 691.5 M523.2 715.5 C525.8 717.5 535.2 722.4 538.9 727.6 C542.6 732.8 542.2 741.0 545.4 746.7 C548.7 752.4 556.2 759.2 558.3 761.8 M145.9 597.4 C147.8 596.1 153.9 592.8 157.6 589.8 C161.2 586.8 163.6 581.4 167.8 579.4 C172.1 577.3 180.5 577.7 183.1 577.4 M660.0 617.7 C660.1 619.4 660.7 624.7 660.5 628.1 C660.3 631.5 659.8 634.8 658.9 638.2 C658.1 641.6 656.1 646.6 655.5 648.3 M660.0 617.7 C658.3 619.0 653.6 623.2 650.1 625.5 C646.6 627.8 642.6 629.1 639.0 631.4 C635.5 633.7 630.4 637.8 628.7 639.1 M660.0 617.7 C662.0 619.2 668.6 623.0 672.1 626.8 C675.5 630.5 676.7 636.8 680.6 640.2 C684.4 643.6 692.7 645.8 695.2 647.0 M97.1 649.4 C99.3 649.3 106.2 650.0 110.5 649.1 C114.7 648.3 118.5 646.0 122.6 644.2 C126.6 642.4 132.8 639.5 134.8 638.5 M410.4 739.4 C411.0 741.6 413.6 748.2 413.7 752.8 C413.9 757.5 410.7 762.8 411.6 767.4 C412.5 772.0 417.8 778.2 419.0 780.4 M328.1 696.9 C330.0 696.5 335.9 694.8 339.8 694.5 C343.7 694.2 347.6 695.0 351.6 695.2 C355.6 695.4 361.8 695.5 363.8 695.5 M655.5 648.3 C653.9 648.3 648.7 649.1 645.7 648.1 C642.7 647.2 640.5 644.2 637.7 642.7 C634.8 641.2 630.2 639.7 628.7 639.1 M655.5 648.3 C657.7 649.1 664.4 652.3 668.8 653.0 C673.2 653.7 677.4 653.4 681.8 652.4 C686.2 651.4 692.9 647.9 695.2 647.0 M100.1 97.5 C100.2 99.5 101.0 105.9 100.7 110.0 C100.3 114.1 98.7 118.1 97.9 122.2 C97.2 126.3 96.5 132.8 96.2 134.9 M100.1 97.5 C101.7 95.5 105.9 89.0 109.7 85.9 C113.6 82.8 118.7 81.5 122.9 78.8 C127.2 76.1 133.0 71.1 135.0 69.6 M418.7 430.9 C419.2 433.5 419.1 441.8 421.4 446.4 C423.8 451.0 430.3 453.7 432.8 458.3 C435.3 462.9 435.8 471.4 436.4 474.0 M418.7 430.9 C418.0 429.1 416.5 423.3 414.7 420.2 C412.8 417.1 410.4 414.5 407.5 412.3 C404.6 410.1 398.8 407.8 397.1 407.0 M87.2 406.9 C88.3 409.1 90.3 416.8 93.8 420.3 C97.3 423.7 104.8 424.0 108.2 427.7 C111.5 431.3 113.0 439.7 114.0 442.2 M400.7 806.2 C401.2 804.5 401.3 798.1 403.8 795.6 C406.4 793.2 413.4 794.0 416.0 791.4 C418.5 788.9 418.5 782.2 419.0 780.4 M400.7 806.2 C397.3 805.8 386.6 802.5 380.2 803.6 C373.9 804.8 368.7 810.5 362.6 813.1 C356.5 815.8 346.8 818.4 343.6 819.4 M114.0 442.2 C115.5 440.8 119.6 436.3 122.7 433.8 C125.9 431.3 129.1 429.1 132.7 427.2 C136.2 425.3 142.3 423.2 144.2 422.4 M187.7 12.2 C190.3 11.1 199.5 9.6 203.3 5.7 C207.2 1.7 206.8 -7.4 210.6 -11.4 C214.5 -15.4 223.9 -17.3 226.5 -18.4 M355.2 24.8 C356.5 23.5 360.5 19.9 362.6 17.0 C364.7 14.1 365.4 9.9 367.9 7.2 C370.3 4.6 375.9 2.1 377.5 1.1 M355.2 24.8 C357.1 25.6 363.6 26.9 366.4 29.8 C369.1 32.8 368.8 39.4 371.7 42.3 C374.5 45.1 381.5 46.2 383.5 47.0 M355.2 24.8 C352.5 23.1 344.8 16.3 338.9 14.5 C333.1 12.7 326.3 14.5 320.0 13.8 C313.8 13.1 304.4 11.0 301.3 10.4 M126.3 719.3 C128.9 720.4 136.6 724.1 141.7 726.4 C146.9 728.7 152.6 730.0 157.4 733.1 C162.2 736.3 168.2 743.3 170.3 745.4 M230.6 425.1 C231.2 422.5 232.2 414.5 234.1 409.9 C236.0 405.3 238.9 401.3 242.2 397.5 C245.4 393.6 251.9 388.5 253.8 386.7 M230.6 425.1 C232.3 425.4 237.4 426.3 240.9 426.8 C244.3 427.4 248.1 427.0 251.3 428.4 C254.5 429.8 258.7 434.1 260.2 435.3 M264.8 109.1 C267.5 109.2 275.5 109.5 280.8 109.8 C286.1 110.2 291.6 109.8 296.7 111.4 C301.9 112.9 309.3 117.8 311.8 119.0 M264.8 109.1 C266.3 107.2 270.9 101.8 273.7 98.0 C276.4 94.3 279.2 90.5 281.4 86.3 C283.6 82.1 286.0 75.0 286.9 72.7 M-10.8 262.2 C-12.5 265.3 -20.5 274.2 -20.5 280.9 C-20.5 287.5 -11.1 295.3 -10.8 302.1 C-10.5 308.8 -17.4 318.3 -18.7 321.5 M492.1 171.1 C491.1 169.3 488.2 163.4 485.7 160.2 C483.2 156.9 480.3 154.1 477.0 151.6 C473.7 149.0 467.7 146.0 465.9 144.9 M807.4 337.0 C809.2 333.4 816.4 322.7 818.1 315.2 C819.8 307.6 817.6 299.5 817.6 291.6 C817.6 283.6 818.2 271.5 818.3 267.5 M58.7 506.7 C58.8 504.7 59.5 498.6 59.3 494.7 C59.1 490.7 58.7 486.9 57.5 483.1 C56.3 479.3 53.0 473.8 52.1 471.9 M436.4 474.0 C433.9 475.7 427.0 483.5 421.3 484.4 C415.6 485.4 408.0 479.3 402.1 479.8 C396.2 480.4 388.5 486.5 385.8 487.8 M295.2 244.5 C293.7 244.3 289.1 243.3 286.1 243.2 C283.1 243.1 280.2 243.0 277.2 243.8 C274.3 244.6 270.1 247.3 268.6 248.0 M518.0 16.8 C517.3 18.4 514.7 23.1 513.7 26.5 C512.7 29.8 512.8 33.5 511.8 36.9 C510.9 40.4 508.7 45.4 508.1 47.1 M518.0 16.8 C517.2 15.1 514.3 10.3 513.1 6.8 C511.8 3.4 511.7 -0.5 510.6 -4.1 C509.4 -7.6 506.9 -12.8 506.1 -14.6 M518.0 16.8 C515.1 16.8 506.1 17.1 500.2 16.8 C494.3 16.5 488.5 15.8 482.6 15.0 C476.6 14.3 467.5 12.7 464.5 12.3 M152.7 305.1 C150.8 303.8 145.5 299.2 141.6 297.3 C137.6 295.4 133.2 294.9 128.8 293.9 C124.5 292.9 117.6 291.7 115.4 291.2 M152.7 305.1 C154.0 303.6 157.7 298.7 160.7 296.0 C163.8 293.3 168.1 292.0 171.1 289.1 C174.0 286.2 177.2 280.5 178.4 278.8 M169.1 181.3 C168.8 178.9 165.8 171.4 167.2 167.1 C168.6 162.9 175.7 159.9 177.5 155.6 C179.2 151.3 177.7 143.9 177.8 141.5 M515.6 227.0 C515.0 228.8 513.1 234.1 512.1 237.7 C511.0 241.3 510.7 245.1 509.4 248.7 C508.2 252.3 505.4 257.6 504.6 259.3 M128.5 141.7 C130.1 140.9 136.0 139.5 138.0 136.8 C139.9 134.0 138.4 128.3 140.2 125.4 C141.9 122.4 147.1 120.1 148.5 119.0 M128.5 141.7 C126.6 141.7 120.8 143.1 117.3 141.7 C113.9 140.3 111.5 134.3 108.0 133.1 C104.5 132.0 98.1 134.6 96.2 134.9 M253.8 386.7 C252.0 384.8 247.3 378.0 242.8 375.5 C238.3 373.1 231.3 374.4 226.7 371.9 C222.1 369.4 217.1 362.4 215.2 360.6 M628.5 91.7 C627.2 93.6 623.2 99.4 620.7 103.4 C618.2 107.4 615.0 111.0 613.5 115.4 C612.1 119.9 612.1 127.8 611.8 130.3 M628.5 91.7 C626.7 89.3 621.9 81.6 617.5 77.7 C613.0 73.8 606.1 72.3 601.8 68.2 C597.5 64.0 593.2 55.3 591.5 52.7 M397.1 407.0 C394.3 407.9 386.3 411.8 380.6 412.6 C375.0 413.5 369.0 411.6 363.2 412.0 C357.3 412.4 348.6 414.4 345.7 414.9 M18.1 539.6 C17.0 541.5 14.5 547.6 11.4 550.7 C8.2 553.8 1.8 554.5 -0.8 558.1 C-3.4 561.6 -3.7 569.7 -4.2 572.0 M-14.1 404.8 C-12.1 405.1 -6.1 405.2 -2.3 406.5 C1.5 407.8 4.6 411.3 8.5 412.5 C12.3 413.6 18.8 413.3 20.8 413.4 M460.5 560.4 C462.8 561.3 469.5 564.2 474.2 565.7 C478.9 567.3 484.4 567.2 488.5 569.9 C492.7 572.5 497.3 579.8 499.1 581.8 M197.6 118.7 C197.0 120.3 196.3 126.3 193.6 128.4 C191.0 130.5 184.5 129.2 181.9 131.4 C179.2 133.6 178.5 139.8 177.8 141.5 M0.6 141.1 C1.9 143.1 6.5 148.8 8.6 153.2 C10.6 157.6 10.7 163.0 13.0 167.4 C15.2 171.7 20.8 177.2 22.3 179.2 M0.6 141.1 C0.4 139.5 0.2 134.8 -0.1 131.6 C-0.5 128.4 -1.6 125.3 -1.4 122.1 C-1.1 118.9 0.8 114.0 1.2 112.4 M435.1 42.8 C436.6 41.0 440.3 34.9 443.7 31.7 C447.1 28.5 452.1 26.9 455.5 23.7 C459.0 20.5 463.0 14.2 464.5 12.3 M365.1 520.7 C366.3 518.9 370.0 513.7 372.2 510.0 C374.4 506.4 376.1 502.4 378.3 498.7 C380.6 495.0 384.5 489.6 385.8 487.8 M365.1 520.7 C365.6 522.3 366.9 527.0 368.0 530.2 C369.0 533.3 370.3 536.3 371.3 539.4 C372.2 542.6 373.3 547.7 373.7 549.3 M713.8 -6.3 C716.5 -5.7 724.7 -1.5 730.0 -2.5 C735.4 -3.5 740.3 -11.3 745.7 -12.3 C751.1 -13.2 759.7 -9.0 762.4 -8.4 M713.8 -6.3 C711.0 -6.1 702.6 -5.3 697.0 -4.7 C691.5 -4.1 685.9 -1.7 680.3 -2.5 C674.7 -3.2 666.3 -8.1 663.5 -9.3 M148.5 119.0 C149.8 120.7 152.6 127.0 156.0 129.3 C159.4 131.5 165.3 130.4 168.9 132.5 C172.5 134.5 176.3 140.0 177.8 141.5 M237.5 209.0 C238.4 207.2 242.7 202.3 243.1 198.3 C243.4 194.3 239.0 189.0 239.7 185.0 C240.4 181.0 246.0 176.2 247.3 174.4 M237.5 209.0 C236.9 206.9 236.6 200.0 234.1 196.5 C231.7 193.0 225.1 191.6 222.8 187.9 C220.6 184.3 220.9 176.7 220.6 174.5 M343.6 819.4 C343.6 816.1 343.0 806.1 343.4 799.6 C343.9 793.0 345.1 786.7 346.3 780.1 C347.6 773.5 350.0 763.5 350.7 760.2 M247.3 174.4 C245.8 174.4 241.4 174.5 238.5 174.1 C235.5 173.8 232.6 172.2 229.7 172.3 C226.7 172.3 222.1 174.1 220.6 174.5 M778.1 815.8 C773.6 813.8 760.1 805.6 750.8 803.9 C741.4 802.2 731.9 804.8 722.2 805.5 C712.5 806.3 697.6 807.9 692.7 808.3 M203.9 551.2 C202.5 552.5 198.7 556.5 196.0 559.0 C193.2 561.6 189.5 563.2 187.3 566.3 C185.2 569.3 183.8 575.6 183.1 577.4 M584.9 156.0 C586.3 154.4 590.2 149.6 593.0 146.7 C595.8 143.7 598.6 140.7 601.7 138.0 C604.8 135.3 610.1 131.6 611.8 130.3 M317.5 338.7 C315.2 339.7 308.5 344.3 303.8 344.6 C299.1 345.0 294.2 341.2 289.4 340.8 C284.5 340.3 277.3 341.8 274.9 342.0 M175.8 355.6 C177.9 356.4 183.9 360.5 188.4 360.3 C192.8 360.1 197.9 354.4 202.3 354.5 C206.8 354.5 213.0 359.5 215.2 360.6 M31.0 -8.6 C33.5 -8.9 41.1 -10.3 46.2 -10.8 C51.3 -11.3 56.5 -10.7 61.6 -11.7 C66.7 -12.6 74.3 -15.5 76.9 -16.3 M31.0 -8.6 C33.4 -7.5 40.4 -4.0 45.3 -2.0 C50.1 -0.1 55.6 0.5 60.3 3.0 C64.9 5.5 71.1 11.3 73.3 13.0 M374.1 271.4 C374.6 274.1 375.1 282.5 377.0 287.2 C379.0 291.9 382.8 295.5 386.1 299.5 C389.3 303.6 394.8 309.6 396.6 311.6 M25.7 762.0 C24.0 762.4 18.8 764.4 15.5 764.3 C12.2 764.2 9.2 762.4 6.0 761.4 C2.7 760.4 -2.3 758.9 -3.9 758.4 M25.7 762.0 C24.1 764.8 19.2 773.1 16.1 778.7 C13.1 784.4 10.9 790.4 7.5 796.0 C4.2 801.6 -1.8 809.7 -3.7 812.4 M25.7 762.0 C23.2 763.1 14.9 765.4 10.3 768.5 C5.7 771.7 2.8 777.6 -1.9 780.8 C-6.5 783.9 -15.2 786.3 -17.8 787.5 M636.6 707.0 C637.0 709.0 638.5 714.9 639.0 718.9 C639.4 722.8 639.7 726.7 639.3 730.7 C638.8 734.8 637.0 740.9 636.6 743.0 M-3.9 758.4 C-3.7 761.4 -1.8 770.3 -2.6 776.2 C-3.4 782.2 -8.6 788.0 -8.8 794.1 C-9.0 800.1 -4.5 809.4 -3.7 812.4 M-3.9 758.4 C-4.7 760.0 -7.5 764.5 -8.7 767.9 C-9.9 771.3 -9.4 775.3 -11.0 778.6 C-12.5 781.9 -16.7 786.0 -17.8 787.5 M400.8 13.9 C399.5 13.2 395.7 10.9 393.0 9.9 C390.2 8.8 386.9 9.0 384.3 7.5 C381.7 6.0 378.6 2.2 377.5 1.1 M400.8 13.9 C400.3 16.0 399.6 22.6 397.6 26.2 C395.6 29.8 391.3 32.1 388.9 35.5 C386.6 39.0 384.4 45.1 383.5 47.0 M527.8 555.8 C525.8 556.7 519.2 559.0 515.7 561.5 C512.2 563.9 509.4 567.1 506.6 570.5 C503.8 573.8 500.3 579.9 499.1 581.8 M527.8 555.8 C529.0 558.0 532.1 565.1 535.1 568.8 C538.1 572.6 541.7 575.5 545.8 578.1 C549.9 580.7 557.4 583.3 559.7 584.4 M22.3 179.2 C24.7 178.7 31.9 177.1 36.7 176.0 C41.5 174.9 46.2 172.3 51.1 172.5 C56.1 172.6 63.8 176.4 66.4 177.1 M692.7 808.3 C688.6 807.2 676.2 802.4 667.9 801.4 C659.7 800.3 651.7 800.4 643.4 801.9 C635.1 803.4 622.5 808.9 618.3 810.3 M692.7 808.3 C690.9 808.7 685.5 810.5 682.0 810.6 C678.5 810.6 675.2 809.6 671.7 808.7 C668.3 807.8 663.1 805.8 661.3 805.2 M226.5 283.2 C224.9 282.4 219.3 280.7 216.7 278.2 C214.0 275.7 213.4 270.6 210.6 268.2 C207.9 265.7 201.9 264.3 200.2 263.5 M350.7 760.2 C349.0 759.8 343.6 758.9 340.2 758.0 C336.7 757.1 333.1 756.5 330.0 754.8 C326.8 753.1 322.5 749.0 321.0 747.8 M76.9 -16.3 C76.1 -14.8 72.1 -10.3 72.2 -7.1 C72.2 -3.8 76.9 -0.0 77.1 3.3 C77.3 6.7 73.9 11.4 73.3 13.0 M200.2 263.5 C198.8 264.1 194.5 265.5 191.8 266.8 C189.1 268.1 186.3 269.1 184.0 271.1 C181.8 273.0 179.4 277.5 178.4 278.8 M377.5 1.1 C378.0 3.6 379.6 11.1 380.5 16.1 C381.5 21.1 382.6 26.0 383.1 31.2 C383.6 36.3 383.4 44.4 383.5 47.0 M504.6 259.3 C506.8 260.6 514.3 263.7 517.7 267.1 C521.1 270.6 522.2 276.0 524.9 280.2 C527.6 284.4 532.4 290.2 533.9 292.2 M321.0 747.8 C318.3 748.3 309.8 748.1 305.1 750.5 C300.4 752.9 297.5 759.8 292.7 762.2 C287.9 764.6 279.0 764.6 276.3 765.0 M373.7 549.3 C375.4 549.7 381.3 549.5 384.3 551.3 C387.3 553.1 388.6 558.1 391.5 560.2 C394.4 562.2 400.0 563.0 401.7 563.6 M-3.7 812.4 C-4.2 810.9 -4.6 805.7 -6.5 803.1 C-8.4 800.6 -13.0 799.6 -14.9 797.0 C-16.7 794.4 -17.3 789.0 -17.8 787.5 M66.4 177.1 C68.4 175.1 75.3 169.5 78.4 164.8 C81.6 160.0 82.2 153.6 85.2 148.6 C88.1 143.7 94.3 137.2 96.2 134.9 M110.7 53.3 C112.1 54.1 116.3 56.5 119.1 58.2 C121.9 59.8 124.7 61.3 127.3 63.2 C130.0 65.1 133.8 68.5 135.0 69.6 M618.3 810.3 C618.0 808.7 615.6 804.0 616.1 800.9 C616.6 797.7 621.3 794.5 621.5 791.2 C621.8 788.0 618.4 783.2 617.7 781.6 M618.3 810.3 C620.7 810.2 627.9 810.2 632.7 809.9 C637.4 809.6 642.1 809.4 646.9 808.6 C651.7 807.8 658.9 805.8 661.3 805.2 M621.5 -6.5 C618.8 -3.7 609.0 3.6 605.3 9.9 C601.6 16.2 601.5 24.1 599.2 31.3 C596.9 38.4 592.8 49.1 591.5 52.7 M621.5 -6.5 C623.7 -7.4 630.4 -11.4 635.0 -12.2 C639.6 -13.0 644.3 -11.8 649.0 -11.3 C653.8 -10.8 661.1 -9.6 663.5 -9.3 M170.3 745.4 C170.6 743.7 170.8 738.5 171.6 735.3 C172.4 732.1 173.4 729.1 175.3 726.3 C177.1 723.5 181.5 720.0 182.7 718.7 M264.4 563.5 C264.4 561.4 263.2 554.7 264.8 551.1 C266.4 547.4 271.9 545.2 273.8 541.7 C275.7 538.1 275.8 531.6 276.2 529.6 M23.6 467.1 C25.2 467.6 29.7 469.4 32.9 469.7 C36.0 470.1 39.4 468.8 42.6 469.1 C45.8 469.5 50.5 471.4 52.1 471.9 M23.6 467.1 C21.7 465.6 16.5 458.5 11.7 457.8 C6.9 457.0 -0.3 463.4 -5.1 462.6 C-10.0 461.8 -15.4 454.5 -17.4 452.9 M506.1 -14.6 C504.6 -14.8 499.9 -15.1 496.9 -16.2 C494.0 -17.3 491.5 -20.7 488.4 -21.2 C485.2 -21.8 480.0 -19.8 478.3 -19.5 M506.1 -14.6 C503.4 -13.8 494.5 -12.5 489.5 -10.1 C484.5 -7.8 480.4 -4.4 476.2 -0.6 C472.0 3.1 466.4 10.1 464.5 12.3 M178.4 278.8 C177.6 276.4 175.6 269.1 173.8 264.4 C171.9 259.8 169.8 255.4 167.3 251.0 C164.8 246.6 160.1 240.2 158.7 238.1 M617.7 781.6 C619.3 779.7 626.0 775.1 627.4 770.5 C628.8 765.9 624.6 758.7 626.1 754.1 C627.6 749.5 634.8 744.8 636.6 743.0 M478.3 -19.5 C477.6 -17.7 475.5 -12.4 474.1 -8.8 C472.7 -5.3 471.5 -1.7 469.9 1.8 C468.3 5.3 465.4 10.5 464.5 12.3"/></defs><g fill="none" stroke-linecap="round"><use href="#mr" stroke="#cdc9c0" stroke-width="2.500"/><use href="#mr" stroke="#fff" stroke-width="1.400"/></g><path d="M423.8 427.0 l5.1 1.6 M399.5 403.1 l8.6 2.3 M424.9 332.5 l-2.5 8.2 M416.2 369.8 l-3.0 9.8 M411.8 383.9 l-0.4 4.0 M435.2 346.3 l8.9 2.3 M356.9 385.9 l9.8 3.0 M357.6 404.7 l6.1 1.9 M380.2 395.5 l8.1 2.5 M400.1 338.7 l-0.6 10.3 M428.2 344.2 l7.2 2.2 M407.9 412.5 l-4.4 8.4 M356.3 375.5 l-2.1 6.7 M382.5 417.3 l-0.2 6.6 M363.2 383.5 l-1.6 5.1 M360.6 353.3 l0.5 6.9 M366.5 433.0 l8.3 2.6 M436.2 361.9 l6.9 2.1 M384.1 432.6 l-4.4 6.8 M401.2 351.4 l-2.4 3.4 M431.4 414.8 l-2.2 10.3 M344.3 423.1 l5.9 3.6 M458.5 368.3 l-1.9 6.2 M461.3 395.1 l3.6 2.6 M440.0 403.7 l7.6 2.4 M427.4 364.7 l8.3 2.5 M366.1 392.2 l-0.1 4.0 M379.9 449.9 l7.1 2.2 M410.2 434.8 l-3.3 9.1 M398.8 349.4 l7.3 5.6 M419.7 355.8 l-2.1 6.8 M407.8 346.5 l-1.5 7.2 M412.8 452.2 l-1.6 6.1 M409.1 370.6 l1.0 10.4 M423.8 399.0 l7.0 2.2 M426.2 410.8 l-4.4 9.1 M357.6 403.4 l8.2 2.1 M388.6 372.8 l6.5 2.0 M425.1 378.8 l5.1 1.6 M407.3 346.4 l8.2 1.8 M446.4 424.0 l-3.3 7.1 M383.6 381.0 l9.6 3.0 M439.2 334.3 l-2.4 7.9 M354.6 417.9 l-0.0 9.9 M460.9 342.1 l-2.8 9.0 M378.2 365.0 l7.0 3.5 M390.5 364.5 l-2.3 9.9 M402.8 331.8 l5.3 3.7 M375.6 454.6 l-2.0 8.3 M420.7 404.8 l10.2 3.2 M473.3 375.4 l-1.8 5.7 M390.4 374.8 l9.1 2.8 M410.9 460.7 l4.2 1.3 M444.0 405.0 l8.0 1.0 M416.6 372.7 l-2.6 8.5 M438.3 355.9 l-2.7 8.7 M345.2 399.1 l-0.2 7.1 M339.0 411.3 l-4.1 10.1 M408.6 435.2 l10.0 3.1 M437.3 391.4 l-1.9 6.1 M344.4 368.3 l6.4 3.6 M447.3 368.8 l6.8 2.1 M342.9 385.8 l7.8 1.7 M357.4 379.9 l4.3 1.3 M434.2 327.8 l4.2 1.3 M409.4 447.3 l9.5 2.9 M403.2 336.7 l-2.6 8.3 M417.9 464.9 l-1.3 4.4 M426.1 347.2 l-1.0 4.1 M392.0 339.7 l-2.4 7.9 M378.0 377.8 l-3.0 10.4 M357.2 378.2 l-2.3 7.4 M394.6 383.7 l9.5 3.0 M409.1 381.2 l4.1 2.3 M446.0 400.6 l-2.7 8.7 M430.8 364.6 l-2.7 9.0 M394.6 372.7 l-2.0 6.4 M444.8 402.3 l4.7 1.5 M360.2 407.0 l7.4 2.1 M377.6 447.0 l10.7 2.0 M402.4 445.3 l7.7 2.4 M343.2 362.1 l-2.5 8.3 M460.7 362.5 l-3.2 10.5 M428.1 441.3 l0.8 8.6 M368.6 416.1 l7.0 2.2 M390.7 386.8 l4.5 1.4 M382.2 408.6 l-2.4 7.7 M445.8 364.7 l5.3 4.2 M395.0 369.8 l-1.5 4.9 M411.5 426.6 l10.4 3.2 M426.3 436.2 l8.4 2.6 M350.4 362.5 l9.0 2.8 M379.8 365.2 l-3.0 9.6 M365.8 433.0 l4.7 1.5 M332.5 389.3 l-1.6 5.3 M410.6 332.0 l8.1 1.4 M434.0 425.2 l10.2 3.2 M369.7 433.6 l-1.6 5.3 M384.7 434.2 l-1.7 5.6 M414.2 418.5 l0.9 9.3 M377.3 363.8 l-3.0 9.7 M414.5 462.0 l8.7 0.2 M389.1 459.5 l-1.9 6.1 M393.4 450.8 l-2.7 3.7 M394.7 354.9 l4.3 1.3 M375.5 340.1 l7.5 1.6 M436.4 428.7 l-2.0 6.3 M443.3 423.8 l-5.4 7.7 M444.6 348.7 l-4.3 7.3 M381.0 438.0 l-1.4 4.4 M443.3 374.5 l7.2 2.2 M361.2 383.1 l-2.2 7.3 M470.3 383.3 l9.7 4.1 M407.7 431.5 l9.7 0.9 M452.0 401.8 l-0.7 10.5 M415.0 462.7 l-1.4 4.5 M456.9 363.3 l0.5 6.8 M435.4 423.0 l5.8 1.8 M402.7 375.0 l-1.4 4.4 M390.8 426.5 l-1.5 4.0 M385.9 414.1 l-4.6 7.2 M430.7 387.7 l8.0 2.5 M395.9 408.2 l-2.6 8.5 M419.9 419.4 l6.1 1.9 M430.6 343.6 l-5.4 8.6 M388.0 329.7 l-2.6 8.6 M396.8 340.9 l-2.6 8.5 M339.9 426.1 l7.2 2.2 M356.4 403.8 l-2.0 5.9 M357.4 436.3 l6.5 1.4 M383.9 357.5 l4.4 2.0 M389.5 427.1 l-2.1 6.4 M462.7 392.2 l-2.8 9.2 M383.9 426.9 l-2.6 8.3 M336.1 412.8 l-1.1 5.2 M385.4 440.8 l-2.7 8.9 M359.6 354.2 l8.6 6.0 M396.4 390.5 l-2.5 8.1 M343.2 384.9 l-3.2 10.5 M476.8 386.2 l-2.9 4.2 M462.2 343.5 l-2.9 9.4 M406.2 360.1 l-2.4 7.7 M347.0 369.0 l-2.7 8.4 M389.1 438.1 l5.6 1.7 M365.3 387.9 l-3.0 9.8 M436.0 372.8 l5.3 1.5 M422.7 429.4 l-2.5 8.1 M366.4 445.5 l4.4 1.4 M331.9 398.5 l8.9 2.7 M393.8 434.5 l-1.2 3.8 M387.3 383.1 l-2.9 9.3 M419.6 359.7 l4.7 -0.1 M348.1 359.7 l7.0 -0.4 M403.7 380.5 l-2.5 8.0 M424.8 352.9 l6.5 2.0 M432.4 412.5 l8.6 2.7 M442.9 410.5 l6.9 2.1 M400.3 391.0 l-1.2 5.4 M384.0 430.4 l4.7 2.1 M404.4 365.8 l-4.5 7.5 M404.0 421.8 l-3.8 4.7 M470.4 392.9 l-1.4 4.7 M339.7 382.9 l-0.0 5.0 M383.2 417.4 l4.3 1.3 M356.5 442.0 l-1.7 5.5 M375.6 433.8 l6.2 3.5 M371.1 337.3 l6.7 2.9 M372.4 415.5 l5.1 1.6 M371.6 347.7 l-1.1 4.6 M427.8 386.4 l-2.7 8.8 M440.9 342.5 l7.3 2.3 M367.2 366.8 l-2.1 6.9 M420.7 437.9 l-2.3 7.5 M458.0 409.7 l-0.5 8.8 M390.6 416.9 l8.4 2.6 M403.1 443.6 l4.1 1.3 M427.8 365.7 l-0.2 7.8 M409.2 450.1 l-2.2 3.9 M393.2 374.8 l-3.9 5.7 M411.1 377.9 l5.3 2.2 M335.1 378.0 l10.5 3.2 M451.8 397.3 l-3.1 10.1 M405.2 328.4 l-1.1 10.1 M351.8 360.0 l6.9 2.1 M405.1 441.2 l7.1 2.2 M460.4 371.9 l-2.5 8.0 M449.0 408.6 l7.8 0.9 M463.7 381.5 l5.5 1.7 M344.4 380.2 l-1.9 6.1 M392.8 343.9 l-1.5 4.9 M386.9 392.5 l-3.9 9.4 M392.8 369.8 l9.3 2.9 M450.1 367.0 l-2.4 7.7 M413.4 441.9 l9.7 3.0 M216.4 147.0 l-2.3 7.5 M244.6 119.0 l7.7 2.4 M224.2 135.7 l-2.0 6.6 M203.6 146.2 l9.0 1.4 M206.7 131.3 l9.5 2.9 M233.6 157.4 l8.7 4.2 M241.2 122.9 l4.7 1.4 M245.0 140.9 l4.5 1.0 M237.3 136.6 l-2.3 6.0 M241.6 112.3 l-3.1 10.2 M214.0 118.6 l4.6 1.4 M212.9 138.2 l9.1 2.8 M242.3 134.1 l7.5 -0.2 M227.7 155.6 l9.4 0.2 M216.0 136.8 l7.9 2.5 M219.8 139.6 l-1.4 4.6 M215.2 118.6 l9.8 1.8 M199.3 137.3 l8.3 2.6 M235.8 137.1 l4.1 1.3 M227.8 151.3 l10.2 3.2 M222.7 146.4 l-2.4 7.8 M238.3 150.4 l5.2 1.6 M223.8 139.6 l9.2 2.8 M216.1 118.2 l-1.9 6.0 M210.1 134.0 l4.1 2.0 M236.1 128.3 l-1.3 4.1 M251.9 148.5 l8.4 -0.6 M221.0 155.9 l-5.2 6.6 M227.3 155.5 l-2.2 7.3 M204.6 138.2 l-1.4 4.6 M239.2 117.3 l-0.1 4.3 M217.4 156.6 l-1.3 10.2 M253.8 139.8 l-0.3 7.9 M210.2 128.9 l-2.3 7.6 M209.6 154.2 l-2.8 8.9 M215.7 140.9 l-1.4 4.6 M233.9 113.0 l7.8 2.1 M219.4 141.0 l-3.1 10.0 M222.7 144.1 l4.6 3.3 M251.0 124.8 l-1.8 6.0 M346.5 68.7 l8.7 2.7 M353.5 83.6 l6.9 2.1 M355.9 57.6 l8.4 5.5 M366.7 69.4 l-3.1 8.2 M319.2 71.5 l0.5 9.3 M326.6 77.1 l4.3 1.3 M361.0 76.5 l7.5 0.4 M332.4 57.3 l-2.2 7.0 M372.1 57.3 l-1.8 5.7 M322.1 49.2 l-2.6 8.4 M342.0 84.9 l-1.1 8.4 M339.0 69.6 l-1.7 8.0 M355.1 46.6 l4.7 1.5 M337.5 53.4 l6.4 2.0 M331.0 51.0 l-2.1 6.9 M345.8 40.4 l5.4 1.2 M336.7 55.3 l-3.1 10.1 M321.9 67.0 l10.3 0.3 M339.5 74.9 l-5.7 7.8 M337.2 57.9 l-2.7 4.2 M360.6 71.9 l-1.7 5.6 M354.9 82.4 l-1.8 6.0 M370.9 67.0 l4.6 1.4 M336.2 81.3 l6.5 2.0 M333.9 76.1 l4.8 3.6 M365.2 78.8 l8.4 0.6 M362.2 54.6 l7.8 0.0 M348.0 45.6 l-6.0 9.1 M363.0 67.4 l0.4 7.3 M330.8 54.9 l4.5 1.4 M334.1 44.8 l10.1 2.5 M350.4 82.3 l-2.2 7.3 M355.5 66.9 l9.6 3.7 M339.6 42.9 l-3.5 7.5 M344.0 69.2 l5.8 1.8 M348.5 77.0 l6.7 5.5 M350.1 48.9 l-2.2 9.3 M327.8 55.9 l-1.4 4.6 M362.1 43.3 l-1.2 4.0 M323.9 68.7 l-3.0 9.7 M434.5 686.5 l-2.5 8.1 M450.7 685.1 l5.8 1.8 M424.1 681.0 l-2.0 6.6 M481.2 677.0 l0.3 9.0 M423.3 665.0 l-3.0 9.9 M444.2 690.4 l0.2 5.7 M450.5 669.9 l8.8 2.7 M458.1 697.2 l6.7 2.1 M480.1 666.7 l7.3 2.2 M427.1 660.7 l5.8 1.8 M463.7 663.3 l-1.4 6.4 M476.7 674.4 l-2.3 7.5 M466.2 652.3 l8.5 3.5 M465.4 655.4 l-1.4 4.4 M457.7 665.6 l7.4 -0.2 M449.8 663.7 l-1.8 9.7 M469.3 683.8 l-1.6 3.7 M436.6 680.5 l5.8 1.8 M430.4 669.0 l9.6 3.0 M461.5 690.7 l7.4 4.8 M424.7 678.5 l10.7 0.9 M454.7 686.2 l3.3 2.7 M432.6 685.6 l9.6 3.0 M470.9 662.3 l4.3 1.3 M425.9 669.4 l-1.6 4.6 M436.3 698.8 l9.0 2.8 M431.8 661.3 l-3.0 9.7 M418.8 672.3 l6.3 0.2 M471.3 669.4 l9.8 3.4 M460.5 697.4 l-0.4 5.1 M478.7 671.3 l-1.4 4.7 M450.8 667.4 l4.1 1.3 M441.5 648.4 l-2.5 5.1 M419.1 682.5 l-1.8 5.7 M462.0 673.9 l-2.3 7.3 M456.1 667.4 l-2.4 7.9 M441.4 693.0 l-2.3 7.6 M433.0 698.5 l-1.2 4.0 M443.7 698.1 l-2.9 9.3 M460.4 685.5 l9.0 0.3 M442.6 687.6 l5.2 0.4 M420.1 664.6 l4.8 0.1 M437.6 693.7 l0.4 5.1 M460.6 678.7 l7.3 2.2 M446.7 697.7 l-1.5 4.9 M434.6 675.6 l-2.4 7.7 M434.5 693.4 l5.7 1.8 M475.9 671.1 l4.8 -0.1 M442.8 667.8 l4.5 1.4 M441.1 688.7 l7.8 0.8 M497.2 282.9 l4.3 1.6 M523.9 294.3 l4.7 2.3 M520.7 300.5 l9.0 4.0 M488.5 318.3 l-2.4 7.7 M470.1 299.9 l7.7 2.4 M507.9 289.0 l5.0 1.5 M485.3 293.8 l0.6 6.4 M509.1 301.3 l-1.5 4.7 M507.2 286.4 l-5.5 8.2 M468.1 310.4 l8.1 0.5 M510.4 281.6 l7.4 2.3 M479.6 278.9 l4.4 1.3 M514.6 296.2 l9.9 3.1 M487.5 315.4 l5.5 1.7 M520.6 293.1 l5.3 0.3 M508.6 298.9 l-0.9 7.5 M464.1 298.7 l-1.3 4.2 M468.4 312.4 l-3.1 9.9 M480.2 300.8 l-1.2 5.0 M521.1 297.0 l-1.4 4.5 M471.9 295.6 l5.0 0.4 M503.2 291.5 l-1.8 6.5 M479.6 306.7 l-0.4 5.3 M487.8 313.1 l5.4 3.1 M500.9 290.0 l-4.4 8.0 M511.8 281.1 l7.6 2.4 M491.4 287.6 l5.9 1.8 M470.5 315.5 l-4.5 7.5 M479.4 284.0 l10.4 3.2 M501.6 275.9 l3.9 2.1 M491.2 321.3 l-2.5 8.1 M511.1 286.5 l7.7 2.4 M494.1 312.9 l3.7 2.4 M514.3 288.8 l-2.4 3.4 M473.9 313.7 l8.0 1.3 M317.2 414.3 l-3.2 10.4 M285.6 407.7 l-3.0 9.6 M297.2 405.0 l9.6 3.0 M311.8 407.0 l-2.0 6.4 M307.2 428.0 l4.1 2.4 M316.0 423.8 l-1.8 5.9 M310.6 410.1 l3.8 1.5 M299.6 422.0 l10.3 0.7 M297.7 396.1 l7.1 3.4 M301.9 394.4 l4.6 1.4 M274.9 404.8 l5.8 4.9 M290.0 396.0 l3.1 2.5 M323.7 417.1 l-3.2 10.5 M326.1 409.3 l5.2 1.6 M310.3 427.0 l4.4 2.4 M319.9 421.6 l6.2 0.1 M306.1 423.7 l-1.9 6.2 M284.4 404.5 l8.1 3.0 M280.9 419.0 l-1.5 5.0 M300.8 408.9 l8.1 2.5 M302.5 424.3 l4.2 2.3 M291.5 399.9 l10.1 3.1 M313.9 419.7 l-1.5 4.9 M311.6 429.1 l7.9 2.4 M276.6 411.9 l8.0 4.3 M306.1 421.2 l6.2 1.9 M314.7 416.7 l-5.5 7.7 M322.2 403.1 l-2.7 8.7 M275.2 416.3 l-2.9 9.3 M311.1 405.4 l9.7 3.0 M138.3 11.4 l-1.5 4.9 M90.7 22.6 l-0.6 4.5 M96.7 -10.0 l-2.9 9.4 M133.5 13.8 l-2.6 8.4 M111.8 -2.9 l6.0 1.9 M111.0 36.7 l-3.3 7.8 M116.0 25.4 l-3.2 10.3 M105.4 -6.9 l-2.3 7.4 M148.7 9.8 l-1.3 4.2 M126.0 -5.8 l6.8 5.0 M116.8 12.4 l5.3 1.6 M107.9 -15.9 l9.8 3.0 M110.1 -12.7 l-4.5 6.3 M115.0 -14.3 l6.6 -0.4 M110.7 -9.9 l-3.8 7.8 M131.4 5.3 l4.8 1.5 M133.5 -10.1 l-3.2 10.3 M152.1 22.9 l-0.6 4.6 M115.0 11.8 l-2.9 9.3 M128.4 37.1 l-3.8 6.8 M125.7 -8.0 l3.8 1.5 M92.1 15.9 l-3.0 9.6 M112.0 -10.4 l4.3 1.3 M118.6 13.4 l4.7 1.5 M114.1 9.0 l-2.7 8.6 M130.9 -12.0 l-2.8 9.0 M111.2 12.5 l-2.2 7.1 M117.9 -5.8 l4.2 1.3 M132.2 -14.1 l4.2 0.5 M117.7 37.0 l7.9 3.0 M130.3 27.4 l8.7 4.9 M103.5 15.2 l-1.8 5.8 M134.7 7.0 l5.8 1.8 M112.3 14.8 l-2.6 8.6 M142.9 13.4 l4.3 1.3 M148.7 500.4 l-2.6 8.3 M170.4 487.0 l0.7 7.3 M127.7 472.8 l10.4 3.2 M170.9 482.9 l3.9 1.2 M169.1 498.0 l-3.2 10.2 M150.6 506.6 l-3.0 9.7 M174.0 466.6 l7.0 2.2 M177.7 469.8 l-4.8 6.9 M155.9 497.5 l9.5 -1.0 M153.3 499.8 l3.9 1.2 M163.6 460.8 l-1.7 8.3 M177.8 485.9 l7.5 2.3 M142.2 478.3 l-2.1 6.7 M145.8 463.0 l4.0 1.2 M180.0 481.9 l-1.1 8.7 M130.2 474.9 l-0.1 5.4 M145.5 465.0 l-3.0 9.8 M166.8 496.2 l-3.6 7.8 M175.7 490.7 l-1.7 5.4 M147.5 496.9 l10.5 2.3 M148.7 484.5 l5.2 1.3 M189.6 478.7 l7.6 1.7 M138.5 502.8 l-1.8 5.3 M135.8 493.6 l7.7 1.2 M174.2 479.0 l10.2 3.1 M152.6 511.0 l-2.1 6.8 M172.1 495.2 l-1.9 6.3 M187.7 483.9 l5.6 -0.3 M127.1 478.8 l3.9 1.2 M135.4 472.2 l-1.6 5.0 M337.2 518.3 l-1.3 4.2 M351.3 510.6 l6.9 1.3 M347.9 504.6 l4.3 0.8 M330.6 497.7 l9.6 3.0 M313.7 497.9 l7.1 0.7 M321.0 489.4 l-2.7 4.6 M349.5 513.3 l6.8 2.1 M327.1 483.1 l7.7 2.4 M348.1 484.0 l7.6 2.3 M349.5 499.9 l6.1 3.9 M304.5 500.0 l10.1 3.1 M335.5 508.2 l0.0 4.9 M324.7 512.1 l0.8 10.9 M333.8 517.7 l6.6 2.0 M346.6 498.4 l6.1 1.5 M325.6 509.4 l6.8 4.0 M341.5 512.9 l8.1 2.5 M317.5 490.7 l-1.7 9.3 M339.3 515.0 l7.2 2.2 M328.9 521.5 l-0.4 7.8 M332.2 490.7 l8.8 2.7 M325.0 494.7 l8.6 2.7 M318.6 496.7 l-0.2 4.7 M320.1 520.2 l5.1 2.3 M339.8 499.4 l-5.8 7.6 M337.2 513.2 l0.6 6.0 M355.0 502.6 l9.1 2.8 M349.9 496.8 l4.9 2.9 M339.6 485.7 l7.6 2.3 M321.6 517.4 l5.1 -0.3 M444.3 549.7 l-1.0 10.8 M450.8 552.3 l-2.8 9.1 M442.3 554.0 l3.2 2.7 M442.5 553.7 l6.0 1.9 M475.2 561.7 l7.7 2.4 M460.4 541.4 l-0.4 6.4 M450.7 553.4 l8.3 2.6 M478.3 575.4 l6.6 1.4 M441.5 570.8 l10.2 -0.6 M436.2 548.5 l-4.6 7.1 M459.5 583.4 l-0.4 4.5 M461.5 576.4 l-3.1 10.1 M446.9 546.6 l6.9 2.1 M473.1 576.8 l5.0 1.6 M439.9 557.0 l-1.5 5.0 M465.4 559.0 l-1.3 4.2 M452.1 539.8 l-2.3 7.4 M443.4 579.3 l8.9 2.7 M454.1 558.6 l-2.9 5.6 M473.4 540.8 l6.4 2.0 M453.5 582.7 l8.3 2.6 M453.2 540.7 l5.8 1.8 M486.9 562.3 l-1.4 4.6 M434.7 550.7 l-1.4 4.6 M471.1 551.6 l-1.5 3.8 M441.7 555.1 l-1.4 5.2 M473.5 562.7 l-2.0 6.6 M482.6 551.3 l7.4 2.3 M451.0 578.0 l5.9 1.8 M437.3 566.2 l-3.2 10.4 M91.9 746.0 l8.4 2.6 M74.9 758.0 l-5.8 8.1 M106.0 751.4 l-2.4 7.9 M85.5 740.2 l-4.5 8.4 M80.2 759.2 l8.1 5.6 M106.9 764.5 l-2.6 8.6 M87.2 749.6 l7.6 2.3 M79.7 768.6 l4.1 3.4 M73.9 770.9 l8.0 0.6 M99.1 747.1 l9.4 2.9 M92.0 754.8 l-0.8 4.6 M83.7 751.5 l-1.3 4.3 M91.7 750.4 l-4.6 6.2 M98.2 752.0 l-5.0 6.8 M78.3 757.4 l3.9 1.2 M93.0 747.9 l-1.8 5.9 M102.4 769.3 l-1.9 10.4 M102.3 772.7 l-4.4 8.1 M79.3 757.1 l-2.9 9.4 M108.3 769.8 l-3.0 9.6 M72.3 747.8 l-1.3 4.1 M92.2 747.6 l-1.4 4.6 M106.8 747.6 l-2.7 8.9 M80.3 759.2 l5.3 -0.2 M103.5 761.5 l5.4 0.5 M496.8 244.3 l8.5 2.6 M498.3 252.8 l-3.2 5.0 M494.6 252.2 l9.1 2.8 M499.3 257.0 l8.8 5.1 M506.2 262.3 l5.4 1.7 M510.7 233.4 l-4.0 8.1 M499.0 246.3 l10.3 0.3 M524.8 264.0 l5.1 2.4 M529.7 244.1 l-1.7 5.4 M531.2 247.5 l-2.9 9.4 M501.3 237.7 l6.6 2.0 M527.6 261.9 l9.6 3.0 M530.0 254.4 l4.7 1.5 M496.1 250.0 l5.7 3.4 M532.1 247.5 l5.8 1.8 M518.9 228.2 l-2.2 5.0 M511.8 255.0 l-1.2 4.0 M495.8 256.7 l5.3 0.7 M526.1 270.6 l3.9 2.7 M505.5 255.7 l6.0 1.9 M494.9 244.3 l-1.9 4.2 M523.3 248.9 l-1.7 8.5 M540.3 242.3 l-2.4 7.7 M522.2 234.0 l8.4 1.0 M513.2 253.5 l8.3 2.2" fill="none" stroke="#fff" stroke-width=".9" stroke-opacity=".9"/>
<path d="M595.4 0.0 L594.8 5.3 L593.5 15.8 L589.6 26.4 L592.2 34.3 L593.5 44.8 L600.1 52.7 L602.7 62.0 L609.3 69.1 L615.9 71.2 L629.1 76.5 L642.3 84.4 L651.5 93.6 L657.3 101.5 L654.2 103.4 L644.9 98.1 L637.0 99.7 L629.1 105.5 L625.2 110.8 L629.1 116.0 L639.7 117.4 L650.2 119.2 L656.8 122.6 L660.8 116.0 L664.7 107.6 L673.9 110.2 L681.9 112.1 L689.8 108.1 L694.5 105.5 L697.7 104.2 L701.6 97.6 L705.6 89.7 L710.9 83.1 L718.8 78.6 L729.3 75.2 L734.6 77.8 L738.6 81.8 L743.8 89.7 L747.8 97.6 L754.4 105.5 L759.7 110.8 L761.0 117.4 L757.0 121.3 L754.4 129.2 L750.4 131.9 L751.7 137.1 L746.5 142.4 L739.9 145.0 L734.6 149.0 L727.2 154.3 L721.9 160.9 L719.3 168.8 L717.2 176.7 L714.3 182.8 L709.0 182.8 L705.6 177.2 L707.4 170.1 L709.3 163.5 L708.2 157.7 L702.4 155.6 L696.6 158.2 L694.0 163.5 L691.9 170.9 L685.8 176.7 L679.2 182.0 L671.3 182.5 L666.0 187.2 L660.8 192.5 L655.5 195.1 L647.6 196.5 L639.7 197.8 L631.8 200.4 L626.5 204.4 L621.2 205.7 L613.3 205.7 L608.5 207.8 L600.3 203.2 L587.1 210.5 L576.6 214.5 L566.0 218.5 L558.1 221.6 L554.2 226.4 L556.8 231.6 L554.2 238.2 L548.9 241.7 L544.4 247.5 L542.3 252.7 L547.0 257.0 L552.8 255.4 L556.0 250.1 L560.8 246.1 L568.7 244.8 L573.9 248.8 L574.5 255.4 L579.2 265.9 L581.1 272.5 L577.1 276.5 L571.3 275.2 L566.0 276.5 L560.8 279.1 L555.0 284.4 L550.7 289.7 L547.6 294.9 L542.8 300.2 L537.0 302.8 L529.1 301.8 L521.2 302.8 L515.9 304.2 L510.7 305.5 L506.7 306.8 L502.7 310.8 L496.1 316.0 L489.6 323.9 L481.6 331.9 L476.4 338.4 L469.8 346.4 L464.5 354.3 L463.2 360.9 L467.1 368.8 L472.4 374.1 L476.4 379.3 L480.3 389.9 L481.6 396.5 L476.4 398.3 L468.5 395.7 L461.9 397.0 L460.5 403.1 L465.8 408.3 L463.2 414.1 L455.3 415.2 L450.0 414.1 L452.7 414.6 L446.1 415.9 L442.2 412.0 L436.9 406.7 L430.3 396.1 L426.4 385.6 L424.3 384.3 L426.4 394.8 L433.0 406.7 L438.2 417.2 L439.6 421.2 L447.5 421.2 L451.4 425.2 L444.8 429.1 L436.9 429.1 L431.6 434.4 L429.0 442.3 L427.7 450.2 L429.0 458.1 L431.6 463.4 L439.6 462.1 L448.8 460.8 L452.7 464.7 L450.1 470.0 L443.5 473.9 L439.6 477.1 L444.8 481.9 L452.7 487.1 L460.7 493.7 L468.6 496.4 L479.1 493.7 L489.7 489.8 L493.6 483.2 L496.3 489.8 L494.9 496.4 L491.0 500.3 L500.2 505.6 L505.5 508.2 L513.4 505.6 L518.7 501.6 L526.6 500.3 L534.5 501.6 L539.8 508.2 L545.0 514.8 L550.3 510.9 L551.6 503.0 L547.7 495.0 L546.4 489.8 L553.0 492.4 L558.2 487.7 L563.5 492.4 L571.4 497.2 L584.6 497.7 L595.1 500.3 L605.7 505.6 L616.2 508.2 L626.8 510.9 L632.1 518.8 L637.3 526.7 L642.6 532.0 L650.0 539.9 L663.4 550.0 L666.0 557.9 L667.4 565.8 L666.0 573.7 L668.7 584.3 L671.3 594.8 L675.3 601.4 L681.9 610.7 L688.4 623.8 L695.0 637.0 L703.0 650.2 L710.9 658.1 L718.8 666.0 L722.7 672.6 L721.4 679.2 L717.5 681.9 L716.1 689.8 L714.8 697.7 L711.4 705.6 L705.6 708.2 L710.9 713.5 L716.1 718.8 L709.5 729.3 L701.6 734.6 L699.0 739.9 L701.6 746.5 L697.7 750.4 L689.8 749.1 L681.9 751.7 L672.6 754.4 L671.3 759.7 L676.6 763.6 L681.9 771.5 L687.1 779.4 L692.4 787.3 L696.4 800.0 L697.2 802.1 L800.0 801.0 L800.0 0.0Z" fill="#b3d1ff"/>
<g clip-path="url(#seaclip)"><path d="M595.4 0.0 L594.8 5.3 L593.5 15.8 L589.6 26.4 L592.2 34.3 L593.5 44.8 L600.1 52.7 L602.7 62.0 L609.3 69.1 L615.9 71.2 L629.1 76.5 L642.3 84.4 L651.5 93.6 L657.3 101.5 L654.2 103.4 L644.9 98.1 L637.0 99.7 L629.1 105.5 L625.2 110.8 L629.1 116.0 L639.7 117.4 L650.2 119.2 L656.8 122.6 L660.8 116.0 L664.7 107.6 L673.9 110.2 L681.9 112.1 L689.8 108.1 L694.5 105.5 L697.7 104.2 L701.6 97.6 L705.6 89.7 L710.9 83.1 L718.8 78.6 L729.3 75.2 L734.6 77.8 L738.6 81.8 L743.8 89.7 L747.8 97.6 L754.4 105.5 L759.7 110.8 L761.0 117.4 L757.0 121.3 L754.4 129.2 L750.4 131.9 L751.7 137.1 L746.5 142.4 L739.9 145.0 L734.6 149.0 L727.2 154.3 L721.9 160.9 L719.3 168.8 L717.2 176.7 L714.3 182.8 L709.0 182.8 L705.6 177.2 L707.4 170.1 L709.3 163.5 L708.2 157.7 L702.4 155.6 L696.6 158.2 L694.0 163.5 L691.9 170.9 L685.8 176.7 L679.2 182.0 L671.3 182.5 L666.0 187.2 L660.8 192.5 L655.5 195.1 L647.6 196.5 L639.7 197.8 L631.8 200.4 L626.5 204.4 L621.2 205.7 L613.3 205.7 L608.5 207.8 L600.3 203.2 L587.1 210.5 L576.6 214.5 L566.0 218.5 L558.1 221.6 L554.2 226.4 L556.8 231.6 L554.2 238.2 L548.9 241.7 L544.4 247.5 L542.3 252.7 L547.0 257.0 L552.8 255.4 L556.0 250.1 L560.8 246.1 L568.7 244.8 L573.9 248.8 L574.5 255.4 L579.2 265.9 L581.1 272.5 L577.1 276.5 L571.3 275.2 L566.0 276.5 L560.8 279.1 L555.0 284.4 L550.7 289.7 L547.6 294.9 L542.8 300.2 L537.0 302.8 L529.1 301.8 L521.2 302.8 L515.9 304.2 L510.7 305.5 L506.7 306.8 L502.7 310.8 L496.1 316.0 L489.6 323.9 L481.6 331.9 L476.4 338.4 L469.8 346.4 L464.5 354.3 L463.2 360.9 L467.1 368.8 L472.4 374.1 L476.4 379.3 L480.3 389.9 L481.6 396.5 L476.4 398.3 L468.5 395.7 L461.9 397.0 L460.5 403.1 L465.8 408.3 L463.2 414.1 L455.3 415.2 L450.0 414.1 L452.7 414.6 L446.1 415.9 L442.2 412.0 L436.9 406.7 L430.3 396.1 L426.4 385.6 L424.3 384.3 L426.4 394.8 L433.0 406.7 L438.2 417.2 L439.6 421.2 L447.5 421.2 L451.4 425.2 L444.8 429.1 L436.9 429.1 L431.6 434.4 L429.0 442.3 L427.7 450.2 L429.0 458.1 L431.6 463.4 L439.6 462.1 L448.8 460.8 L452.7 464.7 L450.1 470.0 L443.5 473.9 L439.6 477.1 L444.8 481.9 L452.7 487.1 L460.7 493.7 L468.6 496.4 L479.1 493.7 L489.7 489.8 L493.6 483.2 L496.3 489.8 L494.9 496.4 L491.0 500.3 L500.2 505.6 L505.5 508.2 L513.4 505.6 L518.7 501.6 L526.6 500.3 L534.5 501.6 L539.8 508.2 L545.0 514.8 L550.3 510.9 L551.6 503.0 L547.7 495.0 L546.4 489.8 L553.0 492.4 L558.2 487.7 L563.5 492.4 L571.4 497.2 L584.6 497.7 L595.1 500.3 L605.7 505.6 L616.2 508.2 L626.8 510.9 L632.1 518.8 L637.3 526.7 L642.6 532.0 L650.0 539.9 L663.4 550.0 L666.0 557.9 L667.4 565.8 L666.0 573.7 L668.7 584.3 L671.3 594.8 L675.3 601.4 L681.9 610.7 L688.4 623.8 L695.0 637.0 L703.0 650.2 L710.9 658.1 L718.8 666.0 L722.7 672.6 L721.4 679.2 L717.5 681.9 L716.1 689.8 L714.8 697.7 L711.4 705.6 L705.6 708.2 L710.9 713.5 L716.1 718.8 L709.5 729.3 L701.6 734.6 L699.0 739.9 L701.6 746.5 L697.7 750.4 L689.8 749.1 L681.9 751.7 L672.6 754.4 L671.3 759.7 L676.6 763.6 L681.9 771.5 L687.1 779.4 L692.4 787.3 L696.4 800.0 L697.2 802.1" fill="none" stroke="#9dbff5" stroke-width="14" filter="url(#gl)"/></g>
<path d="M560.5 0.0 L595.4 0.0 L594.8 5.3 L593.5 15.8 L589.6 26.4 L592.2 34.3 L593.5 44.8 L600.1 52.7 L602.7 62.0 L589.6 65.9 L576.4 59.3 L568.5 44.8 L565.8 26.4 L557.9 10.5Z" fill="#cbdfab" opacity=".85"/>
<path d="M602.7 62.0 L609.3 69.1 L615.9 71.2 L629.1 76.5 L642.3 84.4 L651.5 93.6 L657.3 101.5 L654.2 103.4 L644.9 98.1 L637.0 99.7 L629.1 105.5 L625.2 110.8 L618.6 105.5 L610.7 89.7 L602.7 79.1 L597.5 68.6Z" fill="#cbdfab" opacity=".85"/>
<path d="M625.2 110.8 L629.1 116.0 L639.7 117.4 L650.2 119.2 L656.8 122.6 L660.8 116.0 L664.7 107.6 L673.9 110.2 L681.9 112.1 L679.2 118.7 L668.7 123.9 L655.5 129.2 L639.7 126.6 L626.5 123.9 L615.9 116.0Z" fill="#cbdfab" opacity=".85"/>
<path d="M598.3 0.0 L603.5 0.0 L608.5 13.2 L614.6 29.0 L620.7 44.8 L625.9 59.3 L627.0 63.3 L623.3 65.9 L619.1 64.6 L615.9 52.7 L610.1 36.9 L604.1 21.1 L600.1 7.9Z" fill="#cbdfab"/>
<path d="M595.4 2.6 C594.8 4.8 593.6 11.9 592.2 15.8 C590.8 19.8 587.4 22.9 586.9 26.4 C586.5 29.9 588.7 33.6 589.6 36.9 C590.4 40.2 590.7 43.3 592.2 46.1 C593.7 49.0 597.1 51.3 598.8 54.1 C600.5 56.8 601.6 61.3 602.2 62.8" fill="none" stroke="#b3d1ff" stroke-width="3"/>
<path d="M550.0 9.2 C551.8 9.4 556.6 9.4 560.5 10.5 C564.5 11.6 569.8 13.6 573.7 15.8 C577.7 18.0 581.6 22.0 584.3 23.7 C586.9 25.5 588.7 25.9 589.6 26.4" fill="none" stroke="#b3d1ff" stroke-width="2"/>
<path d="M656.8 122.6 C655.7 121.5 653.1 117.8 650.2 116.0 C647.4 114.3 642.7 113.4 639.7 112.1 C636.6 110.8 633.9 109.4 631.8 108.1 C629.6 106.8 628.2 105.5 626.5 104.2 C624.7 102.8 622.5 102.2 621.2 100.2 C619.9 98.2 619.0 93.6 618.6 92.3" fill="none" stroke="#b3d1ff" stroke-width="2.5"/>
<path d="M639.7 112.1 C640.1 111.0 642.7 107.0 642.3 105.5 C641.9 103.9 637.9 103.3 637.0 102.8" fill="none" stroke="#b3d1ff" stroke-width="2"/>
<path d="M694.5 105.5 C693.9 107.2 692.3 113.0 691.1 116.0 C689.9 119.1 688.2 121.3 687.1 123.9 C686.0 126.6 684.1 129.2 684.5 131.9 C684.9 134.5 687.8 137.8 689.8 139.8 C691.7 141.7 695.3 143.1 696.4 143.7" fill="none" stroke="#b3d1ff" stroke-width="2"/>
<path d="M502.2 331.9 L513.3 334.0 L526.5 339.2 L532.3 343.7 L526.5 346.6 L518.6 345.0 L508.0 344.0 L501.4 339.8Z" fill="#f2efe9"/>
<path d="M505.9 307.1 L504.9 318.7 L506.7 326.6 L509.6 331.3" fill="none" stroke="#f2efe9" stroke-width="1.6"/>
<path d="M479.5 397.8 L484.3 404.4 L489.6 411.0 L494.0 417.6 L490.9 419.4 L485.6 411.5 L479.5 405.2Z" fill="#cbdfab"/>
<path d="M571.4 496.6 L563.5 489.8 L556.1 480.5 L550.8 468.7 L546.9 458.1 L544.3 453.6 L539.2 455.0 L541.9 460.8 L545.8 471.3 L551.1 481.9 L557.7 491.6 L566.1 497.7Z" fill="#ece9e2"/>
<path d="M717.7 701.6 C719.2 704.5 723.9 713.7 726.7 718.8 C729.5 723.8 731.7 728.0 734.6 732.0 C737.5 735.9 741.1 739.3 743.8 742.5 C746.6 745.7 749.8 749.5 750.9 750.9" fill="none" stroke="#efece4" stroke-width="2.800"/>
<path d="M750.9 750.9 C750.0 750.6 747.7 748.8 745.1 749.1 C742.6 749.5 738.6 751.1 735.9 753.1 C733.3 755.0 731.1 759.4 729.3 761.0 C727.6 762.5 726.0 762.1 725.4 762.3" fill="none" stroke="#efece4" stroke-width="3"/>
<path d="M713.5 778.9 C714.0 779.7 715.7 781.8 716.7 783.4 C717.6 785.0 718.9 787.8 719.3 788.7" fill="none" stroke="#f2efe9" stroke-width="1.5"/>
<path d="M479.1 450.7 L492.3 433.1 L492.8 434.9 L481.8 451.5Z" fill="#cbdfab"/>
<path d="M467.2 434.4 L471.2 434.9 L472.5 442.3 L469.1 442.3Z" fill="#cbdfab"/>
<path d="M449.6 451.5 L459.3 442.8 L460.7 444.9 L451.4 453.4Z" fill="#cbdfab"/>
<path d="M497.6 472.6 L505.5 467.4 L513.4 460.2 L515.5 462.9 L508.1 470.0 L499.7 475.3Z" fill="#cbdfab"/>
<path d="M505.0 434.9 L508.6 433.9 L516.0 436.5 L512.9 438.3Z" fill="#cbdfab"/>
<path d="M510.2 430.4 L513.4 429.6 L516.0 435.7 L513.4 435.7Z" fill="#cbdfab"/>
<path d="M534.5 420.7 L537.1 420.1 L537.1 423.8 L535.0 424.4Z" fill="#cbdfab"/>
<path d="M456.7 458.1 L468.6 455.5 L469.1 457.6 L458.0 460.2Z" fill="#cbdfab"/>
<path d="M493.6 481.9 L495.5 481.9 L497.6 491.1 L495.5 492.4Z" fill="#cbdfab"/>
<path d="M514.7 491.9 L520.0 490.3 L520.8 492.9 L516.0 494.5Z" fill="#cbdfab"/>
<path d="M530.5 479.7 L535.0 479.7 L535.0 481.9 L531.1 481.9Z" fill="#cbdfab"/>
<path d="M605.6 215.3 L609.5 216.4 L610.3 219.8 L606.9 219.0Z" fill="#cbdfab"/>
<path d="M614.0 229.5 L618.2 228.5 L618.8 233.8 L615.1 234.3Z" fill="#cbdfab"/>
<path d="M624.1 200.0 L632.0 200.0 L631.4 204.7 L626.2 205.3Z" fill="#cbdfab"/>
<path d="M604.1 214.9 L609.3 214.1 L610.1 218.4 L605.4 218.9Z" fill="#cbdfab"/>
<path d="M613.3 230.7 L618.0 230.0 L618.6 234.2 L614.3 234.7Z" fill="#cbdfab"/>
<path d="M766.8 128.7 L770.5 127.6 L769.9 131.3 L767.3 131.9Z" fill="#cbdfab"/>
<path d="M758.3 137.1 L761.0 136.6 L761.0 139.8 L758.9 139.8Z" fill="#cbdfab"/>
<path d="M722.7 746.5 L726.2 745.1 L726.2 753.1 L723.0 753.6Z" fill="#cbdfab"/>
<path d="M468.5 434.7 L471.6 434.2 L472.7 442.1 L469.5 442.6Z" fill="#cbdfab"/>
<path d="M481.6 445.3 L490.9 432.1 L492.7 433.4 L484.8 449.2Z" fill="#cbdfab"/>
<path d="M510.1 430.7 L513.3 430.0 L515.9 436.0 L512.8 436.8Z" fill="#cbdfab"/>
<g fill="#a5c8fd"><path d="M138.6 255.4 L136.4 251.5 L133.6 246.6 L138.0 244.0 L141.3 244.5 L142.8 248.2 L142.0 252.6Z"/><path d="M106.5 196.2 L106.4 193.6 L108.6 189.9 L112.2 190.9 L113.2 193.2 L112.9 196.7 L108.5 198.6Z"/><path d="M75.7 176.5 L74.0 174.4 L72.3 171.9 L74.6 169.7 L77.1 171.0 L78.4 172.6 L78.3 175.1Z"/><path d="M189.9 316.8 L187.6 314.8 L186.4 311.1 L188.6 308.5 L191.6 307.2 L194.4 310.8 L192.2 314.8Z"/><path d="M222.5 329.6 L221.4 326.5 L220.5 323.0 L223.1 319.9 L225.6 321.7 L226.5 324.6 L225.6 328.6Z"/><path d="M250.8 43.0 L248.4 42.4 L248.3 39.0 L250.3 37.4 L252.2 37.8 L253.3 39.6 L252.8 42.1Z"/><path d="M311.5 120.5 L313.0 117.6 L317.4 116.8 L321.0 118.4 L319.3 121.0 L317.6 123.1 L313.3 123.4Z"/><path d="M260.9 350.8 L260.5 344.5 L262.7 341.4 L265.8 346.3 L267.5 353.2 L265.5 356.1 L263.0 356.8Z"/><path d="M381.8 58.6 L376.6 57.4 L371.3 53.2 L377.7 49.2 L386.6 48.9 L390.8 53.7 L389.6 58.9Z"/><path d="M20.5 394.3 L22.9 391.4 L25.1 388.9 L28.0 390.1 L29.8 392.3 L27.0 394.6 L23.7 395.7Z"/><path d="M56.4 127.2 L57.4 125.5 L59.1 124.4 L61.0 125.2 L62.2 127.0 L60.0 128.2 L58.1 128.3Z"/><path d="M294.5 221.2 L293.1 220.1 L293.3 217.6 L295.6 216.9 L296.9 218.0 L297.4 219.8 L296.1 221.6Z"/><path d="M179.0 237.2 L177.7 238.0 L176.0 237.7 L174.9 236.1 L175.8 234.7 L177.6 234.5 L178.8 235.7Z"/><path d="M358.1 362.4 L354.9 360.2 L354.5 357.3 L357.1 355.3 L360.5 356.6 L363.3 358.5 L361.6 361.0Z"/><path d="M39.2 267.2 L36.4 264.3 L36.6 260.0 L39.2 257.4 L42.2 257.9 L44.4 261.1 L42.7 265.1Z"/><path d="M590.8 162.5 L583.8 159.7 L580.4 153.2 L589.5 152.6 L598.1 153.8 L602.2 159.6 L598.0 163.5Z"/><path d="M516.8 135.2 L517.6 129.4 L523.3 130.1 L526.5 132.8 L529.5 138.1 L524.0 140.9 L519.6 138.8Z"/><path d="M421.8 252.4 L416.6 252.0 L414.8 244.7 L415.0 239.4 L418.4 234.6 L423.8 240.7 L423.5 247.5Z"/><path d="M500.6 238.8 L497.8 239.5 L495.9 237.2 L496.0 234.1 L498.9 232.5 L501.5 234.1 L502.7 236.9Z"/><path d="M513.9 223.8 L514.3 220.2 L516.7 216.1 L520.8 214.6 L523.4 216.2 L520.4 220.3 L517.4 224.3Z"/><path d="M545.4 223.7 L542.7 225.8 L538.0 226.1 L533.2 224.9 L534.3 222.4 L538.2 221.3 L543.1 221.4Z"/><path d="M468.6 140.6 L469.2 137.8 L471.2 136.2 L473.8 136.9 L475.3 139.4 L473.3 141.5 L470.9 142.1Z"/><path d="M568.3 57.8 L566.7 56.3 L566.1 53.5 L568.1 51.2 L570.4 52.2 L571.2 54.6 L570.1 56.7Z"/><path d="M43.9 544.7 L36.9 548.2 L31.0 543.2 L34.2 536.4 L38.8 528.5 L45.9 533.1 L51.1 539.3Z"/><path d="M70.3 443.7 L75.7 433.7 L82.4 426.8 L94.3 424.5 L92.8 434.5 L89.5 440.8 L81.0 446.6Z"/><path d="M122.5 486.5 L115.7 482.1 L115.0 474.1 L118.1 466.1 L125.5 468.2 L129.6 474.0 L128.8 481.7Z"/><path d="M192.2 469.6 L176.8 473.2 L173.5 467.6 L177.2 458.9 L195.9 453.3 L207.0 455.3 L201.7 462.7Z"/><path d="M187.9 473.0 L184.4 472.5 L181.5 467.6 L181.1 461.8 L184.8 460.0 L188.5 464.8 L189.8 469.9Z"/><path d="M326.0 660.8 L322.2 654.2 L321.9 648.6 L327.7 645.2 L333.6 650.1 L336.4 654.8 L335.0 661.1Z"/><path d="M273.0 677.6 L274.5 673.5 L277.1 668.6 L282.7 669.0 L285.5 672.8 L283.1 678.3 L276.6 680.6Z"/><path d="M315.6 776.2 L309.6 776.1 L306.0 772.0 L309.4 766.7 L316.1 766.1 L320.5 768.6 L322.3 773.7Z"/><path d="M166.9 764.1 L160.1 761.1 L161.9 754.7 L167.9 754.0 L173.4 754.5 L177.3 759.8 L172.5 763.6Z"/><path d="M367.1 595.0 L365.4 592.9 L366.3 588.3 L370.6 586.9 L373.6 588.7 L372.2 592.9 L369.8 596.4Z"/><path d="M149.4 570.9 L147.4 570.1 L147.4 567.8 L148.9 565.6 L151.3 566.6 L152.2 568.6 L151.1 570.2Z"/><path d="M123.3 524.0 L120.3 525.2 L118.3 524.9 L117.7 522.6 L118.8 519.5 L121.9 517.7 L123.7 520.2Z"/><path d="M255.9 569.8 L255.5 568.1 L256.0 565.7 L258.4 566.7 L260.3 568.5 L259.3 570.6 L257.4 571.0Z"/><path d="M56.1 570.2 L53.1 573.0 L51.2 571.2 L52.2 568.3 L54.7 565.9 L57.3 565.8 L57.4 568.0Z"/><path d="M288.6 527.5 L288.5 525.3 L291.0 524.5 L293.1 524.8 L293.2 526.7 L292.0 527.9 L290.0 529.2Z"/><path d="M17.7 469.2 L16.9 466.4 L20.6 463.9 L23.6 465.0 L25.3 467.0 L23.8 470.3 L19.8 470.7Z"/><path d="M105.3 755.1 L105.9 750.3 L109.9 747.3 L113.3 751.5 L114.2 756.2 L112.3 761.7 L107.3 759.8Z"/><path d="M583.5 555.6 L582.8 552.9 L583.9 550.6 L586.6 551.4 L590.0 553.7 L588.3 556.5 L586.1 558.0Z"/><path d="M605.5 739.5 L600.6 745.8 L596.0 746.2 L595.9 739.5 L598.2 732.9 L603.5 725.6 L605.9 731.6Z"/><path d="M432.6 567.5 L427.6 570.7 L424.0 568.8 L425.2 564.1 L428.6 558.0 L434.0 558.5 L435.1 562.6Z"/><path d="M478.2 609.3 L475.4 606.0 L474.9 601.4 L480.2 603.1 L484.5 605.4 L486.8 610.3 L483.0 612.8Z"/><path d="M572.2 747.8 L568.7 752.3 L565.3 750.6 L562.8 746.7 L567.1 742.5 L571.5 738.5 L573.5 742.9Z"/><path d="M630.2 678.4 L627.7 678.8 L625.0 678.5 L625.2 675.7 L626.3 672.8 L629.4 673.4 L630.7 675.8Z"/><path d="M434.1 714.6 L430.0 716.3 L425.8 717.0 L428.6 712.2 L431.5 708.2 L435.6 707.2 L435.8 710.4Z"/><path d="M426.6 788.7 L422.6 782.5 L424.6 779.0 L429.9 781.4 L434.5 786.3 L434.1 790.3 L431.4 791.5Z"/><path d="M631.7 726.2 L631.0 723.4 L633.6 722.5 L636.2 722.3 L637.1 724.8 L636.2 727.3 L633.6 727.6Z"/><path d="M453.2 556.7 L451.8 558.1 L449.7 557.9 L447.4 556.7 L448.6 554.7 L450.5 553.7 L453.4 554.2Z"/><path d="M520.0 613.0 L519.3 610.4 L521.4 609.2 L523.2 609.0 L524.1 610.5 L524.6 612.6 L522.5 613.7Z"/><path d="M561.4 697.5 L558.5 698.2 L556.8 696.5 L558.4 694.2 L560.7 692.1 L562.8 693.6 L563.6 695.6Z"/><path d="M494.5 721.7 L492.9 724.2 L490.5 723.1 L489.9 720.5 L491.9 719.0 L493.6 718.7 L494.9 719.8Z"/><path d="M541.7 587.4 L539.9 588.0 L537.9 586.5 L536.6 584.7 L537.1 582.9 L539.7 584.0 L542.5 585.5Z"/><path d="M580.8 664.4 L579.8 662.6 L579.6 660.6 L581.0 658.9 L582.7 659.8 L582.9 661.5 L583.0 663.9Z"/><path d="M71.1 182.1 L71.4 180.9 L72.8 179.5 L73.6 180.9 L72.3 182.0Z"/><path d="M327.1 59.7 L325.0 60.4 L323.5 57.2 L323.8 54.7 L327.7 57.7Z"/><path d="M412.6 518.7 L409.5 519.9 L406.1 518.5 L406.8 515.4 L410.5 516.3Z"/><path d="M311.6 266.0 L309.1 266.2 L306.3 265.2 L307.0 263.9 L309.8 264.2Z"/><path d="M317.3 561.8 L318.7 558.7 L321.7 558.3 L324.1 559.5 L320.7 562.1Z"/><path d="M14.7 267.5 L13.5 265.2 L13.5 262.8 L15.6 263.8 L17.0 265.6Z"/><path d="M83.4 303.2 L83.2 300.8 L86.2 299.1 L87.6 302.0 L85.6 304.3Z"/><path d="M128.2 614.7 L126.2 614.9 L124.2 612.2 L125.8 611.2 L128.3 612.8Z"/><path d="M283.7 401.1 L281.6 402.6 L280.7 400.8 L281.5 399.0 L283.3 398.7Z"/><path d="M572.7 670.7 L570.4 669.2 L570.9 667.5 L573.8 666.3 L574.0 668.5Z"/><path d="M501.4 159.5 L500.0 158.5 L501.1 157.0 L502.9 157.1 L502.6 158.8Z"/><path d="M460.1 559.5 L459.0 557.1 L460.7 555.1 L463.7 556.8 L462.3 558.8Z"/><path d="M289.8 371.5 L287.8 371.8 L287.7 370.4 L289.3 368.9 L290.6 369.6Z"/><path d="M107.1 725.2 L107.2 723.0 L108.8 721.3 L110.5 722.3 L109.3 724.7Z"/><path d="M450.2 212.6 L448.1 213.1 L444.0 211.4 L446.4 208.4 L449.7 210.5Z"/><path d="M96.5 661.8 L95.9 658.7 L98.1 658.3 L100.1 659.4 L99.4 661.5Z"/><path d="M195.4 460.7 L192.8 459.8 L189.3 457.8 L190.8 456.6 L194.3 458.4Z"/><path d="M436.8 61.3 L437.8 60.1 L439.0 60.3 L439.1 61.4 L438.2 61.8Z"/><path d="M524.0 248.4 L525.1 245.3 L527.4 244.3 L529.5 245.5 L527.5 248.8Z"/><path d="M303.1 474.0 L303.9 472.6 L308.2 472.1 L308.4 473.5 L304.7 474.5Z"/><path d="M161.3 375.5 L159.3 375.7 L158.2 374.5 L159.0 372.9 L160.7 373.5Z"/><path d="M454.0 139.9 L454.8 138.5 L457.0 137.2 L457.9 138.6 L455.6 140.9Z"/><path d="M452.3 268.5 L452.7 265.8 L455.2 263.6 L456.2 264.3 L454.6 266.6Z"/><path d="M538.9 118.7 L536.2 117.1 L533.9 114.0 L536.3 113.7 L538.8 115.6Z"/><path d="M374.2 329.3 L375.3 328.0 L377.9 327.8 L377.6 329.9 L375.2 331.5Z"/><path d="M609.4 601.4 L607.3 604.4 L604.1 603.2 L604.7 600.0 L607.0 599.4Z"/><path d="M669.5 686.0 L669.0 683.9 L670.6 682.3 L672.2 683.0 L671.8 685.6Z"/><path d="M450.0 725.9 L451.7 723.4 L453.7 722.6 L454.9 724.1 L453.0 726.1Z"/><path d="M346.5 724.8 L345.4 724.1 L344.7 722.5 L345.6 721.8 L347.4 723.5Z"/><path d="M576.9 721.2 L578.6 718.1 L583.1 717.7 L583.3 720.6 L580.0 722.6Z"/><path d="M476.5 56.2 L474.9 57.6 L473.6 56.5 L473.7 54.6 L475.8 53.8Z"/><path d="M402.2 318.9 L400.5 317.8 L401.0 316.5 L403.6 315.8 L403.3 317.6Z"/><path d="M422.8 192.6 L420.6 192.8 L419.8 191.3 L420.1 189.5 L422.2 190.5Z"/><path d="M187.9 57.7 L186.1 55.2 L187.9 51.7 L190.6 52.7 L190.1 55.8Z"/><path d="M535.0 694.7 L532.0 695.4 L531.0 693.3 L531.5 690.5 L533.9 692.1Z"/><path d="M179.9 598.1 L177.5 599.2 L175.1 598.0 L175.8 595.3 L178.5 595.8Z"/><path d="M78.6 634.9 L77.1 634.0 L78.0 632.3 L79.7 633.2 L80.3 634.7Z"/><path d="M197.0 239.8 L195.6 240.9 L193.4 239.7 L193.5 238.3 L196.1 238.4Z"/><path d="M321.1 286.5 L318.3 286.6 L316.3 285.1 L315.6 283.5 L318.8 284.6Z"/><path d="M27.2 720.2 L24.6 720.6 L22.6 718.9 L24.3 717.6 L26.6 717.4Z"/><path d="M379.6 165.5 L378.3 167.3 L377.0 165.9 L376.7 163.4 L378.9 163.6Z"/><path d="M719.6 159.4 L716.9 157.9 L714.5 154.4 L716.6 153.6 L719.7 156.3Z"/><path d="M377.1 141.7 L374.7 138.2 L377.3 135.4 L380.3 134.8 L379.9 138.8Z"/><path d="M160.2 507.2 L159.2 504.3 L161.7 504.6 L163.3 506.0 L162.9 508.3Z"/><path d="M36.7 85.4 L39.3 84.1 L42.3 83.5 L41.7 85.2 L39.3 86.5Z"/><path d="M568.9 109.0 L567.8 106.1 L571.7 105.1 L572.7 107.8 L571.0 109.7Z"/><path d="M356.5 65.4 L354.8 64.0 L355.4 62.3 L356.5 62.2 L357.1 63.4Z"/><path d="M567.4 157.9 L567.2 156.4 L568.9 156.0 L570.2 157.0 L568.7 158.4Z"/><path d="M534.1 633.6 L531.4 634.4 L529.3 632.8 L530.4 630.2 L533.6 630.5Z"/><path d="M186.1 240.9 L183.9 242.1 L180.4 241.8 L179.8 239.1 L184.6 238.4Z"/><path d="M222.5 512.1 L221.7 514.9 L219.9 513.4 L220.5 510.5 L222.2 509.7Z"/><path d="M355.0 424.1 L352.4 423.8 L349.6 422.1 L350.7 421.0 L353.0 422.3Z"/><path d="M480.5 228.8 L477.8 229.7 L477.8 227.0 L480.0 226.4 L481.3 227.2Z"/><path d="M70.9 230.7 L68.9 229.6 L68.1 226.5 L69.5 225.9 L70.7 228.3Z"/><path d="M222.9 439.9 L221.9 438.5 L222.3 436.9 L225.6 437.1 L224.6 439.2Z"/><path d="M371.5 601.5 L369.0 602.4 L367.5 600.9 L368.4 598.5 L370.6 599.1Z"/><path d="M399.4 146.4 L397.2 144.4 L399.0 140.8 L400.9 142.8 L401.7 145.1Z"/><path d="M284.8 529.2 L285.5 525.8 L289.0 524.0 L290.5 525.7 L288.1 528.3Z"/><path d="M406.7 679.0 L403.5 678.6 L401.5 674.9 L403.8 673.6 L406.1 676.0Z"/><path d="M621.4 134.3 L622.2 131.7 L624.9 129.9 L625.6 131.4 L624.0 133.7Z"/><path d="M352.9 620.3 L350.9 619.7 L350.7 616.7 L353.1 614.7 L354.6 618.7Z"/><path d="M189.3 392.6 L187.6 392.3 L187.4 390.5 L189.1 390.1 L189.9 391.2Z"/><path d="M396.9 29.3 L397.7 26.8 L400.7 26.2 L401.2 28.5 L399.2 29.8Z"/><path d="M459.5 698.6 L458.3 699.4 L456.4 698.8 L456.9 697.3 L459.1 696.9Z"/><path d="M15.7 399.5 L13.1 398.3 L13.1 396.1 L14.2 395.4 L16.1 396.7Z"/><path d="M209.1 638.9 L209.7 636.1 L211.4 637.5 L211.9 640.6 L210.1 640.3Z"/><path d="M633.4 192.5 L632.2 190.8 L632.5 189.4 L633.8 189.6 L634.3 190.7Z"/><path d="M35.9 253.8 L33.3 252.8 L31.8 250.7 L33.4 249.7 L35.8 250.9Z"/><path d="M210.3 471.6 L210.8 469.6 L212.4 469.0 L214.0 471.9 L212.3 473.2Z"/><path d="M139.2 204.4 L137.3 206.5 L135.9 204.6 L136.6 202.8 L138.0 202.6Z"/><path d="M664.5 631.2 L663.0 629.6 L663.7 627.7 L665.6 628.6 L666.0 629.9Z"/><path d="M288.8 175.8 L290.2 173.1 L293.3 170.3 L293.6 171.7 L291.5 174.0Z"/><path d="M392.2 611.1 L390.7 610.5 L390.4 606.8 L391.6 606.1 L393.1 609.8Z"/><path d="M365.2 596.9 L363.9 596.7 L362.5 595.6 L364.1 594.5 L366.0 595.1Z"/><path d="M714.4 113.6 L712.6 115.0 L710.5 113.7 L711.0 112.5 L712.7 112.3Z"/><path d="M341.0 61.9 L339.1 62.7 L337.5 62.3 L339.2 59.5 L341.0 59.2Z"/><path d="M610.1 589.0 L609.0 587.4 L610.2 585.5 L611.6 586.3 L611.9 588.3Z"/><path d="M443.4 195.3 L440.1 195.9 L438.7 192.9 L441.3 191.4 L444.1 192.1Z"/><path d="M287.9 269.9 L290.2 268.2 L294.0 268.3 L295.1 270.9 L290.5 271.0Z"/><path d="M34.4 322.5 L32.6 323.6 L29.0 323.1 L29.8 321.8 L32.9 321.0Z"/><path d="M277.5 558.3 L274.3 557.1 L272.9 555.2 L273.7 554.0 L275.8 555.3Z"/><path d="M314.3 676.6 L312.8 674.9 L312.6 672.1 L315.5 672.9 L315.8 674.9Z"/><path d="M174.0 279.0 L171.7 280.3 L171.1 278.1 L172.0 276.9 L174.0 276.5Z"/><path d="M132.8 164.6 L130.4 164.5 L129.2 162.6 L130.8 161.4 L133.0 161.9Z"/><path d="M247.2 360.7 L244.5 359.4 L245.8 355.9 L247.8 354.2 L248.2 358.2Z"/><path d="M305.2 60.5 L304.2 58.4 L306.5 56.6 L308.3 56.5 L307.2 59.5Z"/><path d="M217.4 15.4 L218.7 13.6 L220.5 14.0 L220.8 15.2 L219.5 16.0Z"/><path d="M314.8 741.0 L313.5 739.7 L312.8 736.3 L314.7 736.1 L315.6 739.3Z"/><path d="M286.3 122.9 L287.8 121.3 L290.8 122.1 L292.4 123.9 L287.6 124.7Z"/><path d="M615.2 581.7 L612.5 580.5 L610.7 577.5 L611.4 576.7 L613.9 578.9Z"/><path d="M256.7 307.9 L256.3 305.3 L258.4 305.7 L259.2 308.4 L258.0 309.9Z"/><path d="M258.5 617.2 L258.8 615.7 L261.6 615.4 L262.7 616.4 L259.8 618.2Z"/><path d="M316.6 191.6 L314.8 192.3 L314.1 190.7 L314.9 189.9 L315.9 190.1Z"/><path d="M475.1 25.5 L475.3 23.4 L477.4 24.6 L478.3 26.4 L476.0 26.5Z"/><path d="M438.0 110.5 L435.2 109.9 L433.1 108.4 L433.1 106.3 L436.9 108.0Z"/><path d="M578.3 533.7 L579.8 532.3 L581.1 532.0 L582.2 533.3 L580.4 534.5Z"/><path d="M226.4 570.5 L224.7 571.4 L222.5 570.9 L223.2 569.4 L224.8 569.3Z"/><path d="M232.2 276.0 L232.9 274.7 L234.6 275.5 L235.1 276.5 L233.3 276.7Z"/><path d="M20.0 506.1 L17.5 505.7 L18.4 503.1 L20.6 501.6 L21.8 504.6Z"/><path d="M537.8 735.8 L536.2 737.3 L534.1 736.1 L535.6 733.8 L537.3 734.0Z"/><path d="M529.1 764.5 L532.0 762.7 L535.3 763.3 L535.2 764.5 L532.6 765.2Z"/><path d="M507.4 72.2 L506.4 73.5 L504.2 72.4 L504.4 70.6 L506.9 70.7Z"/><path d="M50.4 306.8 L48.7 308.6 L46.4 307.7 L46.4 305.6 L48.9 304.8Z"/><path d="M221.1 127.0 L223.0 125.0 L225.4 125.9 L225.4 127.7 L223.3 128.4Z"/><path d="M131.8 532.3 L132.8 531.2 L134.7 531.4 L134.4 532.6 L132.7 533.7Z"/><path d="M275.2 337.9 L274.1 340.2 L272.4 338.7 L272.1 336.6 L273.9 336.2Z"/><path d="M561.3 19.5 L559.8 19.5 L557.8 17.8 L559.4 16.2 L562.1 17.6Z"/><path d="M51.9 323.7 L50.5 325.0 L48.9 324.4 L49.4 322.3 L50.9 322.1Z"/><path d="M259.6 202.8 L259.8 201.0 L261.7 201.4 L261.6 203.5 L260.1 204.3Z"/><path d="M208.2 534.5 L208.9 532.7 L211.1 533.2 L210.8 535.3 L208.9 536.4Z"/><path d="M492.9 765.7 L490.6 765.0 L490.4 762.3 L492.6 762.1 L494.3 763.7Z"/><path d="M328.6 333.9 L326.4 332.8 L327.9 331.1 L330.8 330.7 L330.8 333.3Z"/><path d="M107.4 407.2 L107.2 405.2 L108.9 404.3 L109.9 405.2 L109.7 407.5Z"/><path d="M153.7 185.6 L152.6 183.6 L153.2 179.9 L154.7 181.1 L154.9 183.5Z"/><path d="M-1.0 436.1 L-0.6 434.2 L2.1 433.0 L3.2 434.7 L0.9 436.9Z"/><path d="M397.1 520.4 L395.5 522.6 L392.2 521.2 L393.6 519.2 L395.6 518.9Z"/><path d="M450.3 666.5 L448.4 666.4 L445.4 663.2 L447.3 662.2 L450.3 664.6Z"/><path d="M279.1 709.6 L277.4 711.9 L275.2 709.9 L276.2 707.5 L278.4 707.4Z"/><path d="M553.0 551.7 L554.8 548.5 L558.0 546.2 L559.0 548.7 L556.7 551.6Z"/><path d="M129.1 498.7 L127.0 498.8 L125.6 496.8 L127.2 496.0 L128.9 496.7Z"/><path d="M295.2 230.4 L294.2 228.9 L295.0 225.6 L296.9 226.9 L296.9 229.7Z"/><path d="M191.4 201.2 L189.4 200.3 L187.8 198.8 L188.8 197.3 L190.6 199.1Z"/><path d="M411.4 102.5 L410.0 101.5 L410.2 100.0 L411.2 100.0 L412.1 101.0Z"/><path d="M82.5 565.4 L80.7 564.7 L80.5 563.2 L82.2 562.1 L83.8 563.5Z"/></g><path d="M147.7 16.9 C148.7 22.5 151.5 37.3 154.0 50.6 C156.5 64.0 158.6 85.8 162.4 97.0 C166.3 108.3 171.2 113.8 177.2 118.1 C183.2 122.5 189.9 123.8 198.3 123.2 C206.8 122.6 220.1 115.3 227.8 114.8 C235.6 114.3 237.7 121.8 244.7 120.3 C251.8 118.7 261.6 111.5 270.0 105.5 C278.5 99.5 286.9 89.3 295.4 84.4 C303.8 79.5 312.2 78.4 320.7 75.9 C329.1 73.5 337.6 72.4 346.0 69.6 C354.4 66.8 362.3 62.9 371.3 59.1 C380.3 55.2 391.0 52.0 400.0 46.4 C409.0 40.8 416.9 31.6 425.3 25.3 C433.8 19.0 442.9 12.7 450.6 8.4 C458.4 4.2 468.2 1.4 471.7 0.0" fill="none" stroke="#a5c8fd" stroke-width="2"/><path d="M192.0 295.4 C193.0 291.8 195.5 279.9 198.3 274.3 C201.1 268.6 206.4 266.2 208.9 261.6 C211.3 257.0 210.3 251.1 213.1 246.8 C215.9 242.6 223.3 240.2 225.7 236.3 C228.2 232.4 227.5 225.7 227.8 223.6" fill="none" stroke="#a5c8fd" stroke-width="2"/><path d="M555.5 226.4 C553.8 225.7 548.5 223.7 545.0 222.4 C541.5 221.1 537.9 219.6 534.4 218.5 C530.9 217.4 526.9 217.4 523.8 215.8 C520.7 214.2 517.2 210.3 515.9 209.2" fill="none" stroke="#a5c8fd" stroke-width="2"/><path d="M270.0 400.0 C274.3 397.9 285.5 388.7 295.4 387.3 C305.2 385.9 318.6 390.2 329.1 391.6 C339.7 393.0 348.8 394.0 358.6 395.8 C368.5 397.5 379.9 400.0 388.2 402.1 C396.5 404.2 405.1 407.4 408.4 408.4" fill="none" stroke="#a5c8fd" stroke-width="2"/>
<path d="M0 63 L160 67.5 L247.500 69.100 L260.100 52.200 L269.600 36.400 L282.300 25.300 L294.900 21.800 L310.800 24.500 L325 29.300 L326.600 15.800 L326.600 0" fill="none" stroke="#b5b2ab" stroke-width="1" stroke-dasharray="6 3"/>
<path d="M0 744 L40 744 L100 740 L183 739 L183 800" fill="none" stroke="#b5b2ab" stroke-width="1" stroke-dasharray="6 3"/>
<path d="M539.2 0.0 C537.1 5.6 530.8 21.1 526.6 33.8 C522.4 46.4 517.4 63.3 513.9 75.9 C510.4 88.6 508.3 98.5 505.5 109.7 C502.7 121.0 499.5 133.6 497.0 143.5 C494.6 153.3 493.5 158.9 490.7 168.8 C487.9 178.6 484.0 191.3 480.2 202.5 C476.3 213.8 471.7 226.4 467.5 236.3 C463.3 246.1 458.4 251.8 454.9 261.6 C451.3 271.4 448.5 285.2 446.4 295.4 C444.3 305.6 442.9 318.2 442.2 322.8" fill="none" stroke="#e9bf52" stroke-width="3" stroke-linecap="round" stroke-linejoin="round"/>
<path d="M0.0 477.6 C7.0 477.3 28.1 477.2 42.2 475.5 C56.3 473.8 70.3 469.3 84.4 467.5 C98.5 465.8 112.5 465.4 126.6 465.0 C140.6 464.6 154.7 465.7 168.8 465.0 C182.8 464.3 196.9 462.9 211.0 460.8 C225.0 458.6 239.1 455.1 253.2 452.3 C267.2 449.5 281.3 445.8 295.4 443.9 C309.4 442.0 323.5 441.8 337.6 440.9 C351.6 440.0 369.3 439.2 379.7 438.4 C390.2 437.6 396.6 436.3 400.0 435.9" fill="none" stroke="#e9bf52" stroke-width="3" stroke-linecap="round" stroke-linejoin="round"/>
<path d="M329.1 526.6 C327.7 532.2 323.5 550.5 320.7 560.3 C317.9 570.2 316.5 575.8 312.2 585.7 C308.0 595.5 301.7 608.9 295.4 619.4 C289.0 630.0 281.3 639.1 274.3 648.9 C267.2 658.8 259.5 667.9 253.2 678.5 C246.8 689.0 240.5 702.4 236.3 712.2 C232.1 722.1 230.7 728.4 227.8 737.6 C225.0 746.7 221.5 756.7 219.4 767.1 C217.3 777.5 215.9 794.5 215.2 800.0" fill="none" stroke="#e9bf52" stroke-width="3" stroke-linecap="round" stroke-linejoin="round"/>
<path d="M431.6 478.1 C434.1 481.2 441.1 491.8 446.4 497.0 C451.7 502.3 457.0 506.9 463.3 509.7 C469.6 512.5 476.7 513.2 484.4 513.9 C492.1 514.6 499.9 513.9 509.7 513.9 C519.5 513.9 533.6 513.2 543.5 513.9 C553.3 514.6 561.0 516.0 568.8 518.1 C576.5 520.3 583.5 523.1 589.9 526.6 C596.2 530.1 601.1 534.3 606.8 539.2 C612.4 544.2 618.0 549.8 623.6 556.1 C629.3 562.4 636.3 569.5 640.5 577.2 C644.7 585.0 647.2 594.1 648.9 602.5 C650.7 611.0 648.9 619.4 651.1 627.8 C653.2 636.3 657.7 644.7 661.6 653.2 C665.5 661.6 670.7 670.0 674.3 678.5 C677.8 686.9 681.3 696.1 682.7 703.8 C684.1 711.5 684.8 719.3 682.7 724.9 C680.6 730.5 673.6 733.3 670.0 737.6 C666.5 741.8 663.0 748.1 661.6 750.2" fill="none" stroke="#e9bf52" stroke-width="3" stroke-linecap="round" stroke-linejoin="round"/>
<path d="M371.3 261.6 C372.4 257.4 377.6 246.1 377.6 236.3 C377.6 226.4 373.8 213.8 371.3 202.5 C368.8 191.3 361.5 179.3 362.9 168.8 C364.3 158.2 376.9 150.5 379.7 139.2 C382.6 128.0 380.1 113.9 379.7 101.3 C379.4 88.6 378.3 73.8 377.6 63.3 C376.9 52.7 375.3 43.8 375.5 38.0 C375.7 32.1 376.5 33.1 378.9 28.3 C381.3 23.5 386.2 14.0 389.9 9.3 C393.5 4.6 399.0 1.5 400.8 0.0" fill="none" stroke="#e9bf52" stroke-width="3" stroke-linecap="round" stroke-linejoin="round"/>
<path d="M0.0 438.0 C2.6 436.7 10.5 432.4 15.8 430.0 C21.1 427.6 25.5 425.0 31.6 423.7 C37.7 422.4 46.4 424.0 52.2 422.2 C58.0 420.4 59.4 414.6 66.5 412.7 C73.6 410.8 85.4 412.2 94.9 411.1 C104.4 410.0 115.5 407.8 123.4 406.3 C131.3 404.9 134.0 403.2 142.4 402.4 C150.8 401.6 162.6 401.2 174.0 401.6 C185.4 402.0 198.2 404.9 211.0 405.0 C223.8 405.1 237.7 402.8 251.0 402.0 C264.3 401.2 284.3 400.3 291.0 400.0" fill="none" stroke="#e9bf52" stroke-width="3" stroke-linecap="round" stroke-linejoin="round"/>
<path d="M349.0 320.0 C348.8 322.1 347.5 328.4 347.7 332.7 C347.9 336.9 348.4 340.5 350.3 345.3 C352.2 350.2 358.3 355.9 359.1 361.8 C360.0 367.7 354.7 375.9 355.3 380.8 C355.9 385.6 359.1 386.2 362.9 390.9 C366.7 395.5 373.5 404.4 378.1 408.6 C382.7 412.8 388.6 414.9 390.8 416.2" fill="none" stroke="#e9bf52" stroke-width="3" stroke-linecap="round" stroke-linejoin="round"/>
<path d="M330.0 399.7 C333.2 400.0 342.7 399.5 349.0 401.0 C355.3 402.5 361.6 406.5 368.0 408.6 C374.3 410.7 381.9 411.6 387.0 413.7 C392.0 415.8 397.7 418.3 398.4 421.3 C399.0 424.2 394.1 428.3 390.8 431.4 C387.4 434.5 380.2 438.6 378.1 440.0" fill="none" stroke="#e9bf52" stroke-width="3" stroke-linecap="round" stroke-linejoin="round"/>
<path d="M661.6 750.2 C663.0 752.3 664.4 759.4 670.0 762.9 C675.7 766.4 686.9 766.4 695.4 771.3 C703.8 776.2 716.5 788.9 720.7 792.4" fill="none" stroke="#e9bf52" stroke-width="3" stroke-linecap="round" stroke-linejoin="round"/>
<path d="M233.9 726.0 C234.3 728.1 234.4 733.9 236.2 738.6 C238.0 743.3 242.6 748.6 244.9 754.4 C247.1 760.2 248.6 765.6 249.7 773.4 C250.8 781.2 251.0 796.4 251.3 801.0" fill="none" stroke="#e9bf52" stroke-width="3" stroke-linecap="round" stroke-linejoin="round"/>
<path d="M391.0 500.0 C390.3 501.3 389.4 503.5 387.0 507.9 C384.6 512.3 378.7 519.3 376.5 526.4 C374.3 533.4 374.3 546.1 373.8 550.1" fill="none" stroke="#e9bf52" stroke-width="3" stroke-linecap="round" stroke-linejoin="round"/>
<path d="M402.8 500.0 C403.9 504.4 408.3 518.0 409.4 526.4 C410.5 534.7 409.4 546.1 409.4 550.1" fill="none" stroke="#e9bf52" stroke-width="3" stroke-linecap="round" stroke-linejoin="round"/>
<path d="M539.2 0.0 C537.1 5.6 530.8 21.1 526.6 33.8 C522.4 46.4 517.4 63.3 513.9 75.9 C510.4 88.6 508.3 98.5 505.5 109.7 C502.7 121.0 499.5 133.6 497.0 143.5 C494.6 153.3 493.5 158.9 490.7 168.8 C487.9 178.6 484.0 191.3 480.2 202.5 C476.3 213.8 471.7 226.4 467.5 236.3 C463.3 246.1 458.4 251.8 454.9 261.6 C451.3 271.4 448.5 285.2 446.4 295.4 C444.3 305.6 442.9 318.2 442.2 322.8" fill="none" stroke="#ffe168" stroke-width="2" stroke-linecap="round" stroke-linejoin="round"/>
<path d="M0.0 477.6 C7.0 477.3 28.1 477.2 42.2 475.5 C56.3 473.8 70.3 469.3 84.4 467.5 C98.5 465.8 112.5 465.4 126.6 465.0 C140.6 464.6 154.7 465.7 168.8 465.0 C182.8 464.3 196.9 462.9 211.0 460.8 C225.0 458.6 239.1 455.1 253.2 452.3 C267.2 449.5 281.3 445.8 295.4 443.9 C309.4 442.0 323.5 441.8 337.6 440.9 C351.6 440.0 369.3 439.2 379.7 438.4 C390.2 437.6 396.6 436.3 400.0 435.9" fill="none" stroke="#ffe168" stroke-width="2" stroke-linecap="round" stroke-linejoin="round"/>
<path d="M329.1 526.6 C327.7 532.2 323.5 550.5 320.7 560.3 C317.9 570.2 316.5 575.8 312.2 585.7 C308.0 595.5 301.7 608.9 295.4 619.4 C289.0 630.0 281.3 639.1 274.3 648.9 C267.2 658.8 259.5 667.9 253.2 678.5 C246.8 689.0 240.5 702.4 236.3 712.2 C232.1 722.1 230.7 728.4 227.8 737.6 C225.0 746.7 221.5 756.7 219.4 767.1 C217.3 777.5 215.9 794.5 215.2 800.0" fill="none" stroke="#ffe168" stroke-width="2" stroke-linecap="round" stroke-linejoin="round"/>
<path d="M431.6 478.1 C434.1 481.2 441.1 491.8 446.4 497.0 C451.7 502.3 457.0 506.9 463.3 509.7 C469.6 512.5 476.7 513.2 484.4 513.9 C492.1 514.6 499.9 513.9 509.7 513.9 C519.5 513.9 533.6 513.2 543.5 513.9 C553.3 514.6 561.0 516.0 568.8 518.1 C576.5 520.3 583.5 523.1 589.9 526.6 C596.2 530.1 601.1 534.3 606.8 539.2 C612.4 544.2 618.0 549.8 623.6 556.1 C629.3 562.4 636.3 569.5 640.5 577.2 C644.7 585.0 647.2 594.1 648.9 602.5 C650.7 611.0 648.9 619.4 651.1 627.8 C653.2 636.3 657.7 644.7 661.6 653.2 C665.5 661.6 670.7 670.0 674.3 678.5 C677.8 686.9 681.3 696.1 682.7 703.8 C684.1 711.5 684.8 719.3 682.7 724.9 C680.6 730.5 673.6 733.3 670.0 737.6 C666.5 741.8 663.0 748.1 661.6 750.2" fill="none" stroke="#ffe168" stroke-width="2" stroke-linecap="round" stroke-linejoin="round"/>
<path d="M371.3 261.6 C372.4 257.4 377.6 246.1 377.6 236.3 C377.6 226.4 373.8 213.8 371.3 202.5 C368.8 191.3 361.5 179.3 362.9 168.8 C364.3 158.2 376.9 150.5 379.7 139.2 C382.6 128.0 380.1 113.9 379.7 101.3 C379.4 88.6 378.3 73.8 377.6 63.3 C376.9 52.7 375.3 43.8 375.5 38.0 C375.7 32.1 376.5 33.1 378.9 28.3 C381.3 23.5 386.2 14.0 389.9 9.3 C393.5 4.6 399.0 1.5 400.8 0.0" fill="none" stroke="#ffe168" stroke-width="2" stroke-linecap="round" stroke-linejoin="round"/>
<path d="M0.0 438.0 C2.6 436.7 10.5 432.4 15.8 430.0 C21.1 427.6 25.5 425.0 31.6 423.7 C37.7 422.4 46.4 424.0 52.2 422.2 C58.0 420.4 59.4 414.6 66.5 412.7 C73.6 410.8 85.4 412.2 94.9 411.1 C104.4 410.0 115.5 407.8 123.4 406.3 C131.3 404.9 134.0 403.2 142.4 402.4 C150.8 401.6 162.6 401.2 174.0 401.6 C185.4 402.0 198.2 404.9 211.0 405.0 C223.8 405.1 237.7 402.8 251.0 402.0 C264.3 401.2 284.3 400.3 291.0 400.0" fill="none" stroke="#ffe168" stroke-width="2" stroke-linecap="round" stroke-linejoin="round"/>
<path d="M349.0 320.0 C348.8 322.1 347.5 328.4 347.7 332.7 C347.9 336.9 348.4 340.5 350.3 345.3 C352.2 350.2 358.3 355.9 359.1 361.8 C360.0 367.7 354.7 375.9 355.3 380.8 C355.9 385.6 359.1 386.2 362.9 390.9 C366.7 395.5 373.5 404.4 378.1 408.6 C382.7 412.8 388.6 414.9 390.8 416.2" fill="none" stroke="#ffe168" stroke-width="2" stroke-linecap="round" stroke-linejoin="round"/>
<path d="M330.0 399.7 C333.2 400.0 342.7 399.5 349.0 401.0 C355.3 402.5 361.6 406.5 368.0 408.6 C374.3 410.7 381.9 411.6 387.0 413.7 C392.0 415.8 397.7 418.3 398.4 421.3 C399.0 424.2 394.1 428.3 390.8 431.4 C387.4 434.5 380.2 438.6 378.1 440.0" fill="none" stroke="#ffe168" stroke-width="2" stroke-linecap="round" stroke-linejoin="round"/>
<path d="M661.6 750.2 C663.0 752.3 664.4 759.4 670.0 762.9 C675.7 766.4 686.9 766.4 695.4 771.3 C703.8 776.2 716.5 788.9 720.7 792.4" fill="none" stroke="#ffe168" stroke-width="2" stroke-linecap="round" stroke-linejoin="round"/>
<path d="M233.9 726.0 C234.3 728.1 234.4 733.9 236.2 738.6 C238.0 743.3 242.6 748.6 244.9 754.4 C247.1 760.2 248.6 765.6 249.7 773.4 C250.8 781.2 251.0 796.4 251.3 801.0" fill="none" stroke="#ffe168" stroke-width="2" stroke-linecap="round" stroke-linejoin="round"/>
<path d="M391.0 500.0 C390.3 501.3 389.4 503.5 387.0 507.9 C384.6 512.3 378.7 519.3 376.5 526.4 C374.3 533.4 374.3 546.1 373.8 550.1" fill="none" stroke="#ffe168" stroke-width="2" stroke-linecap="round" stroke-linejoin="round"/>
<path d="M402.8 500.0 C403.9 504.4 408.3 518.0 409.4 526.4 C410.5 534.7 409.4 546.1 409.4 550.1" fill="none" stroke="#ffe168" stroke-width="2" stroke-linecap="round" stroke-linejoin="round"/>
<path d="M99.2 10.5 C99.5 12.3 99.9 17.9 101.3 21.1 C102.7 24.3 104.1 26.9 107.6 29.5 C111.1 32.2 118.1 34.7 122.4 37.1 C126.6 39.6 130.8 41.4 132.9 44.3 C135.0 47.3 134.7 50.6 135.0 54.9 C135.4 59.1 134.0 63.6 135.0 69.6 C136.1 75.6 138.9 84.7 141.4 90.7 C143.8 96.7 147.0 100.9 149.8 105.5 C152.6 110.1 155.1 113.6 158.2 118.1 C161.4 122.7 164.9 129.0 168.8 132.9 C172.6 136.8 176.5 139.2 181.4 141.4 C186.4 143.5 193.4 144.5 198.3 145.6 C203.2 146.6 207.1 146.3 211.0 147.7 C214.8 149.1 218.8 151.2 221.5 154.0 C224.2 156.8 225.2 160.7 227.0 164.6 C228.8 168.4 230.2 172.6 232.1 177.2 C234.0 181.8 235.6 186.4 238.4 192.0 C241.2 197.6 245.1 204.6 248.9 211.0 C252.8 217.3 257.4 223.6 261.6 230.0 C265.8 236.3 269.3 241.6 274.3 248.9 C279.2 256.3 286.6 267.6 291.1 274.3 C295.7 280.9 299.9 286.6 301.7 289.0" fill="none" stroke="#e8952a" stroke-width="4.6" stroke-linecap="round" stroke-linejoin="round"/>
<path d="M134.2 44.3 C135.7 44.0 140.6 43.1 143.5 42.2 C146.3 41.3 149.8 39.4 151.1 38.8" fill="none" stroke="#e8952a" stroke-width="4.6" stroke-linecap="round" stroke-linejoin="round"/>
<path d="M200.0 144.8 C201.6 144.9 206.3 144.7 209.5 145.6 C212.7 146.5 217.4 149.3 219.0 150.0" fill="none" stroke="#e8952a" stroke-width="4.6" stroke-linecap="round" stroke-linejoin="round"/>
<path d="M-7.0 423.0 C-5.8 422.3 -3.3 421.0 0.0 419.0 C3.3 417.0 8.7 413.9 12.7 411.0 C16.6 408.1 21.1 403.9 23.7 401.6 C26.2 399.3 27.3 397.8 28.0 397.0" fill="none" stroke="#e8952a" stroke-width="4.6" stroke-linecap="round" stroke-linejoin="round"/>
<path d="M226.9 150.0 L226.9 139.0" fill="none" stroke="#e8952a" stroke-width="4.6" stroke-linecap="round" stroke-linejoin="round"/>
<path d="M24.5 400.0 C23.3 396.6 18.6 385.9 17.7 379.7 C16.8 373.6 18.1 368.5 19.0 362.9 C19.9 357.2 21.1 352.3 23.2 346.0 C25.3 339.7 27.8 332.6 31.6 324.9 C35.5 317.2 41.1 308.0 46.4 299.6 C51.7 291.1 57.7 282.1 63.3 274.3 C68.9 266.4 74.5 259.7 80.2 252.3 C85.8 244.9 91.4 236.0 97.0 230.0 C102.7 223.9 106.9 221.2 113.9 216.0 C121.0 210.9 130.1 204.8 139.2 199.2 C148.4 193.5 158.9 187.5 168.8 182.3 C178.6 177.1 188.8 171.9 198.3 167.9 C207.8 163.9 216.6 162.0 225.7 158.2 C234.9 154.5 245.1 149.4 253.2 145.6 C261.3 141.7 267.2 138.7 274.3 135.0 C281.3 131.3 289.0 127.3 295.4 123.2 C301.7 119.1 306.6 115.0 312.2 110.5 C317.9 106.0 322.8 100.6 329.1 96.2 C335.4 91.8 345.4 89.2 350.2 84.4 C355.0 79.6 356.0 74.5 357.8 67.5 C359.6 60.5 360.8 49.6 360.8 42.2 C360.8 34.8 357.1 28.5 357.8 23.2 C358.5 17.9 362.4 14.4 365.0 10.5 C367.6 6.7 372.0 1.8 373.4 0.0" fill="none" stroke="#e8952a" stroke-width="4.6" stroke-linecap="round" stroke-linejoin="round"/>
<path d="M286.9 0.0 C288.7 2.1 293.2 7.6 297.5 12.7 C301.7 17.7 310.5 23.3 312.2 30.4 C314.0 37.4 308.0 46.6 308.0 54.9 C308.0 63.2 309.4 71.0 312.2 80.2 C315.0 89.3 321.6 98.1 324.9 109.7 C328.2 121.3 329.9 140.7 332.0 150.0 C334.1 159.3 334.8 160.1 337.2 165.8 C339.6 171.5 343.0 177.7 346.5 184.3 C350.0 190.9 355.8 199.2 358.3 205.4 C360.9 211.6 361.2 215.5 361.8 221.2 C362.4 226.9 360.6 234.0 361.8 239.7 C363.0 245.4 366.6 250.7 368.9 255.5 C371.2 260.3 373.5 263.4 375.5 268.7 C377.5 274.0 379.0 281.0 380.7 287.1 C382.4 293.2 384.3 299.9 385.5 305.6 C386.7 311.3 388.1 315.8 388.1 321.4 C388.1 327.0 386.0 334.2 385.7 339.0 C385.4 343.8 386.1 346.6 386.3 350.4 C386.5 354.2 387.1 358.0 387.0 361.8 C386.9 365.6 386.1 369.6 385.7 373.2 C385.3 376.8 383.8 380.3 384.4 383.3 C385.1 386.2 387.6 388.4 389.5 390.9 C391.4 393.4 393.7 395.9 395.8 398.5 C397.9 401.0 400.0 403.8 402.2 406.1 C404.3 408.4 405.9 410.7 408.5 412.4 C411.0 414.1 415.9 415.6 417.3 416.2" fill="none" stroke="#e8952a" stroke-width="4.6" stroke-linecap="round" stroke-linejoin="round"/>
<path d="M312.2 31.6 C315.8 30.0 325.7 23.8 333.3 21.9 C340.9 20.0 353.7 20.5 357.8 20.3" fill="none" stroke="#e8952a" stroke-width="4.6" stroke-linecap="round" stroke-linejoin="round"/>
<path d="M400.0 260.8 C395.2 261.3 379.6 262.2 371.3 263.7 C363.0 265.3 358.6 267.4 350.2 270.0 C341.8 272.6 328.8 276.2 320.7 279.3 C312.6 282.5 308.0 286.0 301.7 289.0 C295.4 292.1 287.4 294.4 282.7 297.5 C278.0 300.5 275.5 301.2 273.4 307.2 C271.3 313.2 270.6 324.8 270.0 333.3 C269.5 341.9 270.4 350.9 270.0 358.6 C269.7 366.4 268.6 372.9 267.9 379.7 C267.2 386.6 265.8 393.8 265.8 400.0 C265.8 406.2 265.8 410.5 267.9 416.9 C270.0 423.2 273.9 431.6 278.5 438.0 C283.1 444.3 290.1 448.5 295.4 454.9 C300.6 461.2 307.0 469.6 310.1 475.9 C313.3 482.3 314.3 487.2 314.3 492.8 C314.3 498.5 308.4 504.1 310.1 509.7 C311.9 515.3 319.6 521.0 324.9 526.6 C330.2 532.2 336.1 538.5 341.8 543.5 C347.4 548.4 352.3 553.7 358.6 556.1 C365.0 558.6 372.9 557.9 379.7 558.2 C386.6 558.6 395.2 558.2 400.0 558.2 C404.8 558.2 404.2 560.0 408.4 558.2 C412.7 556.5 420.4 550.8 425.3 547.7 C430.2 544.5 434.8 542.1 438.0 539.2 C441.1 536.4 443.2 532.2 444.3 530.8" fill="none" stroke="#e8952a" stroke-width="4.6" stroke-linecap="round" stroke-linejoin="round"/>
<path d="M0.0 244.7 C3.5 244.5 13.4 244.5 21.1 243.5 C28.8 242.4 38.7 238.9 46.4 238.4 C54.1 237.9 60.1 239.5 67.5 240.5 C74.9 241.6 84.0 242.6 90.7 244.7 C97.4 246.8 102.3 248.9 107.6 253.2 C112.9 257.4 117.8 263.7 122.4 270.0 C126.9 276.4 132.9 287.6 135.0 291.1" fill="none" stroke="#e8952a" stroke-width="4.6" stroke-linecap="round" stroke-linejoin="round"/>
<path d="M270.0 337.6 C274.3 338.3 286.9 339.7 295.4 341.8 C303.8 343.9 311.5 346.6 320.7 350.2 C329.8 353.9 346.5 362.2 350.2 363.7 C353.9 365.2 341.4 359.1 342.7 359.2 C343.9 359.3 355.3 363.5 357.8 364.3" fill="none" stroke="#e8952a" stroke-width="4.6" stroke-linecap="round" stroke-linejoin="round"/>
<path d="M507.6 0.0 C506.2 3.5 502.2 14.1 499.2 21.1 C496.1 28.1 492.5 34.5 489.5 42.2 C486.4 49.9 482.9 58.4 481.0 67.5 C479.1 76.7 478.9 87.2 478.1 97.0 C477.2 106.9 475.6 118.1 475.9 126.6 C476.3 135.0 478.1 140.6 480.2 147.7 C482.3 154.7 487.4 162.4 488.6 168.8 C489.8 175.1 488.9 180.0 487.3 185.7 C485.8 191.3 481.8 196.2 479.3 202.5 C476.9 208.9 473.5 218.1 472.6 223.6 C471.7 229.1 472.9 232.6 473.8 235.4 C474.8 238.3 477.4 239.7 478.1 240.5" fill="none" stroke="#e8952a" stroke-width="4.6" stroke-linecap="round" stroke-linejoin="round"/>
<path d="M397.5 259.1 C400.0 258.6 407.3 257.5 412.7 256.5 C418.0 255.6 423.2 254.3 429.5 253.2 C435.9 252.0 444.3 251.2 450.6 249.8 C457.0 248.4 462.9 246.3 467.5 244.7 C472.1 243.2 474.2 241.6 478.1 240.5 C481.9 239.5 486.8 240.5 490.7 238.4 C494.6 236.3 498.1 232.4 501.3 227.8 C504.4 223.3 506.9 215.9 509.7 211.0 C512.5 206.0 513.9 201.5 518.1 198.3 C522.4 195.1 528.7 193.0 535.0 192.0 C541.4 190.9 549.8 192.0 556.1 192.0 C562.4 192.0 568.1 193.0 573.0 192.0 C577.9 190.9 582.1 188.1 585.7 185.7 C589.2 183.2 589.2 179.0 594.1 177.2 C599.0 175.5 608.5 175.5 615.2 175.1 C621.9 174.8 628.6 177.6 634.2 175.1 C639.8 172.6 644.4 164.9 648.9 160.3 C653.5 155.8 657.4 150.8 661.6 147.7 C665.8 144.5 669.7 142.4 674.3 141.4 C678.8 140.3 685.5 140.6 689.0 141.4 C692.5 142.1 694.3 144.9 695.4 145.6" fill="none" stroke="#e8952a" stroke-width="4.6" stroke-linecap="round" stroke-linejoin="round"/>
<path d="M441.1 318.5 C441.2 318.7 441.6 318.9 441.4 320.0 C441.2 321.1 439.2 323.2 440.1 325.1 C441.1 327.0 446.5 329.3 447.1 331.4 C447.7 333.5 445.5 335.4 443.9 337.7 C442.3 340.0 438.4 342.8 437.6 345.3 C436.8 347.8 439.3 350.2 438.9 352.9 C438.4 355.7 436.3 358.8 435.1 361.8 C433.8 364.7 432.5 367.7 431.3 370.6 C430.0 373.6 428.7 376.1 427.5 379.5 C426.2 382.9 424.7 387.7 423.7 390.9 C422.6 394.1 422.0 395.5 421.1 398.5 C420.3 401.4 419.2 405.7 418.6 408.6 C418.0 411.6 417.6 414.9 417.3 416.2" fill="none" stroke="#e8952a" stroke-width="4.6" stroke-linecap="round" stroke-linejoin="round"/>
<path d="M418.6 416.2 C420.7 415.9 427.7 415.6 431.3 414.3 C434.9 413.0 438.4 411.2 440.1 408.6 C441.8 406.0 441.4 401.4 441.4 398.5 C441.4 395.5 439.7 393.4 440.1 390.9 C440.5 388.4 442.0 386.0 443.9 383.3 C445.8 380.5 450.3 375.9 451.5 374.4" fill="none" stroke="#e8952a" stroke-width="4.6" stroke-linecap="round" stroke-linejoin="round"/>
<path d="M24.5 400.0 C27.1 402.8 36.8 409.8 40.1 416.9 C43.4 423.9 43.2 433.8 44.3 442.2 C45.4 450.6 45.4 459.4 46.4 467.5 C47.5 475.6 48.9 482.3 50.6 490.7 C52.4 499.2 54.9 509.4 57.0 518.1 C59.1 526.9 60.1 535.0 63.3 543.5 C66.5 551.9 70.3 560.3 75.9 568.8 C81.6 577.2 91.4 586.4 97.0 594.1 C102.7 601.8 106.2 608.2 109.7 615.2 C113.2 622.2 114.6 630.0 118.1 636.3 C121.7 642.6 126.2 648.6 130.8 653.2 C135.4 657.7 140.6 658.8 145.6 663.7 C150.5 668.6 154.4 676.7 160.3 682.7 C166.3 688.7 174.4 694.3 181.4 699.6 C188.5 704.9 196.2 710.8 202.5 714.3 C208.9 717.9 212.4 719.6 219.4 720.7 C226.4 721.7 236.3 719.6 244.7 720.7 C253.2 721.7 261.6 724.2 270.0 727.0 C278.5 729.8 286.9 733.0 295.4 737.6 C303.8 742.1 312.9 748.8 320.7 754.4 C328.4 760.1 335.4 766.4 341.8 771.3 C348.1 776.2 352.3 780.5 358.6 784.0 C365.0 787.5 372.9 790.3 379.7 792.4 C386.6 794.5 394.5 795.6 400.0 796.6 C405.5 797.6 408.4 797.3 412.7 798.3 C416.9 799.4 423.2 802.2 425.3 803.0" fill="none" stroke="#e8952a" stroke-width="4.6" stroke-linecap="round" stroke-linejoin="round"/>
<path d="M-7.0 542.0 C-5.8 541.3 -3.8 540.3 0.0 537.7 C3.8 535.1 11.1 530.3 15.8 526.6 C20.6 522.9 24.5 519.7 28.5 515.5 C32.5 511.3 36.4 504.7 39.6 501.3 C42.8 497.9 44.1 496.7 47.5 494.9 C50.9 493.1 54.8 492.3 60.1 490.2 C65.4 488.1 72.8 484.9 79.1 482.3 C85.4 479.7 92.3 477.6 98.1 474.4 C103.9 471.2 109.1 465.7 113.9 463.3 C118.6 460.9 121.9 461.9 126.6 460.1 C131.4 458.3 137.1 454.3 142.4 452.2 C147.7 450.1 152.9 448.3 158.2 447.5 C163.5 446.7 168.8 447.0 174.1 447.5 C179.4 448.0 185.6 450.7 189.9 450.6 C194.2 450.5 196.6 447.8 200.0 446.7 C203.4 445.7 205.2 446.4 210.3 444.3 C215.4 442.2 222.7 437.0 230.6 434.2 C238.5 431.4 247.5 429.9 257.6 427.4 C267.7 424.9 280.5 420.9 291.0 419.0 C301.5 417.1 312.1 418.2 320.7 416.0 C329.3 413.8 335.8 407.5 342.7 406.1 C349.5 404.6 356.8 407.1 361.6 407.3 C366.5 407.6 368.6 406.5 371.8 407.6 C374.9 408.6 377.0 412.2 380.6 413.7 C384.2 415.1 389.1 415.7 393.3 416.2 C397.5 416.7 401.7 416.8 405.9 416.8 C410.2 416.8 416.5 416.3 418.6 416.2" fill="none" stroke="#e8952a" stroke-width="4.6" stroke-linecap="round" stroke-linejoin="round"/>
<path d="M358.6 556.1 C355.1 560.3 344.6 573.0 337.6 581.4 C330.5 589.9 322.8 599.0 316.5 606.8 C310.1 614.5 303.4 620.8 299.6 627.8 C295.7 634.9 293.6 641.9 293.2 648.9 C292.9 656.0 297.1 663.0 297.5 670.0 C297.8 677.1 297.1 684.1 295.4 691.1 C293.6 698.2 290.4 705.9 286.9 712.2 C283.4 718.6 279.2 722.8 274.3 729.1 C269.3 735.4 262.0 743.2 257.4 750.2 C252.8 757.2 249.3 763.0 246.8 771.3 C244.4 779.6 243.3 795.2 242.6 800.0" fill="none" stroke="#e8952a" stroke-width="4.6" stroke-linecap="round" stroke-linejoin="round"/>
<path d="M0.0 707.0 C2.1 710.5 7.4 721.9 12.7 728.0 C18.0 734.1 26.6 740.0 31.6 743.7 C36.6 747.4 39.5 748.0 43.0 750.0 C46.5 752.0 50.4 753.6 52.6 755.7 C54.8 757.8 54.0 759.0 56.4 762.4 C58.8 765.8 63.6 772.6 66.9 775.8 C70.2 779.0 72.5 779.6 76.5 781.5 C80.5 783.4 87.0 785.4 90.8 787.3 C94.6 789.2 97.0 790.7 99.4 793.0 C101.8 795.3 104.2 799.7 105.2 801.0" fill="none" stroke="#e8952a" stroke-width="4.6" stroke-linecap="round" stroke-linejoin="round"/>
<path d="M106.1 778.7 C106.2 780.6 106.7 786.1 107.0 790.0 C107.3 793.9 107.8 800.0 108.0 802.0" fill="none" stroke="#e8952a" stroke-width="4.6" stroke-linecap="round" stroke-linejoin="round"/>
<path d="M417.3 416.2 C416.5 417.5 412.7 421.3 412.3 423.8 C411.9 426.3 413.8 429.1 414.8 431.4 C415.9 433.7 417.9 435.9 418.6 437.7 C419.3 439.5 417.5 436.5 419.0 442.2 C420.5 447.9 425.3 463.3 427.4 471.7 C429.5 480.2 429.5 485.8 431.6 492.8 C433.8 499.9 438.0 507.6 440.1 513.9 C442.2 520.3 443.6 528.0 444.3 530.8" fill="none" stroke="#e8952a" stroke-width="4.6" stroke-linecap="round" stroke-linejoin="round"/>
<path d="M444.3 532.9 C446.1 533.3 451.7 531.9 454.9 535.0 C458.0 538.2 458.4 547.0 463.3 551.9 C468.2 556.8 476.7 561.0 484.4 564.6 C492.1 568.1 501.3 568.8 509.7 573.0 C518.1 577.2 525.9 584.6 535.0 589.9 C544.2 595.1 555.4 599.0 564.6 604.6 C573.7 610.3 581.4 617.7 589.9 623.6 C598.3 629.6 607.5 634.9 615.2 640.5 C622.9 646.1 630.0 650.4 636.3 657.4 C642.6 664.4 648.9 673.6 653.2 682.7 C657.4 691.8 660.5 703.1 661.6 712.2 C662.7 721.4 659.1 729.1 659.5 737.6 C659.8 746.0 661.3 755.8 663.7 762.9 C666.2 769.9 670.4 774.8 674.3 779.7 C678.1 784.7 683.4 789.0 686.9 792.4 C690.4 795.8 694.0 798.7 695.4 800.0" fill="none" stroke="#e8952a" stroke-width="4.6" stroke-linecap="round" stroke-linejoin="round"/>
<path d="M406.3 560.3 C407.0 565.3 408.8 579.3 410.5 589.9 C412.3 600.4 415.5 613.1 416.9 623.6 C418.3 634.2 419.0 642.6 419.0 653.2 C419.0 663.7 415.8 675.7 416.9 686.9 C417.9 698.2 422.2 710.1 425.3 720.7 C428.5 731.2 433.1 740.4 435.9 750.2 C438.7 760.1 441.1 771.4 442.2 779.7 C443.2 788.0 442.2 796.6 442.2 800.0" fill="none" stroke="#e8952a" stroke-width="4.6" stroke-linecap="round" stroke-linejoin="round"/>
<path d="M99.2 10.5 C99.5 12.3 99.9 17.9 101.3 21.1 C102.7 24.3 104.1 26.9 107.6 29.5 C111.1 32.2 118.1 34.7 122.4 37.1 C126.6 39.6 130.8 41.4 132.9 44.3 C135.0 47.3 134.7 50.6 135.0 54.9 C135.4 59.1 134.0 63.6 135.0 69.6 C136.1 75.6 138.9 84.7 141.4 90.7 C143.8 96.7 147.0 100.9 149.8 105.5 C152.6 110.1 155.1 113.6 158.2 118.1 C161.4 122.7 164.9 129.0 168.8 132.9 C172.6 136.8 176.5 139.2 181.4 141.4 C186.4 143.5 193.4 144.5 198.3 145.6 C203.2 146.6 207.1 146.3 211.0 147.7 C214.8 149.1 218.8 151.2 221.5 154.0 C224.2 156.8 225.2 160.7 227.0 164.6 C228.8 168.4 230.2 172.6 232.1 177.2 C234.0 181.8 235.6 186.4 238.4 192.0 C241.2 197.6 245.1 204.6 248.9 211.0 C252.8 217.3 257.4 223.6 261.6 230.0 C265.8 236.3 269.3 241.6 274.3 248.9 C279.2 256.3 286.6 267.6 291.1 274.3 C295.7 280.9 299.9 286.6 301.7 289.0" fill="none" stroke="#f9a732" stroke-width="3.4" stroke-linecap="round" stroke-linejoin="round"/>
<path d="M134.2 44.3 C135.7 44.0 140.6 43.1 143.5 42.2 C146.3 41.3 149.8 39.4 151.1 38.8" fill="none" stroke="#f9a732" stroke-width="3.4" stroke-linecap="round" stroke-linejoin="round"/>
<path d="M200.0 144.8 C201.6 144.9 206.3 144.7 209.5 145.6 C212.7 146.5 217.4 149.3 219.0 150.0" fill="none" stroke="#f9a732" stroke-width="3.4" stroke-linecap="round" stroke-linejoin="round"/>
<path d="M-7.0 423.0 C-5.8 422.3 -3.3 421.0 0.0 419.0 C3.3 417.0 8.7 413.9 12.7 411.0 C16.6 408.1 21.1 403.9 23.7 401.6 C26.2 399.3 27.3 397.8 28.0 397.0" fill="none" stroke="#f9a732" stroke-width="3.4" stroke-linecap="round" stroke-linejoin="round"/>
<path d="M226.9 150.0 L226.9 139.0" fill="none" stroke="#f9a732" stroke-width="3.4" stroke-linecap="round" stroke-linejoin="round"/>
<path d="M24.5 400.0 C23.3 396.6 18.6 385.9 17.7 379.7 C16.8 373.6 18.1 368.5 19.0 362.9 C19.9 357.2 21.1 352.3 23.2 346.0 C25.3 339.7 27.8 332.6 31.6 324.9 C35.5 317.2 41.1 308.0 46.4 299.6 C51.7 291.1 57.7 282.1 63.3 274.3 C68.9 266.4 74.5 259.7 80.2 252.3 C85.8 244.9 91.4 236.0 97.0 230.0 C102.7 223.9 106.9 221.2 113.9 216.0 C121.0 210.9 130.1 204.8 139.2 199.2 C148.4 193.5 158.9 187.5 168.8 182.3 C178.6 177.1 188.8 171.9 198.3 167.9 C207.8 163.9 216.6 162.0 225.7 158.2 C234.9 154.5 245.1 149.4 253.2 145.6 C261.3 141.7 267.2 138.7 274.3 135.0 C281.3 131.3 289.0 127.3 295.4 123.2 C301.7 119.1 306.6 115.0 312.2 110.5 C317.9 106.0 322.8 100.6 329.1 96.2 C335.4 91.8 345.4 89.2 350.2 84.4 C355.0 79.6 356.0 74.5 357.8 67.5 C359.6 60.5 360.8 49.6 360.8 42.2 C360.8 34.8 357.1 28.5 357.8 23.2 C358.5 17.9 362.4 14.4 365.0 10.5 C367.6 6.7 372.0 1.8 373.4 0.0" fill="none" stroke="#f9a732" stroke-width="3.4" stroke-linecap="round" stroke-linejoin="round"/>
<path d="M286.9 0.0 C288.7 2.1 293.2 7.6 297.5 12.7 C301.7 17.7 310.5 23.3 312.2 30.4 C314.0 37.4 308.0 46.6 308.0 54.9 C308.0 63.2 309.4 71.0 312.2 80.2 C315.0 89.3 321.6 98.1 324.9 109.7 C328.2 121.3 329.9 140.7 332.0 150.0 C334.1 159.3 334.8 160.1 337.2 165.8 C339.6 171.5 343.0 177.7 346.5 184.3 C350.0 190.9 355.8 199.2 358.3 205.4 C360.9 211.6 361.2 215.5 361.8 221.2 C362.4 226.9 360.6 234.0 361.8 239.7 C363.0 245.4 366.6 250.7 368.9 255.5 C371.2 260.3 373.5 263.4 375.5 268.7 C377.5 274.0 379.0 281.0 380.7 287.1 C382.4 293.2 384.3 299.9 385.5 305.6 C386.7 311.3 388.1 315.8 388.1 321.4 C388.1 327.0 386.0 334.2 385.7 339.0 C385.4 343.8 386.1 346.6 386.3 350.4 C386.5 354.2 387.1 358.0 387.0 361.8 C386.9 365.6 386.1 369.6 385.7 373.2 C385.3 376.8 383.8 380.3 384.4 383.3 C385.1 386.2 387.6 388.4 389.5 390.9 C391.4 393.4 393.7 395.9 395.8 398.5 C397.9 401.0 400.0 403.8 402.2 406.1 C404.3 408.4 405.9 410.7 408.5 412.4 C411.0 414.1 415.9 415.6 417.3 416.2" fill="none" stroke="#f9a732" stroke-width="3.4" stroke-linecap="round" stroke-linejoin="round"/>
<path d="M312.2 31.6 C315.8 30.0 325.7 23.8 333.3 21.9 C340.9 20.0 353.7 20.5 357.8 20.3" fill="none" stroke="#f9a732" stroke-width="3.4" stroke-linecap="round" stroke-linejoin="round"/>
<path d="M400.0 260.8 C395.2 261.3 379.6 262.2 371.3 263.7 C363.0 265.3 358.6 267.4 350.2 270.0 C341.8 272.6 328.8 276.2 320.7 279.3 C312.6 282.5 308.0 286.0 301.7 289.0 C295.4 292.1 287.4 294.4 282.7 297.5 C278.0 300.5 275.5 301.2 273.4 307.2 C271.3 313.2 270.6 324.8 270.0 333.3 C269.5 341.9 270.4 350.9 270.0 358.6 C269.7 366.4 268.6 372.9 267.9 379.7 C267.2 386.6 265.8 393.8 265.8 400.0 C265.8 406.2 265.8 410.5 267.9 416.9 C270.0 423.2 273.9 431.6 278.5 438.0 C283.1 444.3 290.1 448.5 295.4 454.9 C300.6 461.2 307.0 469.6 310.1 475.9 C313.3 482.3 314.3 487.2 314.3 492.8 C314.3 498.5 308.4 504.1 310.1 509.7 C311.9 515.3 319.6 521.0 324.9 526.6 C330.2 532.2 336.1 538.5 341.8 543.5 C347.4 548.4 352.3 553.7 358.6 556.1 C365.0 558.6 372.9 557.9 379.7 558.2 C386.6 558.6 395.2 558.2 400.0 558.2 C404.8 558.2 404.2 560.0 408.4 558.2 C412.7 556.5 420.4 550.8 425.3 547.7 C430.2 544.5 434.8 542.1 438.0 539.2 C441.1 536.4 443.2 532.2 444.3 530.8" fill="none" stroke="#f9a732" stroke-width="3.4" stroke-linecap="round" stroke-linejoin="round"/>
<path d="M0.0 244.7 C3.5 244.5 13.4 244.5 21.1 243.5 C28.8 242.4 38.7 238.9 46.4 238.4 C54.1 237.9 60.1 239.5 67.5 240.5 C74.9 241.6 84.0 242.6 90.7 244.7 C97.4 246.8 102.3 248.9 107.6 253.2 C112.9 257.4 117.8 263.7 122.4 270.0 C126.9 276.4 132.9 287.6 135.0 291.1" fill="none" stroke="#f9a732" stroke-width="3.4" stroke-linecap="round" stroke-linejoin="round"/>
<path d="M270.0 337.6 C274.3 338.3 286.9 339.7 295.4 341.8 C303.8 343.9 311.5 346.6 320.7 350.2 C329.8 353.9 346.5 362.2 350.2 363.7 C353.9 365.2 341.4 359.1 342.7 359.2 C343.9 359.3 355.3 363.5 357.8 364.3" fill="none" stroke="#f9a732" stroke-width="3.4" stroke-linecap="round" stroke-linejoin="round"/>
<path d="M507.6 0.0 C506.2 3.5 502.2 14.1 499.2 21.1 C496.1 28.1 492.5 34.5 489.5 42.2 C486.4 49.9 482.9 58.4 481.0 67.5 C479.1 76.7 478.9 87.2 478.1 97.0 C477.2 106.9 475.6 118.1 475.9 126.6 C476.3 135.0 478.1 140.6 480.2 147.7 C482.3 154.7 487.4 162.4 488.6 168.8 C489.8 175.1 488.9 180.0 487.3 185.7 C485.8 191.3 481.8 196.2 479.3 202.5 C476.9 208.9 473.5 218.1 472.6 223.6 C471.7 229.1 472.9 232.6 473.8 235.4 C474.8 238.3 477.4 239.7 478.1 240.5" fill="none" stroke="#f9a732" stroke-width="3.4" stroke-linecap="round" stroke-linejoin="round"/>
<path d="M397.5 259.1 C400.0 258.6 407.3 257.5 412.7 256.5 C418.0 255.6 423.2 254.3 429.5 253.2 C435.9 252.0 444.3 251.2 450.6 249.8 C457.0 248.4 462.9 246.3 467.5 244.7 C472.1 243.2 474.2 241.6 478.1 240.5 C481.9 239.5 486.8 240.5 490.7 238.4 C494.6 236.3 498.1 232.4 501.3 227.8 C504.4 223.3 506.9 215.9 509.7 211.0 C512.5 206.0 513.9 201.5 518.1 198.3 C522.4 195.1 528.7 193.0 535.0 192.0 C541.4 190.9 549.8 192.0 556.1 192.0 C562.4 192.0 568.1 193.0 573.0 192.0 C577.9 190.9 582.1 188.1 585.7 185.7 C589.2 183.2 589.2 179.0 594.1 177.2 C599.0 175.5 608.5 175.5 615.2 175.1 C621.9 174.8 628.6 177.6 634.2 175.1 C639.8 172.6 644.4 164.9 648.9 160.3 C653.5 155.8 657.4 150.8 661.6 147.7 C665.8 144.5 669.7 142.4 674.3 141.4 C678.8 140.3 685.5 140.6 689.0 141.4 C692.5 142.1 694.3 144.9 695.4 145.6" fill="none" stroke="#f9a732" stroke-width="3.4" stroke-linecap="round" stroke-linejoin="round"/>
<path d="M441.1 318.5 C441.2 318.7 441.6 318.9 441.4 320.0 C441.2 321.1 439.2 323.2 440.1 325.1 C441.1 327.0 446.5 329.3 447.1 331.4 C447.7 333.5 445.5 335.4 443.9 337.7 C442.3 340.0 438.4 342.8 437.6 345.3 C436.8 347.8 439.3 350.2 438.9 352.9 C438.4 355.7 436.3 358.8 435.1 361.8 C433.8 364.7 432.5 367.7 431.3 370.6 C430.0 373.6 428.7 376.1 427.5 379.5 C426.2 382.9 424.7 387.7 423.7 390.9 C422.6 394.1 422.0 395.5 421.1 398.5 C420.3 401.4 419.2 405.7 418.6 408.6 C418.0 411.6 417.6 414.9 417.3 416.2" fill="none" stroke="#f9a732" stroke-width="3.4" stroke-linecap="round" stroke-linejoin="round"/>
<path d="M418.6 416.2 C420.7 415.9 427.7 415.6 431.3 414.3 C434.9 413.0 438.4 411.2 440.1 408.6 C441.8 406.0 441.4 401.4 441.4 398.5 C441.4 395.5 439.7 393.4 440.1 390.9 C440.5 388.4 442.0 386.0 443.9 383.3 C445.8 380.5 450.3 375.9 451.5 374.4" fill="none" stroke="#f9a732" stroke-width="3.4" stroke-linecap="round" stroke-linejoin="round"/>
<path d="M24.5 400.0 C27.1 402.8 36.8 409.8 40.1 416.9 C43.4 423.9 43.2 433.8 44.3 442.2 C45.4 450.6 45.4 459.4 46.4 467.5 C47.5 475.6 48.9 482.3 50.6 490.7 C52.4 499.2 54.9 509.4 57.0 518.1 C59.1 526.9 60.1 535.0 63.3 543.5 C66.5 551.9 70.3 560.3 75.9 568.8 C81.6 577.2 91.4 586.4 97.0 594.1 C102.7 601.8 106.2 608.2 109.7 615.2 C113.2 622.2 114.6 630.0 118.1 636.3 C121.7 642.6 126.2 648.6 130.8 653.2 C135.4 657.7 140.6 658.8 145.6 663.7 C150.5 668.6 154.4 676.7 160.3 682.7 C166.3 688.7 174.4 694.3 181.4 699.6 C188.5 704.9 196.2 710.8 202.5 714.3 C208.9 717.9 212.4 719.6 219.4 720.7 C226.4 721.7 236.3 719.6 244.7 720.7 C253.2 721.7 261.6 724.2 270.0 727.0 C278.5 729.8 286.9 733.0 295.4 737.6 C303.8 742.1 312.9 748.8 320.7 754.4 C328.4 760.1 335.4 766.4 341.8 771.3 C348.1 776.2 352.3 780.5 358.6 784.0 C365.0 787.5 372.9 790.3 379.7 792.4 C386.6 794.5 394.5 795.6 400.0 796.6 C405.5 797.6 408.4 797.3 412.7 798.3 C416.9 799.4 423.2 802.2 425.3 803.0" fill="none" stroke="#f9a732" stroke-width="3.4" stroke-linecap="round" stroke-linejoin="round"/>
<path d="M-7.0 542.0 C-5.8 541.3 -3.8 540.3 0.0 537.7 C3.8 535.1 11.1 530.3 15.8 526.6 C20.6 522.9 24.5 519.7 28.5 515.5 C32.5 511.3 36.4 504.7 39.6 501.3 C42.8 497.9 44.1 496.7 47.5 494.9 C50.9 493.1 54.8 492.3 60.1 490.2 C65.4 488.1 72.8 484.9 79.1 482.3 C85.4 479.7 92.3 477.6 98.1 474.4 C103.9 471.2 109.1 465.7 113.9 463.3 C118.6 460.9 121.9 461.9 126.6 460.1 C131.4 458.3 137.1 454.3 142.4 452.2 C147.7 450.1 152.9 448.3 158.2 447.5 C163.5 446.7 168.8 447.0 174.1 447.5 C179.4 448.0 185.6 450.7 189.9 450.6 C194.2 450.5 196.6 447.8 200.0 446.7 C203.4 445.7 205.2 446.4 210.3 444.3 C215.4 442.2 222.7 437.0 230.6 434.2 C238.5 431.4 247.5 429.9 257.6 427.4 C267.7 424.9 280.5 420.9 291.0 419.0 C301.5 417.1 312.1 418.2 320.7 416.0 C329.3 413.8 335.8 407.5 342.7 406.1 C349.5 404.6 356.8 407.1 361.6 407.3 C366.5 407.6 368.6 406.5 371.8 407.6 C374.9 408.6 377.0 412.2 380.6 413.7 C384.2 415.1 389.1 415.7 393.3 416.2 C397.5 416.7 401.7 416.8 405.9 416.8 C410.2 416.8 416.5 416.3 418.6 416.2" fill="none" stroke="#f9a732" stroke-width="3.4" stroke-linecap="round" stroke-linejoin="round"/>
<path d="M358.6 556.1 C355.1 560.3 344.6 573.0 337.6 581.4 C330.5 589.9 322.8 599.0 316.5 606.8 C310.1 614.5 303.4 620.8 299.6 627.8 C295.7 634.9 293.6 641.9 293.2 648.9 C292.9 656.0 297.1 663.0 297.5 670.0 C297.8 677.1 297.1 684.1 295.4 691.1 C293.6 698.2 290.4 705.9 286.9 712.2 C283.4 718.6 279.2 722.8 274.3 729.1 C269.3 735.4 262.0 743.2 257.4 750.2 C252.8 757.2 249.3 763.0 246.8 771.3 C244.4 779.6 243.3 795.2 242.6 800.0" fill="none" stroke="#f9a732" stroke-width="3.4" stroke-linecap="round" stroke-linejoin="round"/>
<path d="M0.0 707.0 C2.1 710.5 7.4 721.9 12.7 728.0 C18.0 734.1 26.6 740.0 31.6 743.7 C36.6 747.4 39.5 748.0 43.0 750.0 C46.5 752.0 50.4 753.6 52.6 755.7 C54.8 757.8 54.0 759.0 56.4 762.4 C58.8 765.8 63.6 772.6 66.9 775.8 C70.2 779.0 72.5 779.6 76.5 781.5 C80.5 783.4 87.0 785.4 90.8 787.3 C94.6 789.2 97.0 790.7 99.4 793.0 C101.8 795.3 104.2 799.7 105.2 801.0" fill="none" stroke="#f9a732" stroke-width="3.4" stroke-linecap="round" stroke-linejoin="round"/>
<path d="M106.1 778.7 C106.2 780.6 106.7 786.1 107.0 790.0 C107.3 793.9 107.8 800.0 108.0 802.0" fill="none" stroke="#f9a732" stroke-width="3.4" stroke-linecap="round" stroke-linejoin="round"/>
<path d="M417.3 416.2 C416.5 417.5 412.7 421.3 412.3 423.8 C411.9 426.3 413.8 429.1 414.8 431.4 C415.9 433.7 417.9 435.9 418.6 437.7 C419.3 439.5 417.5 436.5 419.0 442.2 C420.5 447.9 425.3 463.3 427.4 471.7 C429.5 480.2 429.5 485.8 431.6 492.8 C433.8 499.9 438.0 507.6 440.1 513.9 C442.2 520.3 443.6 528.0 444.3 530.8" fill="none" stroke="#f9a732" stroke-width="3.4" stroke-linecap="round" stroke-linejoin="round"/>
<path d="M444.3 532.9 C446.1 533.3 451.7 531.9 454.9 535.0 C458.0 538.2 458.4 547.0 463.3 551.9 C468.2 556.8 476.7 561.0 484.4 564.6 C492.1 568.1 501.3 568.8 509.7 573.0 C518.1 577.2 525.9 584.6 535.0 589.9 C544.2 595.1 555.4 599.0 564.6 604.6 C573.7 610.3 581.4 617.7 589.9 623.6 C598.3 629.6 607.5 634.9 615.2 640.5 C622.9 646.1 630.0 650.4 636.3 657.4 C642.6 664.4 648.9 673.6 653.2 682.7 C657.4 691.8 660.5 703.1 661.6 712.2 C662.7 721.4 659.1 729.1 659.5 737.6 C659.8 746.0 661.3 755.8 663.7 762.9 C666.2 769.9 670.4 774.8 674.3 779.7 C678.1 784.7 683.4 789.0 686.9 792.4 C690.4 795.8 694.0 798.7 695.4 800.0" fill="none" stroke="#f9a732" stroke-width="3.4" stroke-linecap="round" stroke-linejoin="round"/>
<path d="M406.3 560.3 C407.0 565.3 408.8 579.3 410.5 589.9 C412.3 600.4 415.5 613.1 416.9 623.6 C418.3 634.2 419.0 642.6 419.0 653.2 C419.0 663.7 415.8 675.7 416.9 686.9 C417.9 698.2 422.2 710.1 425.3 720.7 C428.5 731.2 433.1 740.4 435.9 750.2 C438.7 760.1 441.1 771.4 442.2 779.7 C443.2 788.0 442.2 796.6 442.2 800.0" fill="none" stroke="#f9a732" stroke-width="3.4" stroke-linecap="round" stroke-linejoin="round"/>
<g font-size="9.5" text-anchor="middle" font-weight="bold"><g transform="translate(150.0 111.0)"><path d="M-7 -7.500 q3.500 2 7 0 q3.500 2 7 0 q1.500 4 0 7.500 q0 5 -7 8 q-7 -3 -7 -8 q-1.500 -3.500 0 -7.500z" fill="#fff" stroke="#333" stroke-width="1.100"/><text y="3.500" fill="#222">3</text></g><g transform="translate(9.0 130.0)"><rect x="-11.0" y="-6.500" width="22" height="13" rx="5.500" fill="#fff" stroke="#333" stroke-width="1.100"/><text y="3.400" fill="#222" font-weight="normal">119</text></g><g transform="translate(132.0 230.0)"><rect x="-11.0" y="-6.500" width="22" height="13" rx="5.500" fill="#fff" stroke="#333" stroke-width="1.100"/><text y="3.400" fill="#222" font-weight="normal">119</text></g><g transform="translate(141.0 147.0)"><rect x="-8.5" y="-6.500" width="17" height="13" rx="5.500" fill="#fff" stroke="#333" stroke-width="1.100"/><text y="3.400" fill="#222" font-weight="normal">40</text></g><g transform="translate(183.0 199.0)"><rect x="-8.5" y="-6.500" width="17" height="13" rx="5.500" fill="#fff" stroke="#333" stroke-width="1.100"/><text y="3.400" fill="#222" font-weight="normal">27</text></g><g transform="translate(260.0 235.0)"><path d="M-7 -7.500 q3.500 2 7 0 q3.500 2 7 0 q1.500 4 0 7.500 q0 5 -7 8 q-7 -3 -7 -8 q-1.500 -3.500 0 -7.500z" fill="#fff" stroke="#333" stroke-width="1.100"/><text y="3.500" fill="#222">3</text></g><g transform="translate(112.0 265.0)"><rect x="-7.5" y="-6.500" width="15" height="13" rx="5.500" fill="#fff" stroke="#333" stroke-width="1.100"/><text y="3.400" fill="#222" font-weight="normal">2</text></g><g transform="translate(207.0 319.0)"><rect x="-7.5" y="-6.500" width="15" height="13" rx="5.500" fill="#fff" stroke="#333" stroke-width="1.100"/><text y="3.400" fill="#222" font-weight="normal">2</text></g><g transform="translate(314.0 348.0)"><rect x="-7.5" y="-6.500" width="15" height="13" rx="5.500" fill="#fff" stroke="#333" stroke-width="1.100"/><text y="3.400" fill="#222" font-weight="normal">2</text></g><g transform="translate(6.0 291.0)"><rect x="-11.0" y="-6.500" width="22" height="13" rx="5.500" fill="#fff" stroke="#333" stroke-width="1.100"/><text y="3.400" fill="#222" font-weight="normal">110</text></g><g transform="translate(209.0 360.0)"><rect x="-11.0" y="-6.500" width="22" height="13" rx="5.500" fill="#fff" stroke="#333" stroke-width="1.100"/><text y="3.400" fill="#222" font-weight="normal">126</text></g><g transform="translate(107.0 706.0)"><rect x="-11.0" y="-6.500" width="22" height="13" rx="5.500" fill="#fff" stroke="#333" stroke-width="1.100"/><text y="3.400" fill="#222" font-weight="normal">126</text></g><g transform="translate(369.0 163.0)"><rect x="-11.0" y="-6.500" width="22" height="13" rx="5.500" fill="#fff" stroke="#333" stroke-width="1.100"/><text y="3.400" fill="#222" font-weight="normal">125</text></g><g transform="translate(367.0 137.0)"><rect x="-8.5" y="-6.500" width="17" height="13" rx="5.500" fill="#fff" stroke="#333" stroke-width="1.100"/><text y="3.400" fill="#222" font-weight="normal">28</text></g><g transform="translate(409.0 534.0)"><rect x="-8.5" y="-6.500" width="17" height="13" rx="5.500" fill="#fff" stroke="#333" stroke-width="1.100"/><text y="3.400" fill="#222" font-weight="normal">28</text></g><g transform="translate(397.0 124.0)"><rect x="-11.0" y="-6.500" width="22" height="13" rx="5.500" fill="#fff" stroke="#333" stroke-width="1.100"/><text y="3.400" fill="#222" font-weight="normal">114</text></g><g transform="translate(504.0 165.0)"><rect x="-8.5" y="-6.500" width="17" height="13" rx="5.500" fill="#fff" stroke="#333" stroke-width="1.100"/><text y="3.400" fill="#222" font-weight="normal">35</text></g><g transform="translate(734.0 91.0)"><rect x="-11.0" y="-6.500" width="22" height="13" rx="5.500" fill="#fff" stroke="#333" stroke-width="1.100"/><text y="3.400" fill="#222" font-weight="normal">127</text></g><g transform="translate(698.0 116.0)"><rect x="-11.0" y="-6.500" width="22" height="13" rx="5.500" fill="#fff" stroke="#333" stroke-width="1.100"/><text y="3.400" fill="#222" font-weight="normal">127</text></g><g transform="translate(734.0 137.0)"><rect x="-14.0" y="-6.500" width="28" height="13" rx="5.500" fill="#fff" stroke="#333" stroke-width="1.100"/><text y="3.400" fill="#222" font-weight="normal">127A</text></g><g transform="translate(549.0 283.0)"><rect x="-11.0" y="-6.500" width="22" height="13" rx="5.500" fill="#fff" stroke="#333" stroke-width="1.100"/><text y="3.400" fill="#222" font-weight="normal">129</text></g><g transform="translate(483.0 323.0)"><rect x="-8.5" y="-6.500" width="17" height="13" rx="5.500" fill="#fff" stroke="#333" stroke-width="1.100"/><text y="3.400" fill="#222" font-weight="normal">1A</text></g><g transform="translate(289.0 127.0)"><path d="M-10.5 -7.5h21v3.500h-21z" fill="#d9534f"/><path d="M-10.5 -4.500h21 c0 6 -2 9.500 -10.5 12.500 c-8.4 -3 -2.1 -6.500 -10.5 -12.500z" fill="#3f7dd1"/><path d="M-10.5 -4.700h21" stroke="#fff" stroke-width="1"/><text y="4" fill="#fff" font-size="9.500">495</text></g><g transform="translate(77.0 258.0)"><path d="M-10.5 -7.5h21v3.500h-21z" fill="#d9534f"/><path d="M-10.5 -4.500h21 c0 6 -2 9.500 -10.5 12.500 c-8.4 -3 -2.1 -6.500 -10.5 -12.500z" fill="#3f7dd1"/><path d="M-10.5 -4.700h21" stroke="#fff" stroke-width="1"/><text y="4" fill="#fff" font-size="9.500">495</text></g><g transform="translate(26.0 396.0)"><path d="M-10.5 -7.5h21v3.500h-21z" fill="#d9534f"/><path d="M-10.5 -4.500h21 c0 6 -2 9.500 -10.5 12.500 c-8.4 -3 -2.1 -6.500 -10.5 -12.500z" fill="#3f7dd1"/><path d="M-10.5 -4.700h21" stroke="#fff" stroke-width="1"/><text y="4" fill="#fff" font-size="9.500">495</text></g><g transform="translate(48.0 490.0)"><path d="M-10.5 -7.5h21v3.500h-21z" fill="#d9534f"/><path d="M-10.5 -4.500h21 c0 6 -2 9.500 -10.5 12.500 c-8.4 -3 -2.1 -6.500 -10.5 -12.500z" fill="#3f7dd1"/><path d="M-10.5 -4.700h21" stroke="#fff" stroke-width="1"/><text y="4" fill="#fff" font-size="9.500">495</text></g><g transform="translate(133.0 656.0)"><path d="M-10.5 -7.5h21v3.500h-21z" fill="#d9534f"/><path d="M-10.5 -4.500h21 c0 6 -2 9.500 -10.5 12.500 c-8.4 -3 -2.1 -6.500 -10.5 -12.500z" fill="#3f7dd1"/><path d="M-10.5 -4.700h21" stroke="#fff" stroke-width="1"/><text y="4" fill="#fff" font-size="9.500">495</text></g><g transform="translate(218.0 719.0)"><path d="M-10.5 -7.5h21v3.500h-21z" fill="#d9534f"/><path d="M-10.5 -4.500h21 c0 6 -2 9.500 -10.5 12.500 c-8.4 -3 -2.1 -6.500 -10.5 -12.500z" fill="#3f7dd1"/><path d="M-10.5 -4.700h21" stroke="#fff" stroke-width="1"/><text y="4" fill="#fff" font-size="9.500">495</text></g><g transform="translate(423.0 799.0)"><path d="M-10.5 -7.5h21v3.500h-21z" fill="#d9534f"/><path d="M-10.5 -4.500h21 c0 6 -2 9.500 -10.5 12.500 c-8.4 -3 -2.1 -6.500 -10.5 -12.500z" fill="#3f7dd1"/><path d="M-10.5 -4.700h21" stroke="#fff" stroke-width="1"/><text y="4" fill="#fff" font-size="9.500">495</text></g><g transform="translate(212.0 441.0)"><path d="M-8.5 -7.5h17v3.500h-17z" fill="#d9534f"/><path d="M-8.5 -4.500h17 c0 6 -2 9.500 -8.5 12.500 c-6.8 -3 -1.7 -6.500 -8.5 -12.500z" fill="#3f7dd1"/><path d="M-8.5 -4.700h17" stroke="#fff" stroke-width="1"/><text y="4" fill="#fff" font-size="9.500">90</text></g><g transform="translate(8.0 533.0)"><path d="M-8.5 -7.5h17v3.500h-17z" fill="#d9534f"/><path d="M-8.5 -4.500h17 c0 6 -2 9.500 -8.5 12.500 c-6.8 -3 -1.7 -6.500 -8.5 -12.500z" fill="#3f7dd1"/><path d="M-8.5 -4.700h17" stroke="#fff" stroke-width="1"/><text y="4" fill="#fff" font-size="9.500">90</text></g><g transform="translate(486.0 62.0)"><path d="M-8.5 -7.5h17v3.500h-17z" fill="#d9534f"/><path d="M-8.5 -4.500h17 c0 6 -2 9.500 -8.5 12.500 c-6.8 -3 -1.7 -6.500 -8.5 -12.500z" fill="#3f7dd1"/><path d="M-8.5 -4.700h17" stroke="#fff" stroke-width="1"/><text y="4" fill="#fff" font-size="9.500">95</text></g><g transform="translate(282.0 443.0)"><path d="M-8.5 -7.5h17v3.500h-17z" fill="#d9534f"/><path d="M-8.5 -4.500h17 c0 6 -2 9.500 -8.5 12.500 c-6.8 -3 -1.7 -6.500 -8.5 -12.500z" fill="#3f7dd1"/><path d="M-8.5 -4.700h17" stroke="#fff" stroke-width="1"/><text y="4" fill="#fff" font-size="9.500">95</text></g><g transform="translate(282.0 716.0)"><path d="M-8.5 -7.5h17v3.500h-17z" fill="#d9534f"/><path d="M-8.5 -4.500h17 c0 6 -2 9.500 -8.5 12.500 c-6.8 -3 -1.7 -6.500 -8.5 -12.500z" fill="#3f7dd1"/><path d="M-8.5 -4.700h17" stroke="#fff" stroke-width="1"/><text y="4" fill="#fff" font-size="9.500">95</text></g><g transform="translate(409.0 558.0)"><path d="M-8.5 -7.5h17v3.500h-17z" fill="#d9534f"/><path d="M-8.5 -4.500h17 c0 6 -2 9.500 -8.5 12.500 c-6.8 -3 -1.7 -6.500 -8.5 -12.500z" fill="#3f7dd1"/><path d="M-8.5 -4.700h17" stroke="#fff" stroke-width="1"/><text y="4" fill="#fff" font-size="9.500">93</text></g><g transform="translate(421.0 444.0)"><path d="M-7 -7.500 q3.500 2 7 0 q3.500 2 7 0 q1.500 4 0 7.500 q0 5 -7 8 q-7 -3 -7 -8 q-1.500 -3.500 0 -7.500z" fill="#fff" stroke="#333" stroke-width="1.100"/><text y="3.500" fill="#222">1</text></g><g transform="translate(495.0 519.0)"><rect x="-8.5" y="-6.500" width="17" height="13" rx="5.500" fill="#fff" stroke="#333" stroke-width="1.100"/><text y="3.400" fill="#222" font-weight="normal">3A</text></g><g transform="translate(618.0 553.0)"><rect x="-8.5" y="-6.500" width="17" height="13" rx="5.500" fill="#fff" stroke="#333" stroke-width="1.100"/><text y="3.400" fill="#222" font-weight="normal">3A</text></g><g transform="translate(676.0 681.0)"><rect x="-8.5" y="-6.500" width="17" height="13" rx="5.500" fill="#fff" stroke="#333" stroke-width="1.100"/><text y="3.400" fill="#222" font-weight="normal">3A</text></g><g transform="translate(380.0 524.0)"><rect x="-11.0" y="-6.500" width="22" height="13" rx="5.500" fill="#fff" stroke="#333" stroke-width="1.100"/><text y="3.400" fill="#222" font-weight="normal">138</text></g><g transform="translate(123.0 584.0)"><rect x="-8.5" y="-6.500" width="17" height="13" rx="5.500" fill="#fff" stroke="#333" stroke-width="1.100"/><text y="3.400" fill="#222" font-weight="normal">16</text></g><g transform="translate(222.0 692.0)"><rect x="-11.0" y="-6.500" width="22" height="13" rx="5.500" fill="#fff" stroke="#333" stroke-width="1.100"/><text y="3.400" fill="#222" font-weight="normal">140</text></g><g transform="translate(412.0 616.0)"><rect x="-8.5" y="-6.500" width="17" height="13" rx="5.500" fill="#fff" stroke="#333" stroke-width="1.100"/><text y="3.400" fill="#222" font-weight="normal">24</text></g><g transform="translate(427.0 743.0)"><rect x="-8.5" y="-6.500" width="17" height="13" rx="5.500" fill="#fff" stroke="#333" stroke-width="1.100"/><text y="3.400" fill="#222" font-weight="normal">24</text></g><g transform="translate(545.0 566.0)"><rect x="-11.0" y="-6.500" width="22" height="13" rx="5.500" fill="#fff" stroke="#333" stroke-width="1.100"/><text y="3.400" fill="#222" font-weight="normal">228</text></g><g transform="translate(526.0 693.0)"><rect x="-8.5" y="-6.500" width="17" height="13" rx="5.500" fill="#fff" stroke="#333" stroke-width="1.100"/><text y="3.400" fill="#222" font-weight="normal">27</text></g><g transform="translate(591.0 712.0)"><rect x="-8.5" y="-6.500" width="17" height="13" rx="5.500" fill="#fff" stroke="#333" stroke-width="1.100"/><text y="3.400" fill="#222" font-weight="normal">36</text></g><g transform="translate(636.0 712.0)"><rect x="-8.5" y="-6.500" width="17" height="13" rx="5.500" fill="#fff" stroke="#333" stroke-width="1.100"/><text y="3.400" fill="#222" font-weight="normal">53</text></g><g transform="translate(539.0 761.0)"><rect x="-11.0" y="-6.500" width="22" height="13" rx="5.500" fill="#fff" stroke="#333" stroke-width="1.100"/><text y="3.400" fill="#222" font-weight="normal">106</text></g><g transform="translate(477.0 787.0)"><rect x="-8.5" y="-6.500" width="17" height="13" rx="5.500" fill="#fff" stroke="#333" stroke-width="1.100"/><text y="3.400" fill="#222" font-weight="normal">18</text></g><g transform="translate(60.5 768.6)"><rect x="-11.0" y="-6.500" width="22" height="13" rx="5.500" fill="#fff" stroke="#333" stroke-width="1.100"/><text y="3.400" fill="#222" font-weight="normal">146</text></g><g transform="translate(115.7 773.0)"><rect x="-11.0" y="-6.500" width="22" height="13" rx="5.500" fill="#fff" stroke="#333" stroke-width="1.100"/><text y="3.400" fill="#222" font-weight="normal">122</text></g></g>
<g text-anchor="middle" fill="#2e2e2e" stroke="#fff" stroke-width="2.6" stroke-linejoin="round" paint-order="stroke" style="paint-order:stroke"><text x="120.0" y="8.0" font-size="14" fill="#111">Nashua</text><text x="224.0" y="37.0" font-size="11">Pelham</text><text x="322.0" y="46.3" font-size="12">Methuen</text><text x="341.0" y="66.0" font-size="14" fill="#111">Lawrence</text><text x="466.0" y="46.0" font-size="11">Georgetown</text><text x="576.0" y="92.0" font-size="11">Ipswich</text><text x="150.0" y="95.0" font-size="11">Tyngsborough</text><text x="240.0" y="101.0" font-size="11">Dracut</text><text x="361.0" y="113.0" font-size="11">Andover</text><text x="463.0" y="110.0" font-size="11">Boxford</text><text x="497.0" y="134.0" font-size="11">Topsfield</text><text x="574.0" y="135.0" font-size="11">Hamilton</text><text x="736.0" y="116.0" font-size="11">Rockport</text><text x="706.0" y="155.3" font-size="12">Gloucester</text><text x="230.0" y="139.0" font-size="14" fill="#111">Lowell</text><text x="290.0" y="159.0" font-size="11">Tewksbury</text><text x="448.0" y="176.0" font-size="11">Middleton</text><text x="539.0" y="167.0" font-size="11">Wenham</text><text x="193.0" y="170.3" font-size="12">Chelmsford</text><text x="402.0" y="195.0" font-size="11">North Reading</text><text x="510.0" y="195.0" font-size="11">Danvers</text><text x="629.0" y="193.0" font-size="11">Manchester-by-the-Sea</text><text x="140.0" y="191.3" font-size="12">Westford</text><text x="547.0" y="212.3" font-size="12">Beverly</text><text x="264.0" y="212.3" font-size="12">Billerica</text><text x="334.0" y="222.0" font-size="11">Wilmington</text><text x="390.0" y="244.0" font-size="11">Reading</text><text x="535.0" y="250.3" font-size="12">Salem</text><text x="86.0" y="233.0" font-size="11">Littleton</text><text x="205.0" y="241.0" font-size="11">Carlisle</text><text x="564.0" y="270.0" font-size="11">Marblehead</text><text x="318.0" y="265.0" font-size="11">Burlington</text><text x="408.0" y="265.0" font-size="11">Wakefield</text><text x="35.0" y="268.0" font-size="11">Harvard</text><text x="83.0" y="286.0" font-size="11">Boxborough</text><text x="145.0" y="284.3" font-size="12">Acton</text><text x="259.0" y="279.0" font-size="11">Bedford</text><text x="349.0" y="290.3" font-size="12">Woburn</text><text x="451.0" y="304.3" font-size="12">Saugus</text><text x="496.0" y="303.0" font-size="14" fill="#111">Lynn</text><text x="206.0" y="309.3" font-size="12">Concord</text><text x="361.0" y="317.0" font-size="11">Winchester</text><text x="293.0" y="326.3" font-size="12">Lexington</text><text x="17.0" y="335.0" font-size="11">Bolton</text><text x="91.0" y="332.0" font-size="11">Stow</text><text x="133.0" y="335.0" font-size="11">Maynard</text><text x="238.0" y="343.0" font-size="11">Lincoln</text><text x="519.0" y="342.0" font-size="11">Nahant</text><text x="383.0" y="352.0" font-size="14" fill="#111">Medford</text><text x="452.0" y="360.0" font-size="11">Revere</text><text x="48.0" y="376.3" font-size="12">Hudson</text><text x="156.0" y="385.0" font-size="11">Sudbury</text><text x="289.0" y="392.0" font-size="14" fill="#111">Waltham</text><text x="387.0" y="379.0" font-size="14" fill="#111">Somerville</text><text x="474.0" y="390.0" font-size="11">Winthrop</text><text x="197.0" y="405.0" font-size="11">Wayland</text><text x="57.0" y="422.3" font-size="12">Marlborough</text><text x="308.0" y="431.0" font-size="14" fill="#111">Newton</text><text x="372.0" y="437.0" font-size="14" fill="#111">Brookline</text><text x="78.0" y="461.0" font-size="11">Southborough</text><text x="247.0" y="470.3" font-size="12">Wellesley</text><text x="528.0" y="465.0" font-size="11">Hull</text><text x="157.0" y="488.0" font-size="14" fill="#111">Framingham</text><text x="287.0" y="486.3" font-size="12">Needham</text><text x="122.0" y="505.0" font-size="11">Ashland</text><text x="458.0" y="514.0" font-size="14" fill="#111">Quincy</text><text x="338.0" y="522.3" font-size="12">Dedham</text><text x="412.0" y="516.3" font-size="12">Milton</text><text x="540.0" y="524.0" font-size="11">Hingham</text><text x="597.0" y="524.0" font-size="11">Cohasset</text><text x="191.0" y="527.0" font-size="11">Sherborn</text><text x="79.0" y="537.0" font-size="11">Hopkinton</text><text x="503.0" y="548.0" font-size="14" fill="#111">Weymouth</text><text x="297.0" y="551.0" font-size="11">Westwood</text><text x="151.0" y="565.0" font-size="11">Holliston</text><text x="315.0" y="571.3" font-size="12">Norwood</text><text x="659.0" y="569.0" font-size="11">Scituate</text><text x="236.0" y="577.0" font-size="11">Medfield</text><text x="21.0" y="590.0" font-size="11">Upton</text><text x="204.0" y="598.0" font-size="11">Millis</text><text x="429.0" y="603.3" font-size="12">Randolph</text><text x="355.0" y="606.3" font-size="12">Canton</text><text x="611.0" y="603.0" font-size="11">Norwell</text><text x="85.0" y="624.3" font-size="12">Milford</text><text x="171.0" y="622.0" font-size="11">Medway</text><text x="278.0" y="622.3" font-size="12">Walpole</text><text x="430.0" y="633.0" font-size="11">Avon</text><text x="522.0" y="633.3" font-size="12">Rockland</text><text x="330.0" y="639.0" font-size="11">Sharon</text><text x="386.0" y="639.3" font-size="12">Stoughton</text><text x="224.0" y="644.0" font-size="11">Norfolk</text><text x="596.0" y="647.3" font-size="12">Hanover</text><text x="58.0" y="658.0" font-size="11">Mendon</text><text x="500.0" y="659.0" font-size="11">Abington</text><text x="114.0" y="676.0" font-size="11">Bellingham</text><text x="172.0" y="680.3" font-size="12">Franklin</text><text x="447.0" y="681.0" font-size="14" fill="#111">Brockton</text><text x="507.0" y="682.0" font-size="11">Whitman</text><text x="676.0" y="671.3" font-size="12">Marshfield</text><text x="599.0" y="691.0" font-size="11">Pembroke</text><text x="279.0" y="697.0" font-size="11">Foxborough</text><text x="699.0" y="721.3" font-size="12">Duxbury</text><text x="490.0" y="722.0" font-size="11">East</text><text x="489.0" y="734.0" font-size="11">Bridgewater</text><text x="367.0" y="737.0" font-size="11">Easton</text><text x="67.0" y="744.0" font-size="11">Blackstone</text><text x="86.2" y="759.3" font-size="12">Woonsocket</text><text x="218.0" y="757.0" font-size="11">Plainville</text><text x="661.0" y="767.3" font-size="12">Kingston</text><text x="478.0" y="771.0" font-size="11">Bridgewater</text><text x="60.5" y="788.5" font-size="11">North</text><text x="61.0" y="800.5" font-size="11">Smithfield</text><text x="201.0" y="785.3" font-size="12">North</text><text x="200.5" y="797.8" font-size="12">Attleborough</text><text x="324.0" y="794.0" font-size="11">Norton</text><text x="571.0" y="2.0" font-size="11">Newbury</text><text x="438.0" y="12.0" font-size="11">Groveland</text><text x="42.0" y="160.0" font-size="11">Groton</text><text x="31.0" y="209.0" font-size="11">Ayer</text><text x="32.0" y="105.0" font-size="11">Pepperell</text><text x="33.0" y="30.0" font-size="11">Hollis</text><text x="7.0" y="390.0" font-size="11">lin</text><text x="11.0" y="448.0" font-size="11">rough</text><text x="9.5" y="613.0" font-size="11">dge</text><text x="12.0" y="686.0" font-size="11">ridge</text><text x="605.5" y="21.0" font-size="11" font-style="italic">Plum Island</text><text x="417.0" y="410.5" font-size="18" fill="#000" stroke-width="3">Boston</text></g>
<path d="M374.6 381.4 L396.5 377.6 L402.5 382.3 L419.5 375.3 L423.0 389.0 L425.8 402.3 L411.4 408.2 L392.4 404.2 L375.6 396.3Z" fill="#f25a55" fill-opacity=".45" stroke="#ee3333" stroke-width="2"/><g transform="translate(61.0 482.5)"><path d="M0 0 C-1 -8 -3.500 -13 -7 -18 C-9.500 -21.500 -11 -25 -11 -29 A11 11 0 0 1 11 -29 C11 -25 9.500 -21.500 7 -18 C3.500 -13 1 -8 0 0Z" fill="url(#pin)" stroke="#c9372f" stroke-width=".8"/><circle cx="0" cy="-29" r="3.600" fill="#5b1512"/></g><g transform="translate(380.2 390.0)"><path d="M0 0 C-1 -8 -3.500 -13 -7 -18 C-9.500 -21.500 -11 -25 -11 -29 A11 11 0 0 1 11 -29 C11 -25 9.500 -21.500 7 -18 C3.500 -13 1 -8 0 0Z" fill="url(#pin)" stroke="#c9372f" stroke-width=".8"/><circle cx="0" cy="-29" r="3.600" fill="#5b1512"/></g><g transform="translate(415.0 391.0)"><path d="M0 0 C-1 -8 -3.500 -13 -7 -18 C-9.500 -21.500 -11 -25 -11 -29 A11 11 0 0 1 11 -29 C11 -25 9.500 -21.500 7 -18 C3.500 -13 1 -8 0 0Z" fill="url(#pin)" stroke="#c9372f" stroke-width=".8"/><circle cx="0" cy="-29" r="3.600" fill="#5b1512"/></g><g transform="translate(401.8 401.0)"><path d="M0 0 C-1 -8 -3.500 -13 -7 -18 C-9.500 -21.500 -11 -25 -11 -29 A11 11 0 0 1 11 -29 C11 -25 9.500 -21.500 7 -18 C3.500 -13 1 -8 0 0Z" fill="url(#pin)" stroke="#c9372f" stroke-width=".8"/><circle cx="0" cy="-29" r="3.600" fill="#5b1512"/></g><g transform="translate(417.0 404.5)"><path d="M0 0 C-1 -8 -3.500 -13 -7 -18 C-9.500 -21.500 -11 -25 -11 -29 A11 11 0 0 1 11 -29 C11 -25 9.500 -21.500 7 -18 C3.500 -13 1 -8 0 0Z" fill="url(#pin)" stroke="#c9372f" stroke-width=".8"/><circle cx="0" cy="-29" r="3.600" fill="#5b1512"/></g><circle cx="374.0" cy="388.4" r="3.400" fill="#fff" fill-opacity=".55" stroke="#ee3333" stroke-opacity=".6" stroke-width="1.200"/><circle cx="388.2" cy="389.0" r="3.400" fill="#fff" fill-opacity=".55" stroke="#ee3333" stroke-opacity=".6" stroke-width="1.200"/><circle cx="396.5" cy="377.6" r="3.400" fill="#fff" fill-opacity=".55" stroke="#ee3333" stroke-opacity=".6" stroke-width="1.200"/><circle cx="423.0" cy="389.0" r="3.400" fill="#fff" fill-opacity=".55" stroke="#ee3333" stroke-opacity=".6" stroke-width="1.200"/><circle cx="399.0" cy="399.0" r="3.400" fill="#fff" fill-opacity=".55" stroke="#ee3333" stroke-opacity=".6" stroke-width="1.200"/><circle cx="417.0" cy="405.0" r="3.400" fill="#fff" fill-opacity=".55" stroke="#ee3333" stroke-opacity=".6" stroke-width="1.200"/><circle cx="374.6" cy="381.4" r="3.600" fill="#fff" stroke="#e8262a" stroke-width="1.300"/><circle cx="375.6" cy="396.3" r="3.600" fill="#fff" stroke="#e8262a" stroke-width="1.300"/><circle cx="402.5" cy="382.3" r="3.600" fill="#fff" stroke="#e8262a" stroke-width="1.300"/><circle cx="419.5" cy="375.3" r="3.600" fill="#fff" stroke="#e8262a" stroke-width="1.300"/><circle cx="396.2" cy="393.2" r="3.600" fill="#fff" stroke="#e8262a" stroke-width="1.300"/><circle cx="405.6" cy="391.3" r="3.600" fill="#fff" stroke="#e8262a" stroke-width="1.300"/><circle cx="411.4" cy="395.3" r="3.600" fill="#fff" stroke="#e8262a" stroke-width="1.300"/><circle cx="405.6" cy="401.0" r="3.600" fill="#fff" stroke="#e8262a" stroke-width="1.300"/><circle cx="392.4" cy="404.2" r="3.600" fill="#fff" stroke="#e8262a" stroke-width="1.300"/><circle cx="411.4" cy="408.2" r="3.600" fill="#fff" stroke="#e8262a" stroke-width="1.300"/><circle cx="425.8" cy="402.3" r="3.600" fill="#fff" stroke="#e8262a" stroke-width="1.300"/>
<defs><filter id="sh1" x="-20%" y="-20%" width="140%" height="150%"><feGaussianBlur in="SourceAlpha" stdDeviation="1.200"/><feOffset dy="1"/><feComponentTransfer><feFuncA type="linear" slope=".4"/></feComponentTransfer><feMerge><feMergeNode/><feMergeNode in="SourceGraphic"/></feMerge></filter></defs><g filter="url(#sh1)"><circle cx="44" cy="44.500" r="24.500" fill="#fff"/></g><g fill="none" stroke="#757575" stroke-width="2.200"><path d="M38.500 33.500 L44 28 L49.500 33.500"/><path d="M38.500 55.500 L44 61 L49.500 55.500"/><path d="M33 39 L27.500 44.500 L33 50"/><path d="M55 39 L60.500 44.500 L55 50"/></g><g filter="url(#sh1)"><rect x="36" y="92.500" width="16" height="33" rx="1.500" fill="#fff"/></g><circle cx="44" cy="100" r="3.300" fill="#f5a623" stroke="#c97f10" stroke-width=".6"/><path d="M39.500 104.500 h9 l.8 8 h-1.800 l-.7 9.500 h-5.600 l-.7 -9.500 h-1.800z" fill="#fcc419" stroke="#c98a10" stroke-width=".6"/><path d="M41.200 104.500 h5.600 l-2.800 3.800z" fill="#e8614d"/><rect x="42.600" y="154" width="2.800" height="181" fill="#fff" stroke="#c8c8c8" stroke-width=".6"/><g filter="url(#sh1)"><rect x="36" y="139" width="16" height="15.500" rx="1.500" fill="#fff"/><rect x="36" y="335" width="16" height="16" rx="1.500" fill="#fff"/><rect x="36" y="244.500" width="16" height="8" rx="1" fill="#fff"/></g><path d="M40 146.700 h8 M44 142.700 v8 M40.500 343 h7" stroke="#777" stroke-width="1.700" fill="none"/><path d="M40 248.500 h8" stroke="#aaa" stroke-width="1"/><g filter="url(#sh1)"><rect x="376" y="7" width="24" height="24" rx="2" fill="#fff"/><rect x="401" y="7" width="24" height="24" rx="2" fill="#fff"/></g><g transform="translate(380.500 10.500)"><path d="M5.200 14.800 L2 10.200 Q1 8.600 2.300 8.200 Q3.300 8 4.200 9.200 L5.200 10.500 V3.600 Q5.200 2.500 6.200 2.500 Q7.200 2.500 7.200 3.600 V2.300 Q7.200 1.200 8.200 1.200 Q9.300 1.200 9.300 2.300 V3.400 Q9.300 2.400 10.300 2.400 Q11.300 2.400 11.300 3.500 V5 Q11.400 4.200 12.300 4.200 Q13.200 4.200 13.200 5.300 V10.500 Q13.200 12.500 12 14.800 V16.500 H5.200Z" fill="#fff" stroke="#000" stroke-width="1.100" stroke-linejoin="round"/><path d="M7.200 3.600V8 M9.300 3.400V8 M11.300 5V8.300" stroke="#000" stroke-width=".9" fill="none"/></g><path d="M406.500 14 L412 19 L420.200 15.500 L417.700 21 L409.200 24.500Z" fill="#b5b5b5" stroke="#9a9a9a" stroke-width=".8"/><g filter="url(#sh1)"><rect x="708" y="6.500" width="33.500" height="17.500" rx="2" fill="#fff"/><rect x="742" y="6.500" width="52.500" height="17.500" rx="2" fill="#fff"/></g><text x="724.700" y="19" font-size="11" font-weight="bold" fill="#000" text-anchor="middle">Map</text><text x="768.200" y="19" font-size="11" fill="#565656" text-anchor="middle">Satellite</text><rect x="512" y="787" width="288" height="14" fill="#fff" fill-opacity=".65"/><g font-size="10" fill="#444"><text x="518" y="797.500">Map data ©2015 Google</text><text x="638" y="797.500">Terms of Use</text><text x="710" y="797.500">Report a map error</text></g><path d="M632 787 v13 M704 787 v13" stroke="#ccc" stroke-width="1"/><text x="8" y="792" font-size="19" font-weight="bold" fill="#fff" fill-opacity=".85" stroke="#999" stroke-opacity=".5" stroke-width=".6" letter-spacing="-.5">Google</text>
</svg>
</div>
<div id="alert" class="abs"><div><b>Info!</b> Use the <b>controls on top of the map</b> to draw the routes. If you want to update<br>the location of your customers using their mailing addresses please run the process<br>located on the <b>top menu</b>.</div>
<svg class="abs" style="left:533px;top:22px" width="10" height="10" viewBox="0 0 10 10"><path d="M1.5 1.5L8 8M8 1.5L1.5 8" stroke="#9fb7c4" stroke-width="2.2"/></svg></div>
<div id="intuit" class="abs">
<div class="abs" style="left:68px;top:0;width:1px;height:25px;background:#dfe3ea"></div>
<svg class="abs" style="left:9px;top:3px" width="56" height="18" viewBox="0 0 56 18"><g fill="none" stroke="#365ebf" stroke-width="2.500" stroke-linecap="butt"><path d="M3.300 7v9"/><path d="M8.300 16v-9 M8.300 10.500 Q8.300 7.800 11.500 7.800 Q14.700 7.800 14.700 10.800 V16"/><path d="M21.200 3.500v9.500 Q21.200 15.300 24.300 15.200" /><path d="M17.500 7.700h7.500"/><path d="M28.500 7v5.500 Q28.500 15.200 31.700 15.200 Q34.900 15.200 34.900 12.500 V7"/><path d="M39.800 7v9"/><path d="M46 3.500v9.500 Q46 15.300 49 15.200"/><path d="M42.500 7.700h7.500"/></g><g fill="#365ebf"><circle cx="21.200" cy="1.600" r="1.300"/><circle cx="46" cy="1.600" r="1.300"/><circle cx="52.300" cy="15.300" r=".9"/></g></svg>
<svg class="abs" style="left:73px;top:5px" width="17" height="17" viewBox="0 0 17 17"><defs><linearGradient id="ig" x1="0" y1="0" x2="0" y2="1"><stop offset="0" stop-color="#5b8fe8"/><stop offset="1" stop-color="#2458c4"/></linearGradient></defs><circle cx="8.500" cy="8.500" r="7.800" fill="url(#ig)"/><path d="M3.800 6.800h9.400l-4.700 5.400z" fill="#fff"/></svg>
</div>
<svg class="abs" style="left:1320px;top:20px;pointer-events:none;z-index:6" width="354" height="115" viewBox="1320 20 354 115"><defs><filter id="esh" x="-10%" y="-20%" width="120%" height="150%"><feGaussianBlur in="SourceAlpha" stdDeviation="2.500"/><feOffset dy="3"/><feComponentTransfer><feFuncA type="linear" slope=".45"/></feComponentTransfer><feMerge><feMergeNode/><feMergeNode in="SourceGraphic"/></feMerge></filter></defs>
<ellipse cx="1498.500" cy="75.500" rx="158.500" ry="38.700" fill="none" stroke="#dd2200" stroke-width="5.800" filter="url(#esh)" transform="rotate(1.200 1498.500 75.500)"/></svg>
<div id="chat" class="abs"><i></i><svg class="abs" style="left:10px;top:7px" width="18" height="18" viewBox="0 0 18 18"><path d="M4 1h9.5a3.5 3.5 0 0 1 3.500 3.500v3.500a3.500 3.500 0 0 1-3.500 3.500h-4.500l-3.500 3.800l.4-3.800h-1.900a3.500 3.500 0 0 1-3.500-3.500v-3.500a3.500 3.500 0 0 1 3.500-3.500z" fill="#fff"/></svg><span>Chat with us</span></div>
<div id="botline" class="abs"></div><div id="botline2" class="abs"></div>
</body></html>
